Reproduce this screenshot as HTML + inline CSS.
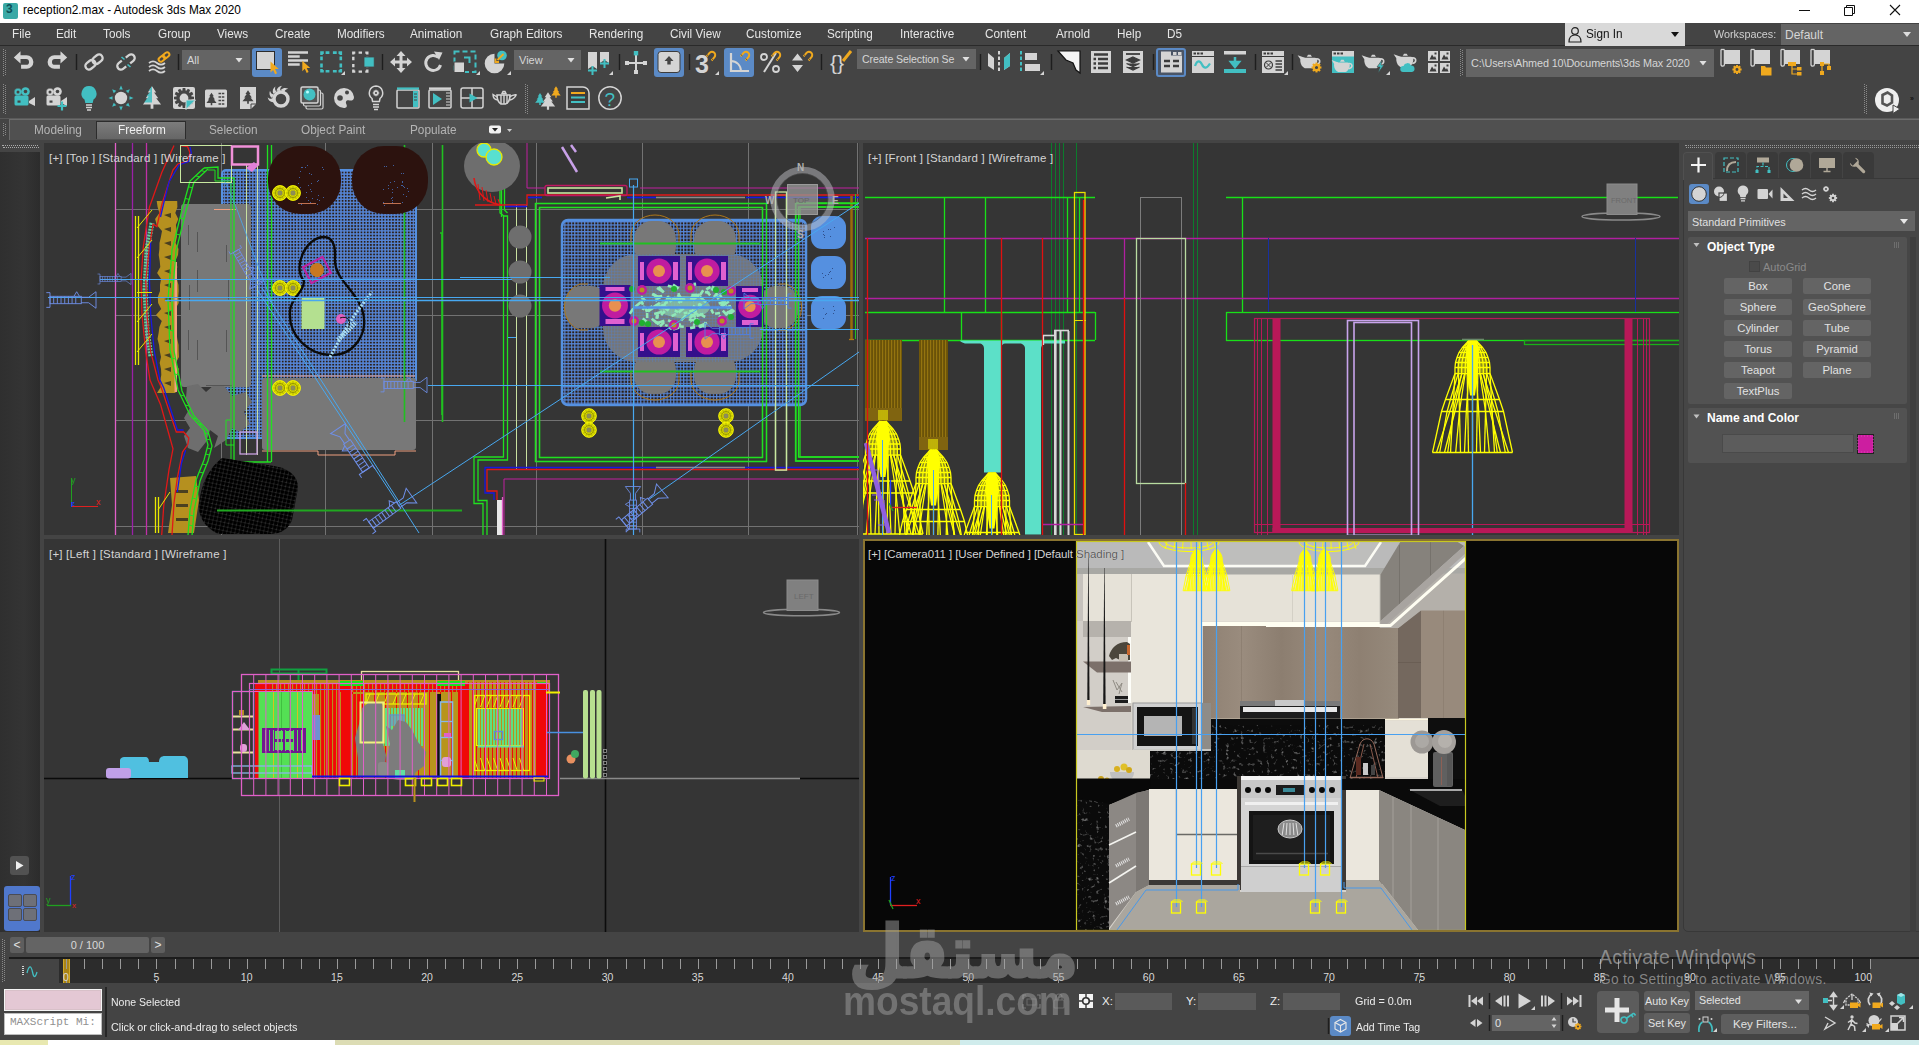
<!DOCTYPE html><html><head><meta charset="utf-8"><title>reception2.max - Autodesk 3ds Max 2020</title><style>
*{box-sizing:border-box;margin:0;padding:0}
html,body{width:1919px;height:1045px;overflow:hidden;background:#444;}
body{position:relative;font-family:"Liberation Sans","DejaVu Sans",sans-serif;font-size:12px;color:#dcdcdc;}
.abs{position:absolute}
.t{position:absolute;white-space:nowrap;line-height:1}
#title{position:absolute;left:0;top:0;width:1919px;height:23px;background:#fff;color:#000}
#menu{position:absolute;left:0;top:23px;width:1919px;height:23px;background:#444;border-bottom:1px solid #2a2a2a}
#menu .t{top:5px;font-size:12.5px;color:#e6e6e6;transform:scaleX(.94);transform-origin:0 0}
.sx{transform:scaleX(.92);transform-origin:0 0}
.dd{position:absolute;background:#646464;color:#d6d6d6;font-size:11px;white-space:nowrap;overflow:hidden}
.btn{position:absolute;background:#646464;border-radius:2px;color:#e2e2e2;font-size:11.5px;text-align:center;white-space:nowrap}
.vp{position:absolute;background:#353535;overflow:hidden}
.vlabel{position:absolute;left:4px;top:8px;font-size:11.5px;color:#d4d4d4;white-space:nowrap;letter-spacing:0.2px}
svg{position:absolute;left:0;top:0;overflow:visible}
</style></head><body>
<div id="title">
<div class="abs" style="left:3px;top:3px;width:15px;height:16px;background:#3aa9a6;border-radius:2px"></div>
<div class="t" style="left:6px;top:3px;font-size:12px;font-weight:bold;color:#0d4f57">3</div>
<div class="t" style="left:23px;top:5px;font-size:11.85px;color:#000">reception2.max - Autodesk 3ds Max 2020</div>
<svg width="1919" height="23"><path d="M1799 10.5h11" stroke="#111" stroke-width="1"/><path d="M1844.5 7.5h8v8h-8z M1846.500 7.5v-2h8v8h-2" fill="none" stroke="#111" stroke-width="1"/><path d="M1890 5l10 10M1900 5l-10 10" stroke="#111" stroke-width="1.1"/></svg>
</div>
<div id="menu">
<div class="t" style="left:12px">File</div>
<div class="t" style="left:56px">Edit</div>
<div class="t" style="left:103px">Tools</div>
<div class="t" style="left:158px">Group</div>
<div class="t" style="left:217px">Views</div>
<div class="t" style="left:275px">Create</div>
<div class="t" style="left:337px">Modifiers</div>
<div class="t" style="left:410px">Animation</div>
<div class="t" style="left:490px">Graph Editors</div>
<div class="t" style="left:589px">Rendering</div>
<div class="t" style="left:670px">Civil View</div>
<div class="t" style="left:746px">Customize</div>
<div class="t" style="left:827px">Scripting</div>
<div class="t" style="left:900px">Interactive</div>
<div class="t" style="left:985px">Content</div>
<div class="t" style="left:1056px">Arnold</div>
<div class="t" style="left:1117px">Help</div>
<div class="t" style="left:1167px">D5</div>
<div class="abs" style="left:1565px;top:0;width:120px;height:23px;background:#d9d9d9"></div>
<div class="t" style="left:1586px;top:5px;color:#111;font-size:12.5px">Sign In</div>
<div class="t" style="left:1714px;top:6px;color:#d0d0d0;font-size:11.5px">Workspaces:</div>
<div class="dd" style="left:1781px;top:1px;width:138px;height:21px;padding:4px 0 0 4px;font-size:12px">Default</div>
<svg width="1919" height="23"><path d="M1671 9h8l-4 5z" fill="#111"/><path d="M1903 9h8l-4 5z" fill="#ddd"/><circle cx="1575" cy="8" r="3.3" fill="none" stroke="#222" stroke-width="1.2"/><path d="M1569 19c0-5 3-7 6-7s6 2 6 7z" fill="none" stroke="#222" stroke-width="1.2"/></svg>
</div>
<div class="abs" style="left:0;top:118px;width:1919px;height:1px;background:#5a5a5a"></div>
<div class="abs" style="left:9px;top:119px;width:1910px;height:21px;background:#505050;border-top:1px solid #6c6c6c;border-left:1px solid #6c6c6c"></div>
<div class="abs" style="left:96px;top:121px;width:90px;height:18px;background:linear-gradient(#7c7c7c,#666);border:1px solid #2c2c2c;border-bottom:none"></div>
<div class="t" style="left:34px;top:124px;font-size:12.3px;color:#b4b4b4;transform:scaleX(.96);transform-origin:0 0">Modeling</div>
<div class="t" style="left:118px;top:124px;font-size:12.3px;color:#f0f0f0;transform:scaleX(.96);transform-origin:0 0">Freeform</div>
<div class="t" style="left:209px;top:124px;font-size:12.3px;color:#b4b4b4;transform:scaleX(.96);transform-origin:0 0">Selection</div>
<div class="t" style="left:301px;top:124px;font-size:12.3px;color:#b4b4b4;transform:scaleX(.96);transform-origin:0 0">Object Paint</div>
<div class="t" style="left:410px;top:124px;font-size:12.3px;color:#b4b4b4;transform:scaleX(.96);transform-origin:0 0">Populate</div>
<div class="dd" style="left:182px;top:50px;width:68px;height:20px;padding:4px 0 0 5px">All</div>
<div class="dd" style="left:514px;top:50px;width:67px;height:20px;padding:4px 0 0 5px">View</div>
<div class="dd" style="left:857px;top:49px;width:119px;height:20px;padding:4px 0 0 5px;font-size:10.6px;letter-spacing:-0.1px">Create Selection Se</div>
<div class="dd" style="left:1466px;top:49px;width:248px;height:28px;padding:8px 0 0 5px;font-size:10.8px;letter-spacing:-0.1px">C:\Users\Ahmed 10\Documents\3ds Max 2020</div>
<div class="abs" style="left:252px;top:48px;width:30px;height:29px;background:#5b8ac6;border-radius:3px"></div>
<div class="abs" style="left:654px;top:48px;width:30px;height:29px;background:#5b8ac6;border-radius:3px"></div>
<div class="abs" style="left:724px;top:48px;width:30px;height:29px;background:#5b8ac6;border-radius:3px"></div>
<div class="abs" style="left:1156px;top:48px;width:30px;height:29px;border:2px solid #5b8ac6;border-radius:3px;background:#4a5566"></div>
<svg width="1919" height="145"><path d="M235.5 58h7l-3.500 4.500z" fill="#e0e0e0"/><path d="M567.5 58h7l-3.500 4.500z" fill="#e0e0e0"/><path d="M962.5 57h7l-3.500 4.500z" fill="#e0e0e0"/><path d="M1699.5 61h7l-3.500 4.500z" fill="#e0e0e0"/><path d="M3.5 49V76M5.5 50V76" stroke="#8a8a8a" stroke-width="1" stroke-dasharray="1 1"/><path d="M3.5 84V114M5.5 85V114" stroke="#8a8a8a" stroke-width="1" stroke-dasharray="1 1"/><path d="M1460.5 49V76M1462.5 50V76" stroke="#8a8a8a" stroke-width="1" stroke-dasharray="1 1"/><path d="M525.5 84V114M527.5 85V114" stroke="#8a8a8a" stroke-width="1" stroke-dasharray="1 1"/><path d="M1864.5 84V114M1866.5 85V114" stroke="#8a8a8a" stroke-width="1" stroke-dasharray="1 1"/><path d="M3.5 123V136M5.5 124V136" stroke="#8a8a8a" stroke-width="1" stroke-dasharray="1 1"/><g transform="translate(25,62)" ><path transform="scale(1.12)" d="M-10 -4l6 -5.500v3.500h5.500a6 6 0 0 1 0 12h-5v-3.500h4.500a2.600 2.600 0 0 0 0 -5.200h-5v4z" fill="#d4d4d4"/></g><g transform="translate(56,62)" ><path transform="scale(-1.120,1.120)" d="M-10 -4l6 -5.500v3.500h5.500a6 6 0 0 1 0 12h-5v-3.500h4.500a2.600 2.600 0 0 0 0 -5.200h-5v4z" fill="#d4d4d4"/></g><path d="M76.5 54v16" stroke="#1e1e1e" stroke-width="1.4"/><g transform="translate(94,62)" ><g transform="rotate(-38)" fill="none" stroke="#d4d4d4" stroke-width="2.300"><rect x="-10" y="-3.600" width="11" height="7.200" rx="3.600"/><rect x="-1" y="-3.600" width="11" height="7.200" rx="3.600"/></g></g><g transform="translate(126,62)" ><g transform="rotate(-38)" fill="none" stroke="#d4d4d4" stroke-width="2.300"><path d="M-2.500 -3.600h-4a3.600 3.600 0 0 0 0 7.200h4M2.500 -3.600h4a3.600 3.600 0 0 1 0 7.200h-4"/></g><path d="M-4.500 -5l3 2.500M1.500 2.500l3 2.500" stroke="#42bfc2" stroke-width="1.600"/></g><g transform="translate(159,62)" ><path d="M-10 1c3 -2.500 5 -2.500 8 0s5 2.500 8 0M-10 5c3 -2.500 5 -2.500 8 0s5 2.500 8 0M-10 9c3 -2.500 5 -2.500 8 0s5 2.500 8 0" fill="none" stroke="#d4d4d4" stroke-width="1.700"/><g transform="translate(5,-5) rotate(-38) scale(.62)" fill="none" stroke="#f0a91e" stroke-width="3.200"><rect x="-10" y="-3.600" width="11" height="7.200" rx="3.600"/><rect x="-1" y="-3.600" width="11" height="7.200" rx="3.600"/></g></g><path d="M178.5 54v16" stroke="#1e1e1e" stroke-width="1.4"/><rect x="256.500" y="51.500" width="18" height="18" fill="#d4d4d4" stroke="#2c2c2c" stroke-width="1"/><g transform="translate(270.500,61.500) scale(1.150)"><path transform="translate(0,0)" d="M0 0v9.500l2.300 -2.200l1.700 3.700l1.700 -.8l-1.700 -3.600h3.200z" fill="#f0a91e"/></g><path d="M288 52.500h20M288 56.500h11.700M288 60.500h20M288 64.500h11.700" stroke="#d4d4d4" stroke-width="2.600"/><g transform="translate(302.300,60.800) scale(1.100)"><path transform="translate(0,0)" d="M0 0v9.500l2.300 -2.200l1.700 3.700l1.700 -.8l-1.700 -3.600h3.200z" fill="#f0a91e"/></g><path d="M320.20 52.60l3.60 0.00M338.50 52.60l3.60 0.00M325.60 52.60l3.80 0.00M332.90 52.60l3.80 0.00M320.20 71.30l3.60 0.00M338.50 71.30l3.60 0.00M325.60 71.30l3.80 0.00M332.90 71.30l3.80 0.00M321.50 51.30l0.00 3.60M321.50 69.00l0.00 3.60M321.50 56.50l0.00 3.80M321.50 63.60l0.00 3.80M340.80 51.30l0.00 3.60M340.80 69.00l0.00 3.60M340.80 56.50l0.00 3.80M340.80 63.60l0.00 3.80" stroke="#42bfc2" stroke-width="2.6" fill="none"/><path d="M345 75v-4l-4 4z" fill="#d4d4d4"/><path d="M352.10 52.60l3.20 0.00M365.30 52.60l3.20 0.00M358.60 52.60l3.40 0.00M352.10 71.60l3.20 0.00M365.30 71.60l3.20 0.00M358.60 71.60l3.40 0.00M353.30 51.40l0.00 3.20M353.30 69.60l0.00 3.20M353.30 56.83l0.00 3.40M353.30 63.97l0.00 3.40M367.30 51.40l0.00 3.20M367.30 69.60l0.00 3.20M367.30 56.83l0.00 3.40M367.30 63.97l0.00 3.40" stroke="#d4d4d4" stroke-width="2.4" fill="none"/><rect x="364" y="57" width="10.200" height="10" fill="#42bfc2" stroke="#444444" stroke-width=".8"/><path d="M382.5 54v16" stroke="#1e1e1e" stroke-width="1.4"/><g transform="translate(401,62)" ><path d="M0 -11l4.500 5h-3v4.500h4.500v-3l5 4.500l-5 4.500v-3h-4.500v4.500h3l-4.500 5l-4.500 -5h3v-4.500h-4.500v3l-5 -4.500l5 -4.500v3h4.500v-4.500h-3z" fill="#d4d4d4"/></g><g transform="translate(433,62)" ><path d="M5.500 -4.500A7.500 7.500 0 1 0 7.500 3" fill="none" stroke="#d4d4d4" stroke-width="3"/><path d="M1 -10.500l8.500 1l-3.500 7.500z" fill="#d4d4d4"/></g><g transform="translate(465,62)" ><rect x="-10.500" y="-10.500" width="21" height="20.500" fill="none" stroke="#42bfc2" stroke-width="2" stroke-dasharray="5 3"/><rect x="-11" y="0" width="10.500" height="10.500" fill="#d4d4d4" stroke="#444444" stroke-width="1"/><path d="M-1 -4.500h5.500v5.500" fill="none" stroke="#42bfc2" stroke-width="2"/></g><path d="M480 75v-4l-4 4z" fill="#d4d4d4"/><g transform="translate(496,62)" ><path d="M-1.500 1.500v-9.800a9.800 9.800 0 1 0 9.800 9.800z" fill="#d4d4d4"/><circle cx="6" cy="-6.500" r="4.800" fill="#42bfc2"/><path d="M7.500 -8l-6 6M-.5 -3.500v3.500h3.500" fill="none" stroke="#f0a91e" stroke-width="1.800"/></g><path d="M511 75v-4l-4 4z" fill="#d4d4d4"/><g transform="translate(599,62)" ><path d="M-11 -10h9v17l-4.500 -3l-4.500 3zM1 -10h9v11l-4.500 -3l-4.500 3z" fill="#d4d4d4"/><path d="M-6.500 4v9M-11 8.500h9M5.500 -3v9M1 1.500h9" stroke="#42bfc2" stroke-width="2"/></g><path d="M613 75v-4l-4 4z" fill="#d4d4d4"/><path d="M619.5 54v16" stroke="#1e1e1e" stroke-width="1.4"/><g transform="translate(636,62)" ><path d="M0 -8v18M-10 1h20" stroke="#d4d4d4" stroke-width="2"/><rect x="-2.200" y="-11" width="4.400" height="4.400" fill="#42bfc2"/><rect x="-11" y="-1" width="4" height="4" fill="#d4d4d4"/><rect x="7" y="-1" width="4" height="4" fill="#d4d4d4"/><rect x="-2" y="8" width="4" height="4" fill="#d4d4d4"/></g><g transform="translate(669,62)" ><rect x="-11" y="-10.500" width="22" height="21" rx="3" fill="#d4d4d4" stroke="#3c3c3c" stroke-width="1"/><path d="M0 -6l4.500 5h-2.800v3.500h-3.400v-3.500h-2.800z" fill="#444"/></g><path d="M689.5 54v16" stroke="#1e1e1e" stroke-width="1.4"/><text x="695" y="73" font-family="Liberation Sans,sans-serif" font-weight="bold" font-size="25" fill="#d4d4d4">3</text><g transform="translate(712,55) rotate(40) scale(1)"><path d="M-3.2 4.5V0a3.2 3.2 0 0 1 6.400 0V4.5" fill="none" stroke="#f0a91e" stroke-width="2"/><path d="M-4.300 3h2.2M2.1 3h2.2" stroke="#444444" stroke-width="0.8"/></g><path d="M719 75v-4l-4 4z" fill="#d4d4d4"/><g transform="translate(739,62)" ><path d="M-8 -9v18h18" fill="none" stroke="#d4d4d4" stroke-width="2.200"/><path d="M-8 -1a10 10 0 0 1 10 10" fill="none" stroke="#d4d4d4" stroke-width="1.800"/></g><g transform="translate(746,55) rotate(40) scale(1)"><path d="M-3.2 4.5V0a3.2 3.2 0 0 1 6.400 0V4.5" fill="none" stroke="#f0a91e" stroke-width="2"/><path d="M-4.300 3h2.2M2.1 3h2.2" stroke="#444444" stroke-width="0.8"/></g><g transform="translate(770,62)" ><path d="M6 -9l-12 19" stroke="#d4d4d4" stroke-width="2"/><circle cx="-6" cy="-5" r="3" fill="none" stroke="#d4d4d4" stroke-width="1.800"/><circle cx="6" cy="7" r="3" fill="none" stroke="#d4d4d4" stroke-width="1.800"/></g><g transform="translate(777,55) rotate(40) scale(1)"><path d="M-3.2 4.5V0a3.2 3.2 0 0 1 6.400 0V4.5" fill="none" stroke="#f0a91e" stroke-width="2"/><path d="M-4.300 3h2.2M2.1 3h2.2" stroke="#444444" stroke-width="0.8"/></g><g transform="translate(800,62)" ><path d="M-8 -1.500h11l-5.500 -7zM-8 3h11l-5.500 7z" fill="#d4d4d4"/></g><g transform="translate(809,55) rotate(40) scale(1)"><path d="M-3.2 4.5V0a3.2 3.2 0 0 1 6.400 0V4.5" fill="none" stroke="#f0a91e" stroke-width="2"/><path d="M-4.300 3h2.2M2.1 3h2.2" stroke="#444444" stroke-width="0.8"/></g><path d="M821.5 54v16" stroke="#1e1e1e" stroke-width="1.4"/><text x="830" y="70" font-family="Liberation Sans,sans-serif" font-size="21" fill="#d4d4d4">{}</text><path d="M851 51l-8 10" stroke="#f0a91e" stroke-width="3"/><path d="M980.5 54v16" stroke="#1e1e1e" stroke-width="1.4"/><g transform="translate(999,62)" ><path d="M-11 -9l6 5v12l-6 -4zM11 -9l-6 5v12l6 -4z" fill="#d4d4d4"/><path d="M11 -9l-6 5v12l6 -4z" fill="#42bfc2"/><path d="M0 -11v22" stroke="#d4d4d4" stroke-width="2" stroke-dasharray="3.500 2"/></g><g transform="translate(1031,62)" ><path d="M-10 -11v22" stroke="#42bfc2" stroke-width="2" stroke-dasharray="3.500 2"/><rect x="-6" y="-9" width="12" height="7" fill="#d4d4d4"/><rect x="-6" y="2" width="15" height="7" fill="#d4d4d4"/></g><path d="M1044 75v-4l-4 4z" fill="#d4d4d4"/><path d="M1051.5 54v16" stroke="#1e1e1e" stroke-width="1.4"/><g transform="translate(1068,62)" ><path d="M-10 -11h22v22l-4 -3l-3 -7l-7 -3z" fill="#f4f4f4" stroke="#111" stroke-width="1.200"/></g><g transform="translate(1101,62)" ><rect x="-10" y="-11" width="20" height="22" fill="#d4d4d4"/><path d="M-7 -7.500h14M-3 -3h10M-3 1.500h10M-3 6h10M-7.500 -3h2.500M-7.500 1.500h2.500M-7.500 6h2.500" stroke="#3c3c3c" stroke-width="2.300"/></g><g transform="translate(1133,62)" ><rect x="-10" y="-11" width="20" height="22" fill="#d4d4d4"/><path d="M-7 -8h14" stroke="#3c3c3c" stroke-width="1.800"/><path d="M0 -5l6.500 3l-6.500 3l-6.500 -3zM-6.500 1.500l6.500 3l6.500 -3M-6.500 5l6.500 3l6.500 -3" fill="#3c3c3c" stroke="#3c3c3c" stroke-width="1.200"/></g><path d="M1153.5 54v16" stroke="#1e1e1e" stroke-width="1.4"/><g transform="translate(1171,62)" ><path d="M-10 -10.500h10v4h11v17h-21z" fill="#d4d4d4"/><path d="M2 -10h3.500v3h-3.500zM7 -10h3.500v3h-3.500z" fill="#d4d4d4"/><path d="M-7 -1h6M2 -1h6M-7 4h6M2 4h6" stroke="#3c3c3c" stroke-width="2.300"/></g><g transform="translate(1203,62)" ><rect x="-11" y="-11" width="22" height="22" fill="#d4d4d4"/><path d="M-9.500 -8.500h2.500M-6 -8.500h2.500M-2.500 -8.500h2.500" stroke="#3c3c3c" stroke-width="1.800"/><path d="M-11 -5.500h22" stroke="#3c3c3c" stroke-width="1"/><path d="M-8 4c2 -6 5 -6 7 -1.500s5 4 8 -1" fill="none" stroke="#42bfc2" stroke-width="2.200"/></g><g transform="translate(1235,62)" ><rect x="-11" y="-11" width="22" height="3.500" fill="#d4d4d4"/><rect x="-11" y="7" width="22" height="4" fill="#42bfc2"/><path d="M0 -5v6M-4 0h8l-4 5z" fill="#42bfc2" stroke="#42bfc2" stroke-width="2.500"/></g><path d="M1255.5 54v16" stroke="#1e1e1e" stroke-width="1.4"/><g transform="translate(1273,62)" ><rect x="-11" y="-11" width="22" height="22" fill="#d4d4d4"/><path d="M-9.500 -8.500h2.500M-6 -8.500h2.500M-2.500 -8.500h2.500" stroke="#3c3c3c" stroke-width="1.800"/><path d="M-11 -5.500h22" stroke="#3c3c3c" stroke-width="1"/><circle cx="-4.500" cy="3" r="4" fill="none" stroke="#3c3c3c" stroke-width="1.200"/><path d="M-7 0.500l5 5M-2 0.500l-5 5" stroke="#3c3c3c" stroke-width="1"/><path d="M2.500 -1h6.500M2.500 2h6.500M2.500 5h6.500M2.500 8h6.500" stroke="#3c3c3c" stroke-width="1.600"/></g><path d="M1288 75v-4l-4 4z" fill="#d4d4d4"/><path d="M1292.5 54v16" stroke="#1e1e1e" stroke-width="1.4"/><g transform="translate(1311,62)" ><g transform="translate(-1,-1) scale(1.3)"><path d="M-5.5 -2.500h9c1.800 0 2.500 1.500 2 3.500c-.6 2.500 -2 4 -3.500 4.500h-6c-2 -.8 -3.300 -3 -3.500 -5.500c0 -1.500 .8 -2.500 2 -2.500z" fill="#d4d4d4"/><path d="M-4 -2.500l-5.500 -2l4 6z" fill="#d4d4d4"/><path d="M-2.500 -3.200h4l-1 -1.600h-2z" fill="#d4d4d4"/><path d="M4.500 -1.500c3.500 -1 4.200 3.500 .3 4.200" fill="none" stroke="#d4d4d4" stroke-width="1.300"/></g><circle cx="5.5" cy="5.5" r="2.67" fill="none" stroke="#f0a91e" stroke-width="2.15"/><path d="M8.51 5.50L10.45 5.50" stroke="#f0a91e" stroke-width="2.15"/><path d="M7.63 7.63L9.00 9.00" stroke="#f0a91e" stroke-width="2.15"/><path d="M5.50 8.51L5.50 10.45" stroke="#f0a91e" stroke-width="2.15"/><path d="M3.37 7.63L2.00 9.00" stroke="#f0a91e" stroke-width="2.15"/><path d="M2.49 5.50L0.56 5.50" stroke="#f0a91e" stroke-width="2.15"/><path d="M3.37 3.37L2.00 2.00" stroke="#f0a91e" stroke-width="2.15"/><path d="M5.50 2.49L5.50 0.56" stroke="#f0a91e" stroke-width="2.15"/><path d="M7.63 3.37L9.00 2.00" stroke="#f0a91e" stroke-width="2.15"/></g><g transform="translate(1343,62)" ><rect x="-11" y="-11" width="22" height="22" fill="#42bfc2"/><rect x="-11" y="-11" width="22" height="5.500" fill="#d4d4d4"/><path d="M-9.500 -8.500h2.500M-6 -8.500h2.500M-2.500 -8.500h2.500" stroke="#3c3c3c" stroke-width="1.800"/><g transform="translate(0,3.5) scale(1.2)"><path d="M-5.5 -2.500h9c1.800 0 2.500 1.500 2 3.500c-.6 2.500 -2 4 -3.500 4.500h-6c-2 -.8 -3.300 -3 -3.500 -5.500c0 -1.500 .8 -2.500 2 -2.500z" fill="#d4d4d4"/><path d="M-4 -2.500l-5.500 -2l4 6z" fill="#d4d4d4"/><path d="M-2.500 -3.200h4l-1 -1.600h-2z" fill="#d4d4d4"/><path d="M4.500 -1.500c3.500 -1 4.200 3.500 .3 4.200" fill="none" stroke="#d4d4d4" stroke-width="1.300"/></g></g><g transform="translate(1375,62)" ><g transform="translate(-1,-1) scale(1.3)"><path d="M-5.5 -2.500h9c1.800 0 2.500 1.500 2 3.500c-.6 2.500 -2 4 -3.500 4.500h-6c-2 -.8 -3.300 -3 -3.500 -5.500c0 -1.500 .8 -2.500 2 -2.500z" fill="#d4d4d4"/><path d="M-4 -2.500l-5.500 -2l4 6z" fill="#d4d4d4"/><path d="M-2.500 -3.200h4l-1 -1.600h-2z" fill="#d4d4d4"/><path d="M4.500 -1.500c3.500 -1 4.200 3.500 .3 4.200" fill="none" stroke="#d4d4d4" stroke-width="1.300"/></g><path d="M7 -2l-5 7h3l-2 6l6 -8h-3z" fill="#42bfc2" stroke="#444444" stroke-width=".6"/></g><path d="M1390 75v-4l-4 4z" fill="#d4d4d4"/><g transform="translate(1407,62)" ><g transform="translate(-1,-2) scale(1.3)"><path d="M-5.5 -2.500h9c1.800 0 2.500 1.500 2 3.500c-.6 2.500 -2 4 -3.500 4.500h-6c-2 -.8 -3.300 -3 -3.500 -5.500c0 -1.500 .8 -2.500 2 -2.500z" fill="#d4d4d4"/><path d="M-4 -2.500l-5.500 -2l4 6z" fill="#d4d4d4"/><path d="M-2.500 -3.200h4l-1 -1.600h-2z" fill="#d4d4d4"/><path d="M4.500 -1.500c3.500 -1 4.200 3.500 .3 4.200" fill="none" stroke="#d4d4d4" stroke-width="1.300"/></g><path d="M-4 10a3 3 0 0 1 .5 -6a4 4 0 0 1 7.500 -.5a3.300 3.300 0 0 1 1 6.500z" fill="#42bfc2"/></g><g transform="translate(1439,62)" ><g transform="translate(-11,-11)"><rect x="0" y="0" width="10" height="10" fill="#d4d4d4"/><path d="M1.500 8.500l2.500 -5l2 3l1 -1.500l1.500 3.500z" fill="#3c3c3c"/><rect x="6.500" y="1.500" width="2" height="2" fill="#3c3c3c"/></g><g transform="translate(-11,1)"><rect x="0" y="0" width="10" height="10" fill="#d4d4d4"/><path d="M1.500 8.500l2.500 -5l2 3l1 -1.500l1.500 3.500z" fill="#3c3c3c"/><rect x="6.500" y="1.500" width="2" height="2" fill="#3c3c3c"/></g><g transform="translate(1,-11)"><rect x="0" y="0" width="10" height="10" fill="#d4d4d4"/><path d="M1.500 8.500l2.500 -5l2 3l1 -1.500l1.500 3.500z" fill="#3c3c3c"/><rect x="6.500" y="1.500" width="2" height="2" fill="#3c3c3c"/></g><g transform="translate(1,1)"><rect x="0" y="0" width="10" height="10" fill="#d4d4d4"/><path d="M1.500 8.500l2.500 -5l2 3l1 -1.500l1.500 3.500z" fill="#3c3c3c"/><rect x="6.500" y="1.500" width="2" height="2" fill="#3c3c3c"/></g></g><g transform="translate(1730,60)"><path d="M-6 -10h16v14h-16z" fill="#d4d4d4"/><path d="M-9 -10.500v15a1.700 1.700 0 0 0 3.400 0v-15" fill="none" stroke="#d4d4d4" stroke-width="1.300"/><path d="M-9 -10.500h3.400" stroke="#d4d4d4" stroke-width="1.300"/></g><circle cx="1737" cy="69.5" r="2.48" fill="none" stroke="#f0a91e" stroke-width="2.00"/><path d="M1739.80 69.50L1741.60 69.50" stroke="#f0a91e" stroke-width="2.00"/><path d="M1738.98 71.48L1740.25 72.75" stroke="#f0a91e" stroke-width="2.00"/><path d="M1737.00 72.30L1737.00 74.10" stroke="#f0a91e" stroke-width="2.00"/><path d="M1735.02 71.48L1733.75 72.75" stroke="#f0a91e" stroke-width="2.00"/><path d="M1734.20 69.50L1732.40 69.50" stroke="#f0a91e" stroke-width="2.00"/><path d="M1735.02 67.52L1733.75 66.25" stroke="#f0a91e" stroke-width="2.00"/><path d="M1737.00 66.70L1737.00 64.90" stroke="#f0a91e" stroke-width="2.00"/><path d="M1738.98 67.52L1740.25 66.25" stroke="#f0a91e" stroke-width="2.00"/><g transform="translate(1760,60)"><path d="M-6 -10h16v14h-16z" fill="#d4d4d4"/><path d="M-9 -10.500v15a1.700 1.700 0 0 0 3.400 0v-15" fill="none" stroke="#d4d4d4" stroke-width="1.300"/><path d="M-9 -10.500h3.400" stroke="#d4d4d4" stroke-width="1.300"/></g><path d="M1761 66h4l1 1.500h5.500v8h-10.500z" fill="#f0a91e"/><g transform="translate(1790,60)"><path d="M-6 -10h16v14h-16z" fill="#d4d4d4"/><path d="M-9 -10.500v15a1.700 1.700 0 0 0 3.400 0v-15" fill="none" stroke="#d4d4d4" stroke-width="1.300"/><path d="M-9 -10.500h3.400" stroke="#d4d4d4" stroke-width="1.300"/></g><path d="M1788 62h8v4h-8zM1797 67h4.500v3.500h-4.500zM1797 72h4.500v3.500h-4.500z" fill="#f0a91e"/><path d="M1792 66v8h5M1792 69h5" fill="none" stroke="#f0a91e" stroke-width="1.200"/><g transform="translate(1820,60)"><path d="M-6 -10h16v14h-16z" fill="#d4d4d4"/><path d="M-9 -10.500v15a1.700 1.700 0 0 0 3.400 0v-15" fill="none" stroke="#d4d4d4" stroke-width="1.300"/><path d="M-9 -10.500h3.400" stroke="#d4d4d4" stroke-width="1.300"/></g><path d="M1820 62h4v4h-4zM1827 66h4v4h-4zM1820 71h4v4h-4z" fill="#f0a91e"/><path d="M1822 66v5M1824 64h5v2" fill="none" stroke="#f0a91e" stroke-width="1.200"/><g transform="translate(24,98)" ><circle cx="-6" cy="-6" r="3.800" fill="#42bfc2" stroke="#555" stroke-width=".5"/><circle cx="1.500" cy="-6.500" r="4.300" fill="#42bfc2"/><circle cx="-6" cy="-6" r="1.500" fill="#444444"/><circle cx="1.500" cy="-6.500" r="1.800" fill="#444444"/><rect x="-9.500" y="-2.500" width="14" height="10" rx="1.500" fill="#42bfc2"/><path d="M5 3l6 -4v9l-6 -3z" fill="#d4d4d4"/><rect x="-6.500" y="2.500" width="3" height="2.200" fill="#444444"/></g><g transform="translate(56,98)" ><circle cx="-6" cy="-6" r="3.800" fill="#d4d4d4" stroke="#555" stroke-width=".5"/><circle cx="1.500" cy="-6.500" r="4.300" fill="#d4d4d4"/><circle cx="-6" cy="-6" r="1.500" fill="#444444"/><circle cx="1.500" cy="-6.500" r="1.800" fill="#444444"/><rect x="-9.500" y="-2.500" width="14" height="10" rx="1.500" fill="#d4d4d4"/><path d="M5 3l6 -4v9l-6 -3z" fill="#d4d4d4"/><rect x="-6.500" y="2.500" width="3" height="2.200" fill="#444444"/><path d="M6 3.500v9M1.500 8h9" stroke="#42bfc2" stroke-width="2.200"/></g><g transform="translate(89,98)" ><path d="M0 -12a7.500 7.500 0 0 1 4.500 13.500l-.8 3.500h-7.400l-.8 -3.500a7.500 7.500 0 0 1 4.500 -13.500z" fill="#42bfc2"/><path d="M-3 7h6M-3 9.500h6M-2 12h4" stroke="#d4d4d4" stroke-width="1.600"/></g><g transform="translate(121,98)" ><circle r="6.200" fill="#d4d4d4"/><path transform="rotate(0)" d="M-1.800 -8.500h3.600l-1.800 -4z" fill="#42bfc2"/><path transform="rotate(45)" d="M-1.800 -8.500h3.600l-1.800 -4z" fill="#42bfc2"/><path transform="rotate(90)" d="M-1.800 -8.500h3.600l-1.800 -4z" fill="#42bfc2"/><path transform="rotate(135)" d="M-1.800 -8.500h3.600l-1.800 -4z" fill="#42bfc2"/><path transform="rotate(180)" d="M-1.800 -8.500h3.600l-1.800 -4z" fill="#42bfc2"/><path transform="rotate(225)" d="M-1.800 -8.500h3.600l-1.800 -4z" fill="#42bfc2"/><path transform="rotate(270)" d="M-1.800 -8.500h3.600l-1.800 -4z" fill="#42bfc2"/><path transform="rotate(315)" d="M-1.800 -8.500h3.600l-1.800 -4z" fill="#42bfc2"/></g><g transform="translate(152,98)" ><path transform="translate(0,-0.5) scale(1.4)" d="M0 -8l3 4.500h-1.500l3 4h-1.500l3.500 4.500h-5.500v3h-2v-3h-5.500l3.500 -4.500h-1.500l3 -4h-1.500z" fill="#d4d4d4"/><path transform="scale(1.120)" d="M0 -10.500v14.500h-7l4 -5.500h-2l4 -5h-2z" fill="#42bfc2" opacity=".9"/></g><g transform="translate(184,98)" ><rect x="-11" y="-11" width="22" height="22" rx="2" fill="#d4d4d4"/><path transform="rotate(0)" d="M-1.800 -6.500l.5 -3.500h2.600l.5 3.500z" fill="#444"/><path transform="rotate(30)" d="M-1.800 -6.500l.5 -3.500h2.600l.5 3.500z" fill="#444"/><path transform="rotate(60)" d="M-1.800 -6.500l.5 -3.500h2.600l.5 3.500z" fill="#444"/><path transform="rotate(90)" d="M-1.800 -6.500l.5 -3.500h2.600l.5 3.500z" fill="#444"/><path transform="rotate(120)" d="M-1.800 -6.500l.5 -3.500h2.600l.5 3.500z" fill="#444"/><path transform="rotate(150)" d="M-1.800 -6.500l.5 -3.500h2.600l.5 3.500z" fill="#444"/><path transform="rotate(180)" d="M-1.800 -6.500l.5 -3.500h2.600l.5 3.500z" fill="#444"/><path transform="rotate(210)" d="M-1.800 -6.500l.5 -3.500h2.600l.5 3.500z" fill="#444"/><path transform="rotate(240)" d="M-1.800 -6.500l.5 -3.500h2.600l.5 3.500z" fill="#444"/><path transform="rotate(270)" d="M-1.800 -6.500l.5 -3.500h2.600l.5 3.500z" fill="#444"/><path transform="rotate(300)" d="M-1.800 -6.500l.5 -3.500h2.600l.5 3.500z" fill="#444"/><path transform="rotate(330)" d="M-1.800 -6.500l.5 -3.500h2.600l.5 3.500z" fill="#444"/><circle r="6" fill="none" stroke="#444" stroke-width="3.200"/><path d="M2 2h9.500l-9.500 9.500z" fill="#42bfc2" stroke="#d4d4d4" stroke-width="1"/></g><g transform="translate(216,98)" ><rect x="-11" y="-8.500" width="22" height="18" rx="1.500" fill="#d4d4d4"/><path transform="translate(-4.5,1) scale(0.78)" d="M0 -8l3 4.500h-1.500l3 4h-1.500l3.500 4.500h-5.500v3h-2v-3h-5.500l3.500 -4.500h-1.500l3 -4h-1.500z" fill="#444"/><path d="M2.500 -4.500h6M2.500 -1h6M2.500 2.500h6M2.500 6h6" stroke="#444" stroke-width="1.700" stroke-dasharray="2.500 .8"/></g><g transform="translate(248,98)" ><path d="M-8 -11h16v17l-5 5h-11z" fill="#d4d4d4"/><path transform="translate(0,-1) scale(0.85)" d="M0 -8l3 4.500h-1.500l3 4h-1.500l3.500 4.500h-5.500v3h-2v-3h-5.500l3.500 -4.500h-1.500l3 -4h-1.500z" fill="#444"/><path d="M3 11v-5h5" fill="none" stroke="#444" stroke-width="1"/></g><g transform="translate(280,98)" ><circle cx="1" cy="1" r="7" fill="none" stroke="#d4d4d4" stroke-width="3.400"/><path transform="rotate(-100)" d="M-3 -7.500c1 -3 3 -4.500 6 -4.500c-2 1.500 -2.500 3 -2 5z" fill="#d4d4d4"/><path transform="rotate(-68)" d="M-3 -7.500c1 -3 3 -4.500 6 -4.500c-2 1.500 -2.500 3 -2 5z" fill="#d4d4d4"/><path transform="rotate(-36)" d="M-3 -7.500c1 -3 3 -4.500 6 -4.500c-2 1.500 -2.500 3 -2 5z" fill="#d4d4d4"/><path transform="rotate(-4)" d="M-3 -7.500c1 -3 3 -4.500 6 -4.500c-2 1.500 -2.500 3 -2 5z" fill="#d4d4d4"/><path transform="rotate(28)" d="M-3 -7.500c1 -3 3 -4.500 6 -4.500c-2 1.500 -2.500 3 -2 5z" fill="#d4d4d4"/></g><g transform="translate(312,98)" ><rect x="-6" y="-5" width="17" height="16" rx="1.500" fill="none" stroke="#d4d4d4" stroke-width="1.200"/><rect x="-8.500" y="-8" width="17" height="16" rx="1.500" fill="#444" stroke="#d4d4d4" stroke-width="1.200"/><rect x="-11" y="-11" width="17" height="16" rx="1.500" fill="#555" stroke="#d4d4d4" stroke-width="1.500"/><circle cx="-2.500" cy="-3.500" r="6" fill="#42bfc2"/><circle cx="-4.500" cy="-6" r="1.500" fill="#bff"/></g><g transform="translate(344,98)" ><path d="M0 -10a10 10 0 0 1 10 9c0 3 -2 4 -4.500 3.500c-3 -.7 -4.500 1 -3 4c1 2.500 -.5 3.500 -2.500 3.500a10 10 0 0 1 0 -20z" fill="#d4d4d4"/><circle cx="-4" cy="0" r="2.800" fill="#444"/><circle cx="3" cy="-5.500" r="2" fill="#444"/></g><g transform="translate(376,98)" ><path d="M0 -12a7 7 0 0 1 4 12.500l-.6 3h-6.800l-.6 -3a7 7 0 0 1 4 -12.500z" fill="none" stroke="#d4d4d4" stroke-width="1.500"/><path d="M-3 6.500h6M-3 9h6M-2 11.500h4" stroke="#d4d4d4" stroke-width="1.500"/><circle cx="0" cy="-5" r="1.74" fill="none" stroke="#d4d4d4" stroke-width="1.40"/><path d="M1.96 -5.00L3.22 -5.00" stroke="#d4d4d4" stroke-width="1.40"/><path d="M1.39 -3.61L2.28 -2.72" stroke="#d4d4d4" stroke-width="1.40"/><path d="M0.00 -3.04L0.00 -1.78" stroke="#d4d4d4" stroke-width="1.40"/><path d="M-1.39 -3.61L-2.28 -2.72" stroke="#d4d4d4" stroke-width="1.40"/><path d="M-1.96 -5.00L-3.22 -5.00" stroke="#d4d4d4" stroke-width="1.40"/><path d="M-1.39 -6.39L-2.28 -7.28" stroke="#d4d4d4" stroke-width="1.40"/><path d="M-0.00 -6.96L-0.00 -8.22" stroke="#d4d4d4" stroke-width="1.40"/><path d="M1.39 -6.39L2.28 -7.28" stroke="#d4d4d4" stroke-width="1.40"/></g><g transform="translate(408,98)" ><rect x="-11" y="-8" width="22" height="18" rx="1" fill="none" stroke="#d4d4d4" stroke-width="1.500"/><path d="M-11 -9.500h22" stroke="#42bfc2" stroke-width="2.200"/><rect x="5" y="-7" width="5" height="16" fill="#42bfc2"/><path d="M6 -4h3M6 -1h3M6 2h3" stroke="#444" stroke-width="1"/></g><g transform="translate(440,98)" ><rect x="-11" y="-8" width="22" height="18" rx="1" fill="none" stroke="#d4d4d4" stroke-width="1.500"/><path d="M-11 -9.500h22" stroke="#d4d4d4" stroke-width="2.200"/><path d="M-7 -5l9 6l-9 6z" fill="#42bfc2"/><path d="M6 -5h4M6 -2h4M6 1h4M6 4h4M6 7h4" stroke="#d4d4d4" stroke-width="1.200"/></g><g transform="translate(472,98)" ><rect x="-11" y="-10" width="22" height="20" rx="2" fill="none" stroke="#d4d4d4" stroke-width="1.500"/><path d="M0 -10v20M-11 0h22" stroke="#d4d4d4" stroke-width="1.500"/><path d="M-2.500 -4.500l8 4.500l-8 4.500z" fill="#42bfc2"/></g><g transform="translate(504,98)" ><path d="M-7 -3h13c0 5 -2 8 -4.500 9h-4.500c-2.500 -1.500 -4 -4 -4 -9z" fill="none" stroke="#d4d4d4" stroke-width="1.600"/><path d="M-7 -1l-4 -2.500c0 3 1.500 5 4.500 5.500M6 -1.500c4 -2 6 -1.500 6.500 -2c-1 2 -3 5 -6.500 5.500M-3 -3v9M0 -3v9M3 -3v9M-2 -4.500h4l-1 -2h-2z" fill="none" stroke="#d4d4d4" stroke-width="1.400"/></g><path transform="translate(540,99) scale(0.75)" d="M0 -8l3 4.500h-1.500l3 4h-1.500l3.500 4.500h-5.500v3h-2v-3h-5.500l3.500 -4.500h-1.500l3 -4h-1.500z" fill="#42bfc2"/><path transform="translate(556,92) scale(0.72)" d="M0 -8l3 4.500h-1.500l3 4h-1.500l3.500 4.500h-5.500v3h-2v-3h-5.500l3.500 -4.500h-1.500l3 -4h-1.500z" fill="#f0a91e"/><path transform="translate(548,101) scale(1.1)" d="M0 -8l3 4.500h-1.500l3 4h-1.500l3.500 4.500h-5.500v3h-2v-3h-5.500l3.500 -4.500h-1.500l3 -4h-1.500z" fill="#d4d4d4"/><g transform="translate(578,98)" ><path d="M-11 -11h16a6 6 0 0 1 6 6v16h-22z" fill="#3c3c3c" stroke="#d4d4d4" stroke-width="1.500"/><path d="M-7 -5h14" stroke="#f0a91e" stroke-width="2"/><path d="M-7 -.5h14M-7 4h14" stroke="#42bfc2" stroke-width="2"/></g><g transform="translate(610,98)" ><circle r="11.200" fill="none" stroke="#d4d4d4" stroke-width="1.500"/></g><text x="604.500" y="105.500" font-family="Liberation Sans,sans-serif" font-size="19" fill="#42bfc2">?</text><g transform="translate(1887,100)" ><circle r="12" fill="#efefef"/><path d="M-4.500 -5l5 -2.500l4.500 3v7l-5 3l-4.500 -2z" fill="none" stroke="#555" stroke-width="2.600"/><path d="M6 5l7 4l-7 4.500z" fill="#efefef" stroke="#444" stroke-width="1"/></g><text x="1910" y="101" font-family="Liberation Sans,sans-serif" font-size="7" font-weight="bold" fill="#111">&#187;</text><rect x="489" y="125.500" width="12" height="8" rx="2" fill="#f2f2f2"/><path d="M492 128h6l-3 3.500z" fill="#222"/><path d="M507 129h5l-2.500 3z" fill="#ccc"/></svg>
<div class="abs" style="left:0;top:152px;width:40px;height:780px;background:linear-gradient(90deg,#2f2f2f,#343434 60%,#2c2c2c)"></div>
<div class="abs" style="left:2px;top:145px;width:36px;height:1px;border-top:1px dotted #aaa"></div><div class="abs" style="left:3px;top:147px;width:36px;height:1px;border-top:1px dotted #aaa"></div>
<div class="vp" style="left:44px;top:143px;width:815px;height:392px;background:#353535;"><svg width="815" height="392" style="left:0px;top:0px"><g transform="translate(-44,-143)"><defs><pattern id="hatch" width="3.150" height="3.150" patternUnits="userSpaceOnUse"><rect width="3.150" height="3.150" fill="#2a1e16"/><path d="M0 .8h3.150M.8 0v3.150" stroke="#5686d8" stroke-width="1.380"/></pattern><pattern id="hatch2" width="3.300" height="3.300" patternUnits="userSpaceOnUse"><rect width="3.300" height="3.300" fill="#2a1e16"/><path d="M0 .6h3.300M.6 0v3.300" stroke="#5686d8" stroke-width="1.150"/></pattern><pattern id="ghatch" width="3.150" height="3.150" patternUnits="userSpaceOnUse"><rect width="3.150" height="3.150" fill="#767676"/><path d="M0 .5h3.150M.5 0v3.150" stroke="#5a7fb8" stroke-width=".5"/></pattern><pattern id="mesh" width="4" height="4" patternUnits="userSpaceOnUse" patternTransform="rotate(12)"><rect width="4" height="4" fill="#000"/><path d="M0 .5h4M.5 0v4" stroke="#3c3c3c" stroke-width=".55" stroke-dasharray="1.500 1"/></pattern></defs><path d="M115.5 143L115.5 535" stroke="#727272" stroke-width="1" fill="none" /><path d="M221.5 143L221.5 535" stroke="#727272" stroke-width="1" fill="none" /><path d="M325.5 143L325.5 535" stroke="#727272" stroke-width="1" fill="none" /><path d="M432.5 143L432.5 535" stroke="#727272" stroke-width="1" fill="none" /><path d="M536.5 143L536.5 535" stroke="#727272" stroke-width="1" fill="none" /><path d="M642.5 143L642.5 535" stroke="#727272" stroke-width="1" fill="none" /><path d="M748.5 143L748.5 535" stroke="#727272" stroke-width="1" fill="none" /><path d="M857.5 143L857.5 535" stroke="#727272" stroke-width="1" fill="none" /><path d="M115 209.5L859 209.5" stroke="#727272" stroke-width="1" fill="none" /><path d="M115 315.5L859 315.5" stroke="#727272" stroke-width="1" fill="none" /><path d="M115 420.5L859 420.5" stroke="#727272" stroke-width="1" fill="none" /><path d="M115 526.5L859 526.5" stroke="#727272" stroke-width="1" fill="none" /><path d="M115.5 143L115.5 535" stroke="#e060c8" stroke-width="1.3" fill="none" /><path d="M132.5 143L132.5 535" stroke="#9a20a8" stroke-width="1.3" fill="none" /><path d="M146.5 143L146.5 535" stroke="#c030a8" stroke-width="1.3" fill="none" /><path d="M226 170h186a4 4 0 0 1 4 4v206h-152v58h-42v-264a4 4 0 0 1 4 -4z" fill="url(#hatch)" stroke="#5590e0" stroke-width="2"/><rect x="181" y="204" width="70" height="183" fill="#787878" rx="3" /><rect x="262" y="378" width="154" height="72" fill="#787878" rx="3" /><path d="M187 386L198 384L206 392L214 385L224 386L232 396L246 392L252 402L244 412L250 424L240 432L232 428L226 440L214 448L218 436L210 430L206 442L198 452L188 448L184 436L190 428L184 418L190 408L186 398z" stroke="none" stroke-width="0" fill="#6e6e6e" /><path d="M188.5 225L188.5 245" stroke="#555" stroke-width="1" fill="none" /><path d="M197.5 232L197.5 252" stroke="#555" stroke-width="1" fill="none" /><path d="M189.5 285L189.5 310" stroke="#555" stroke-width="1" fill="none" /><path d="M197.5 270L197.5 292" stroke="#555" stroke-width="1" fill="none" /><path d="M188.5 330L188.5 350" stroke="#555" stroke-width="1" fill="none" /><path d="M197.5 340L197.5 360" stroke="#555" stroke-width="1" fill="none" /><path d="M226.5 245L226.5 262" stroke="#555" stroke-width="1" fill="none" /><path d="M228.5 280L228.5 300" stroke="#555" stroke-width="1" fill="none" /><path d="M226.5 330L226.5 352" stroke="#555" stroke-width="1" fill="none" /><path d="M214 209.5L236 209.5" stroke="#f0a080" stroke-width="1" fill="none" /><path d="M206 385.5L232 385.5" stroke="#555" stroke-width="1" fill="none" /><path d="M262 376L415 376" stroke="#f0a080" stroke-width="1" fill="none" /><path d="M262 451L318 451L318 455L395 455L395 451L416 451" stroke="#f0a080" stroke-width="1" fill="none" /><path d="M156.7 201L157.6 207L159.4 213L155.1 219L156.8 225L162 231L160.9 237L159.5 243L159.4 249L158.7 255L159.7 261L160.3 267L157.1 273L161.1 279L160 285L160 291L157.8 297L158.1 303L161.2 309L156 315L161.8 321L159.4 327L158.6 333L157.5 339L159.1 345L159.8 351L161 357L159.7 363L161 369L161.3 375L160 381L160.8 387L157 393L175.3 393L177.3 387L175.8 381L177.3 375L178.9 369L175.7 363L179 357L178.7 351L178.6 345L177.3 339L176.5 333L176.2 327L176.7 321L175.9 315L175.4 309L178.7 303L178.2 297L178.7 291L178.5 285L176.9 279L175.1 273L177.4 267L175.3 261L178 255L178.5 249L175.6 243L176.9 237L176.9 231L175.9 225L178.3 219L175.3 213L177.4 207L177.2 201z" stroke="none" stroke-width="0" fill="#b5901f" /><path d="M164 215L171 213L171 218z" stroke="none" stroke-width="0" fill="#4a4020" /><path d="M164 229L171 227L171 232z" stroke="none" stroke-width="0" fill="#4a4020" /><path d="M164 243L171 241L171 246z" stroke="none" stroke-width="0" fill="#4a4020" /><path d="M164 257L171 255L171 260z" stroke="none" stroke-width="0" fill="#4a4020" /><path d="M164 271L171 269L171 274z" stroke="none" stroke-width="0" fill="#4a4020" /><path d="M164 285L171 283L171 288z" stroke="none" stroke-width="0" fill="#4a4020" /><path d="M164 299L171 297L171 302z" stroke="none" stroke-width="0" fill="#4a4020" /><path d="M164 313L171 311L171 316z" stroke="none" stroke-width="0" fill="#4a4020" /><path d="M164 327L171 325L171 330z" stroke="none" stroke-width="0" fill="#4a4020" /><path d="M164 341L171 339L171 344z" stroke="none" stroke-width="0" fill="#4a4020" /><path d="M164 355L171 353L171 358z" stroke="none" stroke-width="0" fill="#4a4020" /><path d="M164 369L171 367L171 372z" stroke="none" stroke-width="0" fill="#4a4020" /><path d="M164 383L171 381L171 386z" stroke="none" stroke-width="0" fill="#4a4020" /><path d="M170 478L196 476L199 500L194 533L168 533L172 505z" stroke="none" stroke-width="0" fill="#b5901f" /><rect x="176" y="490" width="12" height="3" fill="#4a4020" /><rect x="176" y="504" width="12" height="3" fill="#4a4020" /><rect x="176" y="518" width="12" height="3" fill="#4a4020" /><rect x="174.5" y="262" width="2.5" height="130" fill="#f0a080" /><path d="M152 223L147 250L145 290L147 330L151 357" stroke="#60d0a0" stroke-width="5" fill="none" stroke-dasharray="2 1"/><path d="M174 145.5L161.8 172.5L149.5 207L143.4 246L141 280.7L142 315L145.8 352L150 380L160.7 405L173 448.8L169 469.6L163.8 505L161.7 535" stroke="#e01818" stroke-width="1.3" fill="none" /><path d="M180 145.5L187.6 146.7L190 152.8L187.6 161.4L177.8 164L172.9 170L161.8 204.5L156.9 226.6L153 224L149.5 246L145.8 280.7L147 315L150.7 352L158 380L160.7 386L176.3 432L183.6 432L188.8 438L187.8 444.6L182.5 452L177.3 478L174 503L172 535" stroke="#e01818" stroke-width="1.3" fill="none" /><path d="M190 147L191.3 152.8L188.8 161.4L179 165L169 182L164 202L160.5 217" stroke="#1818e0" stroke-width="1.3" fill="none" /><path d="M150.7 241L149.5 280.7L150.7 315L154.4 352L160 380L163.8 388L177.4 430L183.6 430" stroke="#1818e0" stroke-width="1.3" fill="none" /><path d="M185.7 450L181.5 463L177.3 492" stroke="#1818e0" stroke-width="1.3" fill="none" /><path d="M135.5 216L135.5 365" stroke="#e8e800" stroke-width="1.3" fill="none" /><path d="M138.5 216L138.5 365" stroke="#e8e800" stroke-width="1.3" fill="none" /><path d="M137 228L152 210" stroke="#e8e800" stroke-width="1" fill="none" /><path d="M137 258L152 240" stroke="#e8e800" stroke-width="1" fill="none" /><path d="M137 322L152 304" stroke="#e8e800" stroke-width="1" fill="none" /><path d="M137 352L152 334" stroke="#e8e800" stroke-width="1" fill="none" /><path d="M137 292.5L152 292.5" stroke="#e8e800" stroke-width="1" fill="none" /><path d="M137 297.5L152 297.5" stroke="#e8e800" stroke-width="1" fill="none" /><path d="M155.5 497L155.5 533" stroke="#e8e800" stroke-width="1.3" fill="none" /><path d="M158.5 497L158.5 533" stroke="#e8e800" stroke-width="1.3" fill="none" /><path d="M158 510L170 492" stroke="#e8e800" stroke-width="1" fill="none" /><path d="M204 168L190 181L182 210L172 250L168 300L170 350L178 390L190 415L204 430L208 445L204 460L196 480L190 510L188 535" stroke="#20e020" stroke-width="1.3" fill="none" /><path d="M208 169L194 182L186 211L176 251L172 301L174 351L182 391L194 416L208 431L212 446L208 461L200 481L194 511L192 536" stroke="#20e020" stroke-width="1.3" fill="none" /><path d="M201.2 170.6L205.2 171.6" stroke="#20e020" stroke-width="1" fill="none" /><path d="M195.6 175.8L199.6 176.8" stroke="#20e020" stroke-width="1" fill="none" /><path d="M188.4 186.8L192.4 187.8" stroke="#20e020" stroke-width="1" fill="none" /><path d="M185.2 198.4L189.2 199.4" stroke="#20e020" stroke-width="1" fill="none" /><path d="M180 218L184 219" stroke="#20e020" stroke-width="1" fill="none" /><path d="M176 234L180 235" stroke="#20e020" stroke-width="1" fill="none" /><path d="M171.2 260L175.2 261" stroke="#20e020" stroke-width="1" fill="none" /><path d="M169.6 280L173.6 281" stroke="#20e020" stroke-width="1" fill="none" /><path d="M168.4 310L172.4 311" stroke="#20e020" stroke-width="1" fill="none" /><path d="M169.2 330L173.2 331" stroke="#20e020" stroke-width="1" fill="none" /><path d="M171.6 358L175.6 359" stroke="#20e020" stroke-width="1" fill="none" /><path d="M174.8 374L178.8 375" stroke="#20e020" stroke-width="1" fill="none" /><path d="M180.4 395L184.4 396" stroke="#20e020" stroke-width="1" fill="none" /><path d="M185.2 405L189.2 406" stroke="#20e020" stroke-width="1" fill="none" /><path d="M192.8 418L196.8 419" stroke="#20e020" stroke-width="1" fill="none" /><path d="M198.4 424L202.4 425" stroke="#20e020" stroke-width="1" fill="none" /><path d="M204.8 433L208.8 434" stroke="#20e020" stroke-width="1" fill="none" /><path d="M206.4 439L210.4 440" stroke="#20e020" stroke-width="1" fill="none" /><path d="M207.2 448L211.2 449" stroke="#20e020" stroke-width="1" fill="none" /><path d="M205.6 454L209.6 455" stroke="#20e020" stroke-width="1" fill="none" /><path d="M202.4 464L206.4 465" stroke="#20e020" stroke-width="1" fill="none" /><path d="M199.2 472L203.2 473" stroke="#20e020" stroke-width="1" fill="none" /><path d="M194.8 486L198.8 487" stroke="#20e020" stroke-width="1" fill="none" /><path d="M192.4 498L196.4 499" stroke="#20e020" stroke-width="1" fill="none" /><path d="M189.6 515L193.6 516" stroke="#20e020" stroke-width="1" fill="none" /><path d="M188.8 525L192.8 526" stroke="#20e020" stroke-width="1" fill="none" /><path d="M204 168L218 167L218 178L234 178L234 462L271 462" stroke="#20e020" stroke-width="1.3" fill="none" /><path d="M208 170L215 170L215 181L231 181L231 459" stroke="#20e020" stroke-width="1" fill="none" /><path d="M267.5 145L267.5 462" stroke="#20e020" stroke-width="1.3" fill="none" /><path d="M271.5 145L271.5 462" stroke="#20e020" stroke-width="1.3" fill="none" /><path d="M404.5 145L404.5 422" stroke="#20c020" stroke-width="1.6" fill="none" /><path d="M442.5 145L442.5 422" stroke="#20c020" stroke-width="1.6" fill="none" /><path d="M231 420L226 420L226 445L234 445" stroke="#20e020" stroke-width="1" fill="none" /><rect x="180.5" y="145.5" width="51" height="37" fill="none" stroke="#c8e8a0" stroke-width="1" /><path d="M246.5 165L246.5 455" stroke="#c8e0a0" stroke-width="1" fill="none" /><path d="M257.5 165L257.5 455" stroke="#c8e0a0" stroke-width="1" fill="none" /><rect x="240" y="432" width="17" height="22" fill="none" stroke="#c8a0e0" stroke-width="1.3" /><rect x="232" y="146.5" width="26" height="18" fill="none" stroke="#f090d8" stroke-width="2.5" /><path d="M246 168L254 162L258 166L252 172z" stroke="none" stroke-width="0" fill="#e080d8" /><rect x="268" y="146" width="73" height="68" fill="#2c120e" rx="32" /><rect x="352" y="146" width="76" height="68" fill="#2c120e" rx="32" /><rect x="318" y="195" width="1" height="1" fill="#4060a0" /><rect x="300" y="187" width="1" height="1" fill="#4060a0" /><rect x="323" y="169" width="1" height="1" fill="#4060a0" /><rect x="311" y="174" width="1" height="1" fill="#4060a0" /><rect x="298" y="183" width="1" height="1" fill="#4060a0" /><rect x="311" y="191" width="1" height="1" fill="#4060a0" /><rect x="301" y="167" width="1" height="1" fill="#4060a0" /><rect x="317" y="204" width="1" height="1" fill="#4060a0" /><rect x="322" y="167" width="1" height="1" fill="#4060a0" /><rect x="310" y="202" width="1" height="1" fill="#4060a0" /><rect x="308" y="200" width="1" height="1" fill="#4060a0" /><rect x="306" y="197" width="1" height="1" fill="#4060a0" /><rect x="305" y="167" width="1" height="1" fill="#4060a0" /><rect x="307" y="165" width="1" height="1" fill="#4060a0" /><rect x="300" y="171" width="1" height="1" fill="#4060a0" /><rect x="317" y="199" width="1" height="1" fill="#4060a0" /><rect x="299" y="177" width="1" height="1" fill="#4060a0" /><rect x="311" y="183" width="1" height="1" fill="#4060a0" /><rect x="317" y="181" width="1" height="1" fill="#4060a0" /><rect x="302" y="167" width="1" height="1" fill="#4060a0" /><rect x="308" y="185" width="1" height="1" fill="#4060a0" /><rect x="309" y="173" width="1" height="1" fill="#4060a0" /><rect x="310" y="189" width="1" height="1" fill="#4060a0" /><rect x="312" y="198" width="1" height="1" fill="#4060a0" /><rect x="310" y="203" width="1" height="1" fill="#4060a0" /><rect x="319" y="200" width="1" height="1" fill="#4060a0" /><rect x="301" y="204" width="1" height="1" fill="#4060a0" /><rect x="323" y="197" width="1" height="1" fill="#4060a0" /><rect x="306" y="192" width="1" height="1" fill="#4060a0" /><rect x="318" y="180" width="1" height="1" fill="#4060a0" /><path d="M298 203.5L316 203.5" stroke="#c07050" stroke-width="1" fill="none" /><rect x="392" y="192" width="1" height="1" fill="#4060a0" /><rect x="391" y="198" width="1" height="1" fill="#4060a0" /><rect x="392" y="200" width="1" height="1" fill="#4060a0" /><rect x="393" y="165" width="1" height="1" fill="#4060a0" /><rect x="408" y="191" width="1" height="1" fill="#4060a0" /><rect x="401" y="185" width="1" height="1" fill="#4060a0" /><rect x="383" y="189" width="1" height="1" fill="#4060a0" /><rect x="402" y="202" width="1" height="1" fill="#4060a0" /><rect x="403" y="173" width="1" height="1" fill="#4060a0" /><rect x="384" y="205" width="1" height="1" fill="#4060a0" /><rect x="403" y="186" width="1" height="1" fill="#4060a0" /><rect x="397" y="187" width="1" height="1" fill="#4060a0" /><rect x="404" y="187" width="1" height="1" fill="#4060a0" /><rect x="402" y="182" width="1" height="1" fill="#4060a0" /><rect x="406" y="196" width="1" height="1" fill="#4060a0" /><rect x="383" y="202" width="1" height="1" fill="#4060a0" /><rect x="384" y="166" width="1" height="1" fill="#4060a0" /><rect x="394" y="181" width="1" height="1" fill="#4060a0" /><rect x="403" y="194" width="1" height="1" fill="#4060a0" /><rect x="392" y="202" width="1" height="1" fill="#4060a0" /><rect x="402" y="185" width="1" height="1" fill="#4060a0" /><rect x="388" y="188" width="1" height="1" fill="#4060a0" /><rect x="388" y="185" width="1" height="1" fill="#4060a0" /><rect x="407" y="188" width="1" height="1" fill="#4060a0" /><rect x="402" y="181" width="1" height="1" fill="#4060a0" /><rect x="392" y="189" width="1" height="1" fill="#4060a0" /><rect x="386" y="166" width="1" height="1" fill="#4060a0" /><rect x="401" y="173" width="1" height="1" fill="#4060a0" /><rect x="392" y="197" width="1" height="1" fill="#4060a0" /><rect x="390" y="182" width="1" height="1" fill="#4060a0" /><path d="M383 203.5L401 203.5" stroke="#c07050" stroke-width="1" fill="none" /><circle cx="280" cy="193" r="7.4" fill="#d8d800" stroke="#ffff00" stroke-width="1" /><circle cx="280" cy="193" r="4.6" fill="none" stroke="#8a8a00" stroke-width="0.8" /><circle cx="280" cy="193" r="2.2" fill="#909050" stroke="#777" stroke-width="0.6" /><path d="M282.6 193L287.4 193" stroke="#9a9a00" stroke-width="0.5" fill="none" /><path d="M282.2 194.3L286.4 196.7" stroke="#9a9a00" stroke-width="0.5" fill="none" /><path d="M281.3 195.2L283.7 199.4" stroke="#9a9a00" stroke-width="0.5" fill="none" /><path d="M280 195.6L280 200.4" stroke="#9a9a00" stroke-width="0.5" fill="none" /><path d="M278.7 195.2L276.3 199.4" stroke="#9a9a00" stroke-width="0.5" fill="none" /><path d="M277.8 194.3L273.6 196.7" stroke="#9a9a00" stroke-width="0.5" fill="none" /><path d="M277.4 193L272.6 193" stroke="#9a9a00" stroke-width="0.5" fill="none" /><path d="M277.8 191.7L273.6 189.3" stroke="#9a9a00" stroke-width="0.5" fill="none" /><path d="M278.7 190.8L276.3 186.6" stroke="#9a9a00" stroke-width="0.5" fill="none" /><path d="M280 190.4L280 185.6" stroke="#9a9a00" stroke-width="0.5" fill="none" /><path d="M281.3 190.8L283.7 186.6" stroke="#9a9a00" stroke-width="0.5" fill="none" /><path d="M282.2 191.7L286.4 189.3" stroke="#9a9a00" stroke-width="0.5" fill="none" /><circle cx="293" cy="193" r="7.4" fill="#d8d800" stroke="#ffff00" stroke-width="1" /><circle cx="293" cy="193" r="4.6" fill="none" stroke="#8a8a00" stroke-width="0.8" /><circle cx="293" cy="193" r="2.2" fill="#909050" stroke="#777" stroke-width="0.6" /><path d="M295.6 193L300.4 193" stroke="#9a9a00" stroke-width="0.5" fill="none" /><path d="M295.2 194.3L299.4 196.7" stroke="#9a9a00" stroke-width="0.5" fill="none" /><path d="M294.3 195.2L296.7 199.4" stroke="#9a9a00" stroke-width="0.5" fill="none" /><path d="M293 195.6L293 200.4" stroke="#9a9a00" stroke-width="0.5" fill="none" /><path d="M291.7 195.2L289.3 199.4" stroke="#9a9a00" stroke-width="0.5" fill="none" /><path d="M290.8 194.3L286.6 196.7" stroke="#9a9a00" stroke-width="0.5" fill="none" /><path d="M290.4 193L285.6 193" stroke="#9a9a00" stroke-width="0.5" fill="none" /><path d="M290.8 191.7L286.6 189.3" stroke="#9a9a00" stroke-width="0.5" fill="none" /><path d="M291.7 190.8L289.3 186.6" stroke="#9a9a00" stroke-width="0.5" fill="none" /><path d="M293 190.4L293 185.6" stroke="#9a9a00" stroke-width="0.5" fill="none" /><path d="M294.3 190.8L296.7 186.6" stroke="#9a9a00" stroke-width="0.5" fill="none" /><path d="M295.2 191.7L299.4 189.3" stroke="#9a9a00" stroke-width="0.5" fill="none" /><circle cx="280" cy="288" r="7.4" fill="#d8d800" stroke="#ffff00" stroke-width="1" /><circle cx="280" cy="288" r="4.6" fill="none" stroke="#8a8a00" stroke-width="0.8" /><circle cx="280" cy="288" r="2.2" fill="#909050" stroke="#777" stroke-width="0.6" /><path d="M282.6 288L287.4 288" stroke="#9a9a00" stroke-width="0.5" fill="none" /><path d="M282.2 289.3L286.4 291.7" stroke="#9a9a00" stroke-width="0.5" fill="none" /><path d="M281.3 290.2L283.7 294.4" stroke="#9a9a00" stroke-width="0.5" fill="none" /><path d="M280 290.6L280 295.4" stroke="#9a9a00" stroke-width="0.5" fill="none" /><path d="M278.7 290.2L276.3 294.4" stroke="#9a9a00" stroke-width="0.5" fill="none" /><path d="M277.8 289.3L273.6 291.7" stroke="#9a9a00" stroke-width="0.5" fill="none" /><path d="M277.4 288L272.6 288" stroke="#9a9a00" stroke-width="0.5" fill="none" /><path d="M277.8 286.7L273.6 284.3" stroke="#9a9a00" stroke-width="0.5" fill="none" /><path d="M278.7 285.8L276.3 281.6" stroke="#9a9a00" stroke-width="0.5" fill="none" /><path d="M280 285.4L280 280.6" stroke="#9a9a00" stroke-width="0.5" fill="none" /><path d="M281.3 285.8L283.7 281.6" stroke="#9a9a00" stroke-width="0.5" fill="none" /><path d="M282.2 286.7L286.4 284.3" stroke="#9a9a00" stroke-width="0.5" fill="none" /><circle cx="293" cy="288" r="7.4" fill="#d8d800" stroke="#ffff00" stroke-width="1" /><circle cx="293" cy="288" r="4.6" fill="none" stroke="#8a8a00" stroke-width="0.8" /><circle cx="293" cy="288" r="2.2" fill="#909050" stroke="#777" stroke-width="0.6" /><path d="M295.6 288L300.4 288" stroke="#9a9a00" stroke-width="0.5" fill="none" /><path d="M295.2 289.3L299.4 291.7" stroke="#9a9a00" stroke-width="0.5" fill="none" /><path d="M294.3 290.2L296.7 294.4" stroke="#9a9a00" stroke-width="0.5" fill="none" /><path d="M293 290.6L293 295.4" stroke="#9a9a00" stroke-width="0.5" fill="none" /><path d="M291.7 290.2L289.3 294.4" stroke="#9a9a00" stroke-width="0.5" fill="none" /><path d="M290.8 289.3L286.6 291.7" stroke="#9a9a00" stroke-width="0.5" fill="none" /><path d="M290.4 288L285.6 288" stroke="#9a9a00" stroke-width="0.5" fill="none" /><path d="M290.8 286.7L286.6 284.3" stroke="#9a9a00" stroke-width="0.5" fill="none" /><path d="M291.7 285.8L289.3 281.6" stroke="#9a9a00" stroke-width="0.5" fill="none" /><path d="M293 285.4L293 280.6" stroke="#9a9a00" stroke-width="0.5" fill="none" /><path d="M294.3 285.8L296.7 281.6" stroke="#9a9a00" stroke-width="0.5" fill="none" /><path d="M295.2 286.7L299.4 284.3" stroke="#9a9a00" stroke-width="0.5" fill="none" /><circle cx="280" cy="388" r="7.4" fill="#d8d800" stroke="#ffff00" stroke-width="1" /><circle cx="280" cy="388" r="4.6" fill="none" stroke="#8a8a00" stroke-width="0.8" /><circle cx="280" cy="388" r="2.2" fill="#909050" stroke="#777" stroke-width="0.6" /><path d="M282.6 388L287.4 388" stroke="#9a9a00" stroke-width="0.5" fill="none" /><path d="M282.2 389.3L286.4 391.7" stroke="#9a9a00" stroke-width="0.5" fill="none" /><path d="M281.3 390.2L283.7 394.4" stroke="#9a9a00" stroke-width="0.5" fill="none" /><path d="M280 390.6L280 395.4" stroke="#9a9a00" stroke-width="0.5" fill="none" /><path d="M278.7 390.2L276.3 394.4" stroke="#9a9a00" stroke-width="0.5" fill="none" /><path d="M277.8 389.3L273.6 391.7" stroke="#9a9a00" stroke-width="0.5" fill="none" /><path d="M277.4 388L272.6 388" stroke="#9a9a00" stroke-width="0.5" fill="none" /><path d="M277.8 386.7L273.6 384.3" stroke="#9a9a00" stroke-width="0.5" fill="none" /><path d="M278.7 385.8L276.3 381.6" stroke="#9a9a00" stroke-width="0.5" fill="none" /><path d="M280 385.4L280 380.6" stroke="#9a9a00" stroke-width="0.5" fill="none" /><path d="M281.3 385.8L283.7 381.6" stroke="#9a9a00" stroke-width="0.5" fill="none" /><path d="M282.2 386.7L286.4 384.3" stroke="#9a9a00" stroke-width="0.5" fill="none" /><circle cx="293" cy="388" r="7.4" fill="#d8d800" stroke="#ffff00" stroke-width="1" /><circle cx="293" cy="388" r="4.6" fill="none" stroke="#8a8a00" stroke-width="0.8" /><circle cx="293" cy="388" r="2.2" fill="#909050" stroke="#777" stroke-width="0.6" /><path d="M295.6 388L300.4 388" stroke="#9a9a00" stroke-width="0.5" fill="none" /><path d="M295.2 389.3L299.4 391.7" stroke="#9a9a00" stroke-width="0.5" fill="none" /><path d="M294.3 390.2L296.7 394.4" stroke="#9a9a00" stroke-width="0.5" fill="none" /><path d="M293 390.6L293 395.4" stroke="#9a9a00" stroke-width="0.5" fill="none" /><path d="M291.7 390.2L289.3 394.4" stroke="#9a9a00" stroke-width="0.5" fill="none" /><path d="M290.8 389.3L286.6 391.7" stroke="#9a9a00" stroke-width="0.5" fill="none" /><path d="M290.4 388L285.6 388" stroke="#9a9a00" stroke-width="0.5" fill="none" /><path d="M290.8 386.7L286.6 384.3" stroke="#9a9a00" stroke-width="0.5" fill="none" /><path d="M291.7 385.8L289.3 381.6" stroke="#9a9a00" stroke-width="0.5" fill="none" /><path d="M293 385.4L293 380.6" stroke="#9a9a00" stroke-width="0.5" fill="none" /><path d="M294.3 385.8L296.7 381.6" stroke="#9a9a00" stroke-width="0.5" fill="none" /><path d="M295.2 386.7L299.4 384.3" stroke="#9a9a00" stroke-width="0.5" fill="none" /><path d="M324 237c8 0 12 8 11 22c-1 20 20 30 27 50c8 24 -8 46 -30 46c-24 0 -44 -20 -42 -44c1 -14 14 -18 14 -30c-12 -14 2 -44 20 -44z" fill="none" stroke="#0a0a0a" stroke-width="2.300"/><rect x="301.5" y="297" width="23" height="32" fill="#b4e090" /><g transform="translate(317,270) rotate(-28)"><rect x="-11" y="-9" width="22" height="18" fill="none" stroke="#c020a0" stroke-width="2"/><circle r="7" fill="#c87820"/></g><path d="M330 357L345 330L358 310L372 292" stroke="#a8dcf0" stroke-width="3" fill="none" stroke-dasharray="2 1.500"/><path d="M338 340L356 322" stroke="#a8dcf0" stroke-width="5" fill="none" stroke-dasharray="1.500 1"/><circle cx="341" cy="319" r="5" fill="#e060c0" /><path d="M340 318c8 -3 12 4 8 10" fill="none" stroke="#111" stroke-width="1"/><path d="M222 458l52 8c16 3 24 10 24 22l-6 32c-3 8 -10 14 -22 14h-52c-12 -6 -20 -16 -19 -30c2 -20 10 -36 23 -46z" fill="url(#mesh)"/><rect x="535.5" y="203.5" width="231" height="258" fill="none" stroke="#20e020" stroke-width="1.3" /><rect x="539.5" y="207.5" width="223" height="250" fill="none" stroke="#20e020" stroke-width="1.3" /><path d="M440 233L442 233L442 415" stroke="#20c020" stroke-width="1.6" fill="none" /><path d="M500 145L500 213L504 216L507.5 216L507.5 460L478 460L478 500.5L487 500.5L487 535" stroke="#20e020" stroke-width="1.3" fill="none" /><path d="M503.5 216L503.5 457L474 457L474 503.5L483 503.5L483 535" stroke="#20e020" stroke-width="1.3" fill="none" /><path d="M504.5 145L504.5 210L507.5 213" stroke="#20e020" stroke-width="1.3" fill="none" /><path d="M501.5 145L501.5 217" stroke="#20e020" stroke-width="1.3" fill="none" /><path d="M859 203L796 203L796 461L859 461" stroke="#20e020" stroke-width="1.3" fill="none" /><path d="M859 207L800 207L800 457L859 457" stroke="#20e020" stroke-width="1.3" fill="none" /><path d="M516.5 205L516.5 470" stroke="#c8e0a0" stroke-width="1" fill="none" /><path d="M526.5 205L526.5 470" stroke="#c8e0a0" stroke-width="1" fill="none" /><path d="M508 337.5L516 337.5" stroke="#48a8f0" stroke-width="1" fill="none" /><rect x="775.5" y="195" width="11" height="275" fill="none" stroke="#c8e8a0" stroke-width="1.3" /><path d="M527 143L527 188L545 188" stroke="#c020a0" stroke-width="1" fill="none" /><path d="M859 188L640 188" stroke="#c020a0" stroke-width="1" fill="none" /><path d="M497 500L497 491L487 491L487 469.5L859 469.5" stroke="#e01818" stroke-width="1.3" fill="none" /><path d="M494 500L494 493L485 493L485 467.5L859 467.5" stroke="#1818e0" stroke-width="1.3" fill="none" /><path d="M656 467.5L745 467.5" stroke="#8a8a8a" stroke-width="1.6" fill="none" /><path d="M504 535L504 479L859 479" stroke="#c020a0" stroke-width="1" fill="none" /><path d="M475 205L527 205L527 195L859 195" stroke="#e01818" stroke-width="1.3" fill="none" /><path d="M528 197.5L542 197.5" stroke="#1818e0" stroke-width="1.6" fill="none" /><path d="M627 197.5L656 197.5" stroke="#1818e0" stroke-width="1.6" fill="none" /><path d="M505 206.5L527 206.5" stroke="#1818e0" stroke-width="1.6" fill="none" /><path d="M746 197.5L859 197.5" stroke="#1818e0" stroke-width="1.6" fill="none" /><path d="M656 197.5L745 197.5" stroke="#8a8a8a" stroke-width="1.6" fill="none" /><rect x="545" y="185.5" width="82" height="10" fill="none" stroke="#c01860" stroke-width="1.3" rx="2" /><rect x="548" y="188" width="74" height="5" fill="none" stroke="#c8e8a0" stroke-width="1.6" /><path d="M606 198L620 196L620 200" stroke="#c8e8a0" stroke-width="1.6" fill="none" /><rect x="497" y="500" width="6" height="35" fill="#e8e8e8" /><path d="M502.5 497L502.5 535" stroke="#e060c8" stroke-width="1.3" fill="none" /><path d="M562 147L577 172" stroke="#c8a0e8" stroke-width="2.5" fill="none" /><path d="M571 145L576 152" stroke="#c8a0e8" stroke-width="2.5" fill="none" /><ellipse cx="492" cy="166" rx="28" ry="26" fill="#6e6e6e"/><circle cx="484" cy="150" r="7" fill="#58e0d0" stroke="#e8e800" stroke-width="1.3" /><circle cx="494" cy="157" r="8" fill="#58e0d0" stroke="#e8e800" stroke-width="1.3" /><path d="M474 178a30 30 0 0 0 28 27" fill="none" stroke="#e01818" stroke-width="1.600"/><path d="M478 184L480 200" stroke="#e01818" stroke-width="1" fill="none" /><path d="M482 187L484 201" stroke="#e01818" stroke-width="1" fill="none" /><path d="M486 190L488 202" stroke="#e01818" stroke-width="1" fill="none" /><path d="M490 193L492 203" stroke="#e01818" stroke-width="1" fill="none" /><path d="M494 196L496 204" stroke="#e01818" stroke-width="1" fill="none" /><path d="M498 199L500 205" stroke="#e01818" stroke-width="1" fill="none" /><circle cx="520" cy="237" r="11.5" fill="#6e6e6e" /><circle cx="520" cy="272" r="11.5" fill="#6e6e6e" /><circle cx="520" cy="306" r="11.5" fill="#6e6e6e" /><rect x="562" y="220" width="244" height="185" fill="url(#hatch2)" stroke="#5590e0" stroke-width="2.5" rx="6" /><rect x="634" y="221" width="42" height="44" fill="#787878" rx="18" /><rect x="634" y="352" width="42" height="42" fill="#787878" rx="18" /><path d="M631 243v-8a24 20 0 0 1 48 0v8" fill="none" stroke="#b07818" stroke-width="1"/><path d="M631 372v8a24 20 0 0 0 48 0v-8" fill="none" stroke="#b07818" stroke-width="1"/><rect x="694" y="221" width="42" height="44" fill="#787878" rx="18" /><rect x="694" y="352" width="42" height="42" fill="#787878" rx="18" /><path d="M691 243v-8a24 20 0 0 1 48 0v8" fill="none" stroke="#b07818" stroke-width="1"/><path d="M691 372v8a24 20 0 0 0 48 0v-8" fill="none" stroke="#b07818" stroke-width="1"/><rect x="565" y="286" width="42" height="42" fill="#787878" rx="16" /><rect x="760" y="286" width="38" height="42" fill="#787878" rx="16" /><path d="M588 284h-8a22 24 0 0 0 0 46h8" fill="none" stroke="#b07818" stroke-width="1"/><path d="M778 284h8a22 24 0 0 1 0 46h-8" fill="none" stroke="#b07818" stroke-width="1"/><rect x="603" y="254" width="160" height="108" fill="url(#ghatch)" rx="34" /><rect x="638" y="256" width="42" height="30" fill="#34108c" /><circle cx="659" cy="271" r="12.6" fill="#c01ca0" /><circle cx="659" cy="271" r="6" fill="#e89050" /><rect x="640" y="262" width="4" height="18" fill="#e060d0" /><rect x="673" y="262" width="5" height="18" fill="#e060d0" /><rect x="686" y="256" width="42" height="30" fill="#34108c" /><circle cx="707" cy="271" r="12.6" fill="#c01ca0" /><circle cx="707" cy="271" r="6" fill="#e89050" /><rect x="688" y="262" width="4" height="18" fill="#e060d0" /><rect x="721" y="262" width="5" height="18" fill="#e060d0" /><rect x="638" y="327" width="42" height="30" fill="#34108c" /><circle cx="659" cy="342" r="12.6" fill="#c01ca0" /><circle cx="659" cy="342" r="6" fill="#e89050" /><rect x="640" y="333" width="4" height="18" fill="#e060d0" /><rect x="673" y="333" width="5" height="18" fill="#e060d0" /><rect x="686" y="327" width="42" height="30" fill="#34108c" /><circle cx="707" cy="342" r="12.6" fill="#c01ca0" /><circle cx="707" cy="342" r="6" fill="#e89050" /><rect x="688" y="333" width="4" height="18" fill="#e060d0" /><rect x="721" y="333" width="5" height="18" fill="#e060d0" /><rect x="599.5" y="285" width="31" height="41" fill="#34108c" /><circle cx="615" cy="305.5" r="13" fill="#c01ca0" /><circle cx="615" cy="305.5" r="6.2" fill="#e89050" /><rect x="605.5" y="287" width="19" height="4" fill="#e060d0" /><rect x="605.5" y="319" width="19" height="5" fill="#e060d0" /><rect x="736" y="286" width="28" height="41" fill="#34108c" /><circle cx="750" cy="306.5" r="11.8" fill="#c01ca0" /><circle cx="750" cy="306.5" r="5.6" fill="#e89050" /><rect x="742" y="288" width="16" height="4" fill="#e060d0" /><rect x="742" y="320" width="16" height="5" fill="#e060d0" /><path d="M694.3 318.1L699 323.4" stroke="#90e8b8" stroke-width="2.6" fill="none" /><path d="M706 326.4L698.5 326" stroke="#90e8b8" stroke-width="2.6" fill="none" /><path d="M726.3 313.9L732.8 309.2" stroke="#90e8b8" stroke-width="2.6" fill="none" /><path d="M678.9 295.3L679.6 296.2" stroke="#90e8b8" stroke-width="2.6" fill="none" /><path d="M659.9 326.2L664.2 322.1" stroke="#90e8b8" stroke-width="2.6" fill="none" /><path d="M711.7 290.4L713.6 285.9" stroke="#90e8b8" stroke-width="2.6" fill="none" /><path d="M652.9 293.9L660.7 298.4" stroke="#90e8b8" stroke-width="2.6" fill="none" /><path d="M685.9 315.2L681.2 320.5" stroke="#90e8b8" stroke-width="2.6" fill="none" /><path d="M721.4 297.7L719.2 293.7" stroke="#90e8b8" stroke-width="2.6" fill="none" /><path d="M662.1 311.7L654.2 313.9" stroke="#90e8b8" stroke-width="2.6" fill="none" /><path d="M665.8 298.3L670.9 298" stroke="#90e8b8" stroke-width="2.6" fill="none" /><path d="M663.6 306.1L666.9 300.8" stroke="#90e8b8" stroke-width="2.6" fill="none" /><path d="M707 322.9L699.3 326.3" stroke="#90e8b8" stroke-width="2.6" fill="none" /><path d="M668.6 310.6L660.8 305.2" stroke="#90e8b8" stroke-width="2.6" fill="none" /><path d="M651.7 318.8L658.5 324.1" stroke="#90e8b8" stroke-width="2.6" fill="none" /><path d="M666.4 300.3L666.8 303.6" stroke="#90e8b8" stroke-width="2.6" fill="none" /><path d="M642.8 318.4L647.6 322.7" stroke="#90e8b8" stroke-width="2.6" fill="none" /><path d="M641.1 299.7L642.9 304.7" stroke="#90e8b8" stroke-width="2.6" fill="none" /><path d="M666 326.5L666.7 324.3" stroke="#90e8b8" stroke-width="2.6" fill="none" /><path d="M663.7 292.2L656.9 288" stroke="#90e8b8" stroke-width="2.6" fill="none" /><path d="M730.7 308.5L729.2 305.4" stroke="#90e8b8" stroke-width="2.6" fill="none" /><path d="M691.4 322L690.7 321.1" stroke="#90e8b8" stroke-width="2.6" fill="none" /><path d="M635.3 306.7L640.7 302.3" stroke="#90e8b8" stroke-width="2.6" fill="none" /><path d="M695 320.2L688.7 319.5" stroke="#90e8b8" stroke-width="2.6" fill="none" /><path d="M661.5 304.8L669.5 309.1" stroke="#90e8b8" stroke-width="2.6" fill="none" /><path d="M729.6 304.9L729.4 307.6" stroke="#90e8b8" stroke-width="2.6" fill="none" /><path d="M679.9 297.4L678.4 293.1" stroke="#90e8b8" stroke-width="2.6" fill="none" /><path d="M728 312.8L728 310.9" stroke="#90e8b8" stroke-width="2.6" fill="none" /><path d="M640.9 296.5L645.4 300.9" stroke="#90e8b8" stroke-width="2.6" fill="none" /><path d="M668.1 320.2L672.5 322.5" stroke="#90e8b8" stroke-width="2.6" fill="none" /><path d="M698.4 318.9L696.2 321.4" stroke="#90e8b8" stroke-width="2.6" fill="none" /><path d="M660.1 306.3L664.4 308.6" stroke="#90e8b8" stroke-width="2.6" fill="none" /><path d="M697 310.7L689.2 311.3" stroke="#90e8b8" stroke-width="2.6" fill="none" /><path d="M657.1 314.9L656.5 318.7" stroke="#90e8b8" stroke-width="2.6" fill="none" /><path d="M696.7 320.7L694.3 322.4" stroke="#90e8b8" stroke-width="2.6" fill="none" /><path d="M705.8 322.1L703.4 326.2" stroke="#90e8b8" stroke-width="2.6" fill="none" /><path d="M719 315.7L726.6 321.1" stroke="#90e8b8" stroke-width="2.6" fill="none" /><path d="M683.8 308.3L678.5 312.4" stroke="#90e8b8" stroke-width="2.6" fill="none" /><path d="M725.7 306L728.8 308.6" stroke="#90e8b8" stroke-width="2.6" fill="none" /><path d="M705 291.9L709.5 292.9" stroke="#90e8b8" stroke-width="2.6" fill="none" /><path d="M698.6 303.4L700.5 306.7" stroke="#90e8b8" stroke-width="2.6" fill="none" /><path d="M695.7 317.1L688.1 313.1" stroke="#90e8b8" stroke-width="2.6" fill="none" /><path d="M676.1 313.9L671.6 316.1" stroke="#90e8b8" stroke-width="2.6" fill="none" /><path d="M695.1 285.9L694.6 282.6" stroke="#90e8b8" stroke-width="2.6" fill="none" /><path d="M663.7 292.4L658.8 286.8" stroke="#90e8b8" stroke-width="2.6" fill="none" /><path d="M678.5 301.5L680.3 302.6" stroke="#90e8b8" stroke-width="2.6" fill="none" /><path d="M659.9 302.9L653.7 306.8" stroke="#90e8b8" stroke-width="2.6" fill="none" /><path d="M693.4 288.4L694.1 286.4" stroke="#90e8b8" stroke-width="2.6" fill="none" /><path d="M690.1 328.1L695.2 327.1" stroke="#90e8b8" stroke-width="2.6" fill="none" /><path d="M713.3 313.5L711.2 309.3" stroke="#90e8b8" stroke-width="2.6" fill="none" /><path d="M691.6 309.9L698.9 315.6" stroke="#90e8b8" stroke-width="2.6" fill="none" /><path d="M692.9 300.2L699.2 294.2" stroke="#90e8b8" stroke-width="2.6" fill="none" /><path d="M642.8 310L644.6 305.7" stroke="#90e8b8" stroke-width="2.6" fill="none" /><path d="M694.9 325L693 324.2" stroke="#90e8b8" stroke-width="2.6" fill="none" /><path d="M654.6 297.4L662.2 296" stroke="#90e8b8" stroke-width="2.6" fill="none" /><path d="M691.6 296L699.3 295.9" stroke="#90e8b8" stroke-width="2.6" fill="none" /><path d="M673.5 298.7L681.3 298.6" stroke="#90e8b8" stroke-width="2.6" fill="none" /><path d="M660.6 305.9L654.6 307.4" stroke="#90e8b8" stroke-width="2.6" fill="none" /><path d="M676.3 297.5L680.9 301.4" stroke="#90e8b8" stroke-width="2.6" fill="none" /><path d="M633.3 308.5L629.7 313.7" stroke="#90e8b8" stroke-width="2.6" fill="none" /><path d="M710.2 295.3L706.5 291.2" stroke="#90e8b8" stroke-width="2.6" fill="none" /><path d="M692.8 305.8L695.1 307.1" stroke="#90e8b8" stroke-width="2.6" fill="none" /><path d="M706.3 289.4L710.5 287" stroke="#90e8b8" stroke-width="2.6" fill="none" /><path d="M685.3 299.5L682.1 299.8" stroke="#90e8b8" stroke-width="2.6" fill="none" /><path d="M678.4 300.6L682.4 301.7" stroke="#90e8b8" stroke-width="2.6" fill="none" /><path d="M677.6 326.2L683.8 326.7" stroke="#90e8b8" stroke-width="2.6" fill="none" /><path d="M674.8 310.5L678.1 312.1" stroke="#90e8b8" stroke-width="2.6" fill="none" /><path d="M680.2 325.9L678.4 324.6" stroke="#90e8b8" stroke-width="2.6" fill="none" /><path d="M717.2 293L713.9 297" stroke="#90e8b8" stroke-width="2.6" fill="none" /><path d="M701.5 303.9L698 307.3" stroke="#90e8b8" stroke-width="2.6" fill="none" /><path d="M679.8 309.3L679.8 307.2" stroke="#90e8b8" stroke-width="2.6" fill="none" /><path d="M647.4 310.9L652.3 305.8" stroke="#90e8b8" stroke-width="2.6" fill="none" /><path d="M655 321.7L659.7 323.7" stroke="#90e8b8" stroke-width="2.6" fill="none" /><path d="M716.2 294.1L718.5 299.5" stroke="#90e8b8" stroke-width="2.6" fill="none" /><path d="M703.2 290.2L699.9 295.2" stroke="#90e8b8" stroke-width="2.6" fill="none" /><path d="M647 312.1L645.6 308" stroke="#90e8b8" stroke-width="2.6" fill="none" /><path d="M694.2 286L688 284.6" stroke="#90e8b8" stroke-width="2.6" fill="none" /><path d="M689.5 318.1L695.6 313.8" stroke="#90e8b8" stroke-width="2.6" fill="none" /><path d="M675.2 298.5L676.8 298.3" stroke="#90e8b8" stroke-width="2.6" fill="none" /><path d="M725.9 301.2L718.7 303.6" stroke="#90e8b8" stroke-width="2.6" fill="none" /><path d="M647.1 313L647.2 318" stroke="#90e8b8" stroke-width="2.6" fill="none" /><path d="M687.5 312.6L683.7 313.2" stroke="#90e8b8" stroke-width="2.6" fill="none" /><path d="M657.4 318.5L657.7 314.1" stroke="#90e8b8" stroke-width="2.6" fill="none" /><path d="M655.4 301.1L659.2 297.2" stroke="#90e8b8" stroke-width="2.6" fill="none" /><path d="M703.3 314.1L696.7 316.1" stroke="#90e8b8" stroke-width="2.6" fill="none" /><path d="M691.4 295L697.4 294.7" stroke="#90e8b8" stroke-width="2.6" fill="none" /><path d="M664.3 320.6L656.8 323.3" stroke="#90e8b8" stroke-width="2.6" fill="none" /><path d="M727.2 315.3L722.8 310.7" stroke="#90e8b8" stroke-width="2.6" fill="none" /><path d="M729.3 314.6L734.4 310.3" stroke="#90e8b8" stroke-width="2.6" fill="none" /><path d="M694.5 300.3L690.2 298.3" stroke="#90e8b8" stroke-width="2.6" fill="none" /><path d="M693.4 300L691.5 295.7" stroke="#90e8b8" stroke-width="2.6" fill="none" /><path d="M715.1 313.8L720 313" stroke="#90e8b8" stroke-width="2.6" fill="none" /><path d="M717.2 307.8L718.6 308.7" stroke="#90e8b8" stroke-width="2.6" fill="none" /><path d="M706 302.2L699.6 296.6" stroke="#90e8b8" stroke-width="2.6" fill="none" /><path d="M720.9 306.1L725.1 300.1" stroke="#90e8b8" stroke-width="2.6" fill="none" /><path d="M679 324.9L680.9 324.1" stroke="#90e8b8" stroke-width="2.6" fill="none" /><path d="M678.6 288.6L673 284.5" stroke="#90e8b8" stroke-width="2.6" fill="none" /><path d="M669.5 301.7L675.5 297.6" stroke="#90e8b8" stroke-width="2.6" fill="none" /><path d="M657.4 296.8L652 294.2" stroke="#90e8b8" stroke-width="2.6" fill="none" /><path d="M655.5 306.2L648 311.3" stroke="#90e8b8" stroke-width="2.6" fill="none" /><path d="M668.9 327.1L671.9 329.2" stroke="#90e8b8" stroke-width="2.6" fill="none" /><path d="M679.2 327.5L673.1 329.5" stroke="#90e8b8" stroke-width="2.6" fill="none" /><path d="M661.1 315L664.8 311" stroke="#90e8b8" stroke-width="2.6" fill="none" /><path d="M668.4 298.3L667.9 295.7" stroke="#90e8b8" stroke-width="2.6" fill="none" /><path d="M705.2 317L699.8 313.9" stroke="#90e8b8" stroke-width="2.6" fill="none" /><path d="M699.2 327.3L701.6 326.4" stroke="#90e8b8" stroke-width="2.6" fill="none" /><path d="M673 286.1L673.8 291.9" stroke="#90e8b8" stroke-width="2.6" fill="none" /><path d="M683.9 300.1L677.4 295" stroke="#90e8b8" stroke-width="2.6" fill="none" /><path d="M721.9 306.6L728.9 301.2" stroke="#90e8b8" stroke-width="2.6" fill="none" /><path d="M671.7 286.8L667.8 285.7" stroke="#90e8b8" stroke-width="2.6" fill="none" /><ellipse cx="684" cy="307" rx="26" ry="11" fill="#90e8b8" fill-opacity=".55"/><circle cx="642" cy="290" r="5" fill="#c01ca0" /><circle cx="642" cy="290" r="2.5" fill="#b89020" /><circle cx="690" cy="288" r="5" fill="#c01ca0" /><circle cx="690" cy="288" r="2.5" fill="#b89020" /><circle cx="731" cy="291" r="5" fill="#c01ca0" /><circle cx="731" cy="291" r="2.5" fill="#b89020" /><circle cx="634" cy="321" r="5" fill="#c01ca0" /><circle cx="634" cy="321" r="2.5" fill="#b89020" /><circle cx="674" cy="325" r="5" fill="#c01ca0" /><circle cx="674" cy="325" r="2.5" fill="#b89020" /><circle cx="722" cy="321" r="5" fill="#c01ca0" /><circle cx="722" cy="321" r="2.5" fill="#b89020" /><circle cx="632" cy="289" r="3" fill="#20b030" /><circle cx="674" cy="289" r="3" fill="#20b030" /><circle cx="716" cy="290" r="3" fill="#20b030" /><circle cx="724" cy="292" r="3" fill="#20b030" /><circle cx="642" cy="323" r="3" fill="#20b030" /><circle cx="648" cy="324" r="3" fill="#20b030" /><circle cx="697" cy="322" r="3" fill="#20b030" /><circle cx="731" cy="317" r="3" fill="#20b030" /><path d="M634 307.5L732 307.5" stroke="#5090e8" stroke-width="2.5" fill="none" /><path d="M600 243.5L760 243.5" stroke="#20c020" stroke-width="2" fill="none" /><path d="M600 371.5L760 371.5" stroke="#20c020" stroke-width="2" fill="none" /><rect x="811" y="216" width="35" height="33" fill="#5590e0" rx="11" /><rect x="824" y="237" width="1" height="1" fill="#30508c" /><rect x="830" y="236" width="1" height="1" fill="#30508c" /><rect x="828" y="229" width="1" height="1" fill="#30508c" /><rect x="830" y="229" width="1" height="1" fill="#30508c" /><rect x="823" y="231" width="1" height="1" fill="#30508c" /><rect x="834" y="227" width="1" height="1" fill="#30508c" /><rect x="823" y="234" width="1" height="1" fill="#30508c" /><rect x="824" y="235" width="1" height="1" fill="#30508c" /><rect x="811" y="256" width="35" height="33" fill="#5590e0" rx="11" /><rect x="823" y="277" width="1" height="1" fill="#30508c" /><rect x="825" y="275" width="1" height="1" fill="#30508c" /><rect x="822" y="273" width="1" height="1" fill="#30508c" /><rect x="830" y="271" width="1" height="1" fill="#30508c" /><rect x="829" y="272" width="1" height="1" fill="#30508c" /><rect x="831" y="278" width="1" height="1" fill="#30508c" /><rect x="828" y="274" width="1" height="1" fill="#30508c" /><rect x="832" y="268" width="1" height="1" fill="#30508c" /><rect x="811" y="296" width="35" height="33" fill="#5590e0" rx="11" /><rect x="833" y="306" width="1" height="1" fill="#30508c" /><rect x="834" y="310" width="1" height="1" fill="#30508c" /><rect x="833" y="313" width="1" height="1" fill="#30508c" /><rect x="825" y="314" width="1" height="1" fill="#30508c" /><rect x="823" y="308" width="1" height="1" fill="#30508c" /><rect x="826" y="313" width="1" height="1" fill="#30508c" /><rect x="823" y="318" width="1" height="1" fill="#30508c" /><rect x="834" y="310" width="1" height="1" fill="#30508c" /><path d="M851.5 196L851.5 339" stroke="#9a6c08" stroke-width="2.5" fill="none" /><path d="M855.5 194L855.5 339" stroke="#20c020" stroke-width="1" fill="none" /><path d="M849 339.5L854 339.5" stroke="#b07818" stroke-width="1.3" fill="none" /><rect x="535.5" y="203.5" width="231" height="258" fill="none" stroke="#20e020" stroke-width="1.3" /><rect x="539.5" y="207.5" width="223" height="250" fill="none" stroke="#20e020" stroke-width="1.3" /><path d="M859 203.5L795.5 203.5L795.5 461L859 461" stroke="#20e020" stroke-width="1.3" fill="none" /><path d="M859 207L798.5 207L798.5 457L859 457" stroke="#20e020" stroke-width="1.3" fill="none" /><rect x="775.5" y="192" width="11" height="278" fill="none" stroke="#c8e8a0" stroke-width="1.3" /><circle cx="589" cy="416" r="7.3" fill="#d8d800" stroke="#ffff00" stroke-width="1" /><circle cx="589" cy="416" r="4.5" fill="none" stroke="#8a8a00" stroke-width="0.8" /><circle cx="589" cy="416" r="2.2" fill="#909050" stroke="#777" stroke-width="0.6" /><path d="M591.6 416L596.3 416" stroke="#9a9a00" stroke-width="0.5" fill="none" /><path d="M591.2 417.3L595.3 419.6" stroke="#9a9a00" stroke-width="0.5" fill="none" /><path d="M590.3 418.2L592.6 422.3" stroke="#9a9a00" stroke-width="0.5" fill="none" /><path d="M589 418.6L589 423.3" stroke="#9a9a00" stroke-width="0.5" fill="none" /><path d="M587.7 418.2L585.4 422.3" stroke="#9a9a00" stroke-width="0.5" fill="none" /><path d="M586.8 417.3L582.7 419.6" stroke="#9a9a00" stroke-width="0.5" fill="none" /><path d="M586.4 416L581.7 416" stroke="#9a9a00" stroke-width="0.5" fill="none" /><path d="M586.8 414.7L582.7 412.4" stroke="#9a9a00" stroke-width="0.5" fill="none" /><path d="M587.7 413.8L585.4 409.7" stroke="#9a9a00" stroke-width="0.5" fill="none" /><path d="M589 413.4L589 408.7" stroke="#9a9a00" stroke-width="0.5" fill="none" /><path d="M590.3 413.8L592.6 409.7" stroke="#9a9a00" stroke-width="0.5" fill="none" /><path d="M591.2 414.7L595.3 412.4" stroke="#9a9a00" stroke-width="0.5" fill="none" /><circle cx="589" cy="430" r="7.3" fill="#d8d800" stroke="#ffff00" stroke-width="1" /><circle cx="589" cy="430" r="4.5" fill="none" stroke="#8a8a00" stroke-width="0.8" /><circle cx="589" cy="430" r="2.2" fill="#909050" stroke="#777" stroke-width="0.6" /><path d="M591.6 430L596.3 430" stroke="#9a9a00" stroke-width="0.5" fill="none" /><path d="M591.2 431.3L595.3 433.6" stroke="#9a9a00" stroke-width="0.5" fill="none" /><path d="M590.3 432.2L592.6 436.3" stroke="#9a9a00" stroke-width="0.5" fill="none" /><path d="M589 432.6L589 437.3" stroke="#9a9a00" stroke-width="0.5" fill="none" /><path d="M587.7 432.2L585.4 436.3" stroke="#9a9a00" stroke-width="0.5" fill="none" /><path d="M586.8 431.3L582.7 433.6" stroke="#9a9a00" stroke-width="0.5" fill="none" /><path d="M586.4 430L581.7 430" stroke="#9a9a00" stroke-width="0.5" fill="none" /><path d="M586.8 428.7L582.7 426.4" stroke="#9a9a00" stroke-width="0.5" fill="none" /><path d="M587.7 427.8L585.4 423.7" stroke="#9a9a00" stroke-width="0.5" fill="none" /><path d="M589 427.4L589 422.7" stroke="#9a9a00" stroke-width="0.5" fill="none" /><path d="M590.3 427.8L592.6 423.7" stroke="#9a9a00" stroke-width="0.5" fill="none" /><path d="M591.2 428.7L595.3 426.4" stroke="#9a9a00" stroke-width="0.5" fill="none" /><circle cx="726" cy="416" r="7.3" fill="#d8d800" stroke="#ffff00" stroke-width="1" /><circle cx="726" cy="416" r="4.5" fill="none" stroke="#8a8a00" stroke-width="0.8" /><circle cx="726" cy="416" r="2.2" fill="#909050" stroke="#777" stroke-width="0.6" /><path d="M728.6 416L733.3 416" stroke="#9a9a00" stroke-width="0.5" fill="none" /><path d="M728.2 417.3L732.3 419.6" stroke="#9a9a00" stroke-width="0.5" fill="none" /><path d="M727.3 418.2L729.6 422.3" stroke="#9a9a00" stroke-width="0.5" fill="none" /><path d="M726 418.6L726 423.3" stroke="#9a9a00" stroke-width="0.5" fill="none" /><path d="M724.7 418.2L722.4 422.3" stroke="#9a9a00" stroke-width="0.5" fill="none" /><path d="M723.8 417.3L719.7 419.6" stroke="#9a9a00" stroke-width="0.5" fill="none" /><path d="M723.4 416L718.7 416" stroke="#9a9a00" stroke-width="0.5" fill="none" /><path d="M723.8 414.7L719.7 412.4" stroke="#9a9a00" stroke-width="0.5" fill="none" /><path d="M724.7 413.8L722.4 409.7" stroke="#9a9a00" stroke-width="0.5" fill="none" /><path d="M726 413.4L726 408.7" stroke="#9a9a00" stroke-width="0.5" fill="none" /><path d="M727.3 413.8L729.6 409.7" stroke="#9a9a00" stroke-width="0.5" fill="none" /><path d="M728.2 414.7L732.3 412.4" stroke="#9a9a00" stroke-width="0.5" fill="none" /><circle cx="726" cy="430" r="7.3" fill="#d8d800" stroke="#ffff00" stroke-width="1" /><circle cx="726" cy="430" r="4.5" fill="none" stroke="#8a8a00" stroke-width="0.8" /><circle cx="726" cy="430" r="2.2" fill="#909050" stroke="#777" stroke-width="0.6" /><path d="M728.6 430L733.3 430" stroke="#9a9a00" stroke-width="0.5" fill="none" /><path d="M728.2 431.3L732.3 433.6" stroke="#9a9a00" stroke-width="0.5" fill="none" /><path d="M727.3 432.2L729.6 436.3" stroke="#9a9a00" stroke-width="0.5" fill="none" /><path d="M726 432.6L726 437.3" stroke="#9a9a00" stroke-width="0.5" fill="none" /><path d="M724.7 432.2L722.4 436.3" stroke="#9a9a00" stroke-width="0.5" fill="none" /><path d="M723.8 431.3L719.7 433.6" stroke="#9a9a00" stroke-width="0.5" fill="none" /><path d="M723.4 430L718.7 430" stroke="#9a9a00" stroke-width="0.5" fill="none" /><path d="M723.8 428.7L719.7 426.4" stroke="#9a9a00" stroke-width="0.5" fill="none" /><path d="M724.7 427.8L722.4 423.7" stroke="#9a9a00" stroke-width="0.5" fill="none" /><path d="M726 427.4L726 422.7" stroke="#9a9a00" stroke-width="0.5" fill="none" /><path d="M727.3 427.8L729.6 423.7" stroke="#9a9a00" stroke-width="0.5" fill="none" /><path d="M728.2 428.7L732.3 426.4" stroke="#9a9a00" stroke-width="0.5" fill="none" /><path d="M217 510.5L462 510.5" stroke="#20a820" stroke-width="2" fill="none" /><path d="M100 279.5L512 279.5" stroke="#48a8f0" stroke-width="1.2" fill="none" /><path d="M48 297.5L859 297.5" stroke="#48a8f0" stroke-width="1.2" fill="none" /><path d="M165 300.5L859 300.5" stroke="#48a8f0" stroke-width="1.6" fill="none" /><path d="M225 182L236 207" stroke="#48a8f0" stroke-width="0.7" fill="none" /><path d="M236 207L272 303" stroke="#48a8f0" stroke-width="0.8" fill="none" /><path d="M258 291L398 503.5" stroke="#48a8f0" stroke-width="1" fill="none" /><path d="M262 288L419 533" stroke="#48a8f0" stroke-width="1" fill="none" /><path d="M398 506L859 203" stroke="#48a8f0" stroke-width="1" fill="none" /><path d="M648 500L859 352" stroke="#48a8f0" stroke-width="1" fill="none" /><path d="M460 277.5L610 277.5" stroke="#48a8f0" stroke-width="1" fill="none" /><path d="M428 385.5L859 385.5" stroke="#48a8f0" stroke-width="1" fill="none" /><path d="M760 329.5L859 329.5" stroke="#48a8f0" stroke-width="1" fill="none" /><path d="M633.5 185L633.5 535" stroke="#48a8f0" stroke-width="1.2" fill="none" /><rect x="629.5" y="179" width="8" height="8" fill="none" stroke="#48a8f0" stroke-width="1" /><g transform="translate(100,279) rotate(0) scale(0.62)" fill="none" stroke="#6f8fe8" stroke-width="1"><rect x="0" y="-4" width="34" height="8"/><path d="M4 -4v8M8 -4v8M12 -4v8M16 -4v8M20 -4v8M24 -4v8M28 -4v8"/><path d="M34 -3h8l8 -6v18l-8 -6h-8M-4 -8h4v16h-4M26 -4l3 -5l3 5"/></g><g transform="translate(50,300) rotate(0) scale(0.92)" fill="none" stroke="#6f8fe8" stroke-width="1"><rect x="0" y="-4" width="34" height="8"/><path d="M4 -4v8M8 -4v8M12 -4v8M16 -4v8M20 -4v8M24 -4v8M28 -4v8"/><path d="M34 -3h8l8 -6v18l-8 -6h-8M-4 -8h4v16h-4M26 -4l3 -5l3 5"/></g><g transform="translate(236,251) rotate(60) scale(0.8)" fill="none" stroke="#6f8fe8" stroke-width="1"><rect x="0" y="-4" width="34" height="8"/><path d="M4 -4v8M8 -4v8M12 -4v8M16 -4v8M20 -4v8M24 -4v8M28 -4v8"/><path d="M34 -3h8l8 -6v18l-8 -6h-8M-4 -8h4v16h-4M26 -4l3 -5l3 5"/></g><g transform="translate(384,385) rotate(0) scale(0.86)" fill="none" stroke="#6f8fe8" stroke-width="1"><rect x="0" y="-4" width="34" height="8"/><path d="M4 -4v8M8 -4v8M12 -4v8M16 -4v8M20 -4v8M24 -4v8M28 -4v8"/><path d="M34 -3h8l8 -6v18l-8 -6h-8M-4 -8h4v16h-4M26 -4l3 -5l3 5"/></g><g transform="translate(366,470) rotate(-124) scale(1.0)" fill="none" stroke="#6f8fe8" stroke-width="1"><rect x="0" y="-4" width="34" height="8"/><path d="M4 -4v8M8 -4v8M12 -4v8M16 -4v8M20 -4v8M24 -4v8M28 -4v8"/><path d="M34 -3h8l8 -6v18l-8 -6h-8M-4 -8h4v16h-4M26 -4l3 -5l3 5"/></g><g transform="translate(371,525) rotate(-36) scale(1.0)" fill="none" stroke="#6f8fe8" stroke-width="1"><rect x="0" y="-4" width="34" height="8"/><path d="M4 -4v8M8 -4v8M12 -4v8M16 -4v8M20 -4v8M24 -4v8M28 -4v8"/><path d="M34 -3h8l8 -6v18l-8 -6h-8M-4 -8h4v16h-4M26 -4l3 -5l3 5"/></g><g transform="translate(633,529) rotate(-90) scale(0.85)" fill="none" stroke="#6f8fe8" stroke-width="1"><rect x="0" y="-4" width="34" height="8"/><path d="M4 -4v8M8 -4v8M12 -4v8M16 -4v8M20 -4v8M24 -4v8M28 -4v8"/><path d="M34 -3h8l8 -6v18l-8 -6h-8M-4 -8h4v16h-4M26 -4l3 -5l3 5"/></g><g transform="translate(624,523) rotate(-40) scale(1.0)" fill="none" stroke="#6f8fe8" stroke-width="1"><rect x="0" y="-4" width="34" height="8"/><path d="M4 -4v8M8 -4v8M12 -4v8M16 -4v8M20 -4v8M24 -4v8M28 -4v8"/><path d="M34 -3h8l8 -6v18l-8 -6h-8M-4 -8h4v16h-4M26 -4l3 -5l3 5"/></g><g transform="translate(788,301) rotate(180) scale(0.88)" fill="none" stroke="#5080e0" stroke-width="1"><rect x="0" y="-4" width="34" height="8"/><path d="M4 -4v8M8 -4v8M12 -4v8M16 -4v8M20 -4v8M24 -4v8M28 -4v8"/><path d="M34 -3h8l8 -6v18l-8 -6h-8M-4 -8h4v16h-4M26 -4l3 -5l3 5"/></g><g transform="translate(750,331) rotate(180) scale(0.9)" fill="none" stroke="#5080e0" stroke-width="1"><rect x="0" y="-4" width="34" height="8"/><path d="M4 -4v8M8 -4v8M12 -4v8M16 -4v8M20 -4v8M24 -4v8M28 -4v8"/><path d="M34 -3h8l8 -6v18l-8 -6h-8M-4 -8h4v16h-4M26 -4l3 -5l3 5"/></g><path d="M71.5 478L71.5 506" stroke="#20a020" stroke-width="1" fill="none" /><path d="M71 506.5L98 506.5" stroke="#e02020" stroke-width="1" fill="none" /><path d="M71.5 502L71.5 507" stroke="#2040ff" stroke-width="1" fill="none" /><text x="71" y="483" font-size="9" fill="#20a020" font-family="Liberation Sans,sans-serif">y</text><text x="96" y="505" font-size="9" fill="#e02020" font-family="Liberation Sans,sans-serif">x</text><text x="71" y="506" font-size="8" fill="#2040ff" font-family="Liberation Sans,sans-serif">z</text><circle cx="802.5" cy="199" r="29" fill="none" stroke="rgba(190,190,195,.5)" stroke-width="6.5" /><circle cx="802.5" cy="199" r="25.5" fill="none" stroke="rgba(90,90,90,.5)" stroke-width="1" /><rect x="787.5" y="184.5" width="30" height="30" fill="rgba(150,150,150,.78)" stroke="rgba(170,170,170,.8)" stroke-width="1" /><text x="793" y="203" font-size="8" fill="#666" font-family="Liberation Sans,sans-serif">TOP</text><text x="797" y="171" font-size="10" font-weight="bold" fill="#b0b0b0" font-family="Liberation Sans,sans-serif">N</text><text x="797" y="238" font-size="10" font-weight="bold" fill="#b0b0b0" font-family="Liberation Sans,sans-serif">S</text><text x="765" y="204" font-size="10" font-weight="bold" fill="#b0b0b0" font-family="Liberation Sans,sans-serif">W</text><text x="832" y="204" font-size="10" font-weight="bold" fill="#b0b0b0" font-family="Liberation Sans,sans-serif">E</text></g></svg><div class="vlabel" style="left:5px;top:9px;letter-spacing:0.2px">[+] [Top ] [Standard ] [Wireframe ]</div></div>
<div class="vp" style="left:863px;top:143px;width:816px;height:392px;background:#353535;"><svg width="816" height="392" style="left:0px;top:0px"><g transform="translate(-863,-143)"><defs><pattern id="olive" width="3" height="3" patternUnits="userSpaceOnUse"><rect width="3" height="3" fill="#6a5208"/><path d="M.5 0v3" stroke="#94740f" stroke-width="1.300"/></pattern></defs><path d="M1051.5 143L1051.5 535" stroke="#0c7c2c" stroke-width="1" fill="none" /><path d="M1055.5 143L1055.5 535" stroke="#0c7c2c" stroke-width="1" fill="none" /><path d="M1059.5 143L1059.5 535" stroke="#0c7c2c" stroke-width="1" fill="none" /><path d="M1063.5 143L1063.5 535" stroke="#0c7c2c" stroke-width="1" fill="none" /><path d="M1076.5 143L1076.5 535" stroke="#0c7c2c" stroke-width="1" fill="none" /><path d="M1193.5 143L1193.5 535" stroke="#0c7c2c" stroke-width="1" fill="none" /><path d="M1197.5 143L1197.5 535" stroke="#0c7c2c" stroke-width="1" fill="none" /><path d="M865 197.5L1095 197.5" stroke="#18e018" stroke-width="1.3" fill="none" /><path d="M944.5 197L944.5 312" stroke="#18e018" stroke-width="1.3" fill="none" /><path d="M985.5 197L985.5 312" stroke="#18e018" stroke-width="1.3" fill="none" /><path d="M1067.5 197L1067.5 312" stroke="#18e018" stroke-width="1.3" fill="none" /><path d="M865 312.5L1095 312.5" stroke="#18e018" stroke-width="1.3" fill="none" /><path d="M865 340.5L1095 340.5" stroke="#18e018" stroke-width="1.3" fill="none" /><path d="M1095.5 312L1095.5 340" stroke="#18e018" stroke-width="1.3" fill="none" /><path d="M961.5 312L961.5 340" stroke="#18e018" stroke-width="1.3" fill="none" /><path d="M1001.5 312L1001.5 340" stroke="#18e018" stroke-width="1.3" fill="none" /><path d="M1226 197.5L1678 197.5" stroke="#18e018" stroke-width="1.3" fill="none" /><path d="M1242.5 197L1242.5 312" stroke="#18e018" stroke-width="1.3" fill="none" /><rect x="1226.5" y="312.5" width="460" height="28" fill="none" stroke="#18e018" stroke-width="1.3" /><rect x="1524.5" y="340.5" width="160" height="4" fill="none" stroke="#18b018" stroke-width="1.3" /><path d="M865 238.5L1679 238.5" stroke="#b020a0" stroke-width="1.3" fill="none" /><path d="M865 298.5L1679 298.5" stroke="#b020a0" stroke-width="1.3" fill="none" /><path d="M1124.5 238L1124.5 298" stroke="#b020a0" stroke-width="1.3" fill="none" /><path d="M1268.5 238L1268.5 312" stroke="#1830a0" stroke-width="1" fill="none" /><path d="M1635.5 238L1635.5 312" stroke="#1830a0" stroke-width="1" fill="none" /><rect x="1140.5" y="197.5" width="41" height="340" fill="none" stroke="#7c7c7c" stroke-width="1" /><rect x="1136.5" y="238.5" width="49" height="245" fill="none" stroke="#b8dca0" stroke-width="1.3" /><rect x="865" y="340" width="37" height="81" fill="url(#olive)" /><rect x="865" y="408" width="37" height="13" fill="#806410" /><rect x="919" y="340" width="29" height="110" fill="url(#olive)" /><rect x="919" y="437" width="29" height="13" fill="#806410" /><path d="M879 410L879 420" stroke="#ffff00" stroke-width="1" fill="none" /><path d="M881 410L881 420" stroke="#ffff00" stroke-width="1" fill="none" /><path d="M883 410L883 420" stroke="#ffff00" stroke-width="1" fill="none" /><path d="M885 410L885 420" stroke="#ffff00" stroke-width="1" fill="none" /><path d="M887 410L887 420" stroke="#ffff00" stroke-width="1" fill="none" /><path d="M929 439L929 449" stroke="#ffff00" stroke-width="1" fill="none" /><path d="M931 439L931 449" stroke="#ffff00" stroke-width="1" fill="none" /><path d="M933 439L933 449" stroke="#ffff00" stroke-width="1" fill="none" /><path d="M935 439L935 449" stroke="#ffff00" stroke-width="1" fill="none" /><path d="M937 439L937 449" stroke="#ffff00" stroke-width="1" fill="none" /><path d="M960 340.500h105v3h-22v2c-1 0 -2 1 -2 3v186h-16v-186c0 -2 -1 -4 -4 -5h-16c-2 0 -4 2 -4 5v124h-17v-124c0 -3 -2 -5 -5 -5h-14c-3 -1 -5 -2 -5 -3z" fill="#5ce0c8"/><path d="M880 421L877.5 424L873 429L869.5 434L867.5 439L866 444L865.5 449L865.5 455L856 481L852 493L843 534" stroke="#ffff00" stroke-width="1.3" fill="none" /><path d="M880.5 421L878.5 424L874.8 429L871.9 434L870.3 439L869.1 444L868.6 449L868.6 455L860.9 481L857.6 493L850.2 534" stroke="#ffff00" stroke-width="1.3" fill="none" /><path d="M881.1 421L879.6 424L876.8 429L874.6 434L873.4 439L872.5 444L872.1 449L872.1 455L866.3 481L863.8 493L858.2 534" stroke="#ffff00" stroke-width="1.3" fill="none" /><path d="M881.7 421L880.7 424L878.8 429L877.3 434L876.5 439L875.9 444L875.6 449L875.6 455L871.7 481L870 493L866.2 534" stroke="#ffff00" stroke-width="1.3" fill="none" /><path d="M882.4 421L881.9 424L881 429L880.3 434L879.9 439L879.6 444L879.5 449L879.5 455L877.6 481L876.8 493L875 534" stroke="#ffff00" stroke-width="1.3" fill="none" /><path d="M883 421L883 424L883 429L883 434L883 439L883 444L883 449L883 455L883 481L883 493L883 534" stroke="#ffff00" stroke-width="1.3" fill="none" /><path d="M883.6 421L884.1 424L885 429L885.7 434L886.1 439L886.4 444L886.5 449L886.5 455L888.4 481L889.2 493L891 534" stroke="#ffff00" stroke-width="1.3" fill="none" /><path d="M884.3 421L885.3 424L887.2 429L888.7 434L889.5 439L890.1 444L890.4 449L890.4 455L894.3 481L896 493L899.8 534" stroke="#ffff00" stroke-width="1.3" fill="none" /><path d="M884.9 421L886.4 424L889.2 429L891.4 434L892.6 439L893.5 444L893.9 449L893.9 455L899.7 481L902.2 493L907.8 534" stroke="#ffff00" stroke-width="1.3" fill="none" /><path d="M885.5 421L887.5 424L891.2 429L894.1 434L895.7 439L896.9 444L897.4 449L897.4 455L905.1 481L908.4 493L915.8 534" stroke="#ffff00" stroke-width="1.3" fill="none" /><path d="M886 421L888.5 424L893 429L896.5 434L898.5 439L900 444L900.5 449L900.5 455L910 481L914 493L923 534" stroke="#ffff00" stroke-width="1.3" fill="none" /><path d="M865.5 455L861 534" stroke="#ffff00" stroke-width="1.3" fill="none" /><path d="M869 455L871 534" stroke="#ffff00" stroke-width="1.3" fill="none" /><path d="M872.5 455L847 534" stroke="#ffff00" stroke-width="1.3" fill="none" /><path d="M900.5 455L905 534" stroke="#ffff00" stroke-width="1.3" fill="none" /><path d="M897 455L895 534" stroke="#ffff00" stroke-width="1.3" fill="none" /><path d="M893.5 455L919 534" stroke="#ffff00" stroke-width="1.3" fill="none" /><path d="M877.8 455L879 534" stroke="#ffff00" stroke-width="1.3" fill="none" /><path d="M888.2 455L887 534" stroke="#ffff00" stroke-width="1.3" fill="none" /><path d="M875.1 455L855 534" stroke="#ffff00" stroke-width="1.3" fill="none" /><path d="M890.9 455L911 534" stroke="#ffff00" stroke-width="1.3" fill="none" /><path d="M877.5 424L888.5 424" stroke="#ffff00" stroke-width="1.3" fill="none" /><path d="M873 429L893 429" stroke="#ffff00" stroke-width="1.3" fill="none" /><path d="M869.5 434L896.5 434" stroke="#ffff00" stroke-width="1.3" fill="none" /><path d="M867.5 439L898.5 439" stroke="#ffff00" stroke-width="1.3" fill="none" /><path d="M866 444L900 444" stroke="#ffff00" stroke-width="1.3" fill="none" /><path d="M865.5 449L900.5 449" stroke="#ffff00" stroke-width="1.3" fill="none" /><path d="M865.5 455L900.5 455" stroke="#ffff00" stroke-width="1.3" fill="none" /><path d="M856 481L910 481" stroke="#ffff00" stroke-width="1.3" fill="none" /><path d="M852 493L914 493" stroke="#ffff00" stroke-width="1.3" fill="none" /><path d="M843 534L923 534" stroke="#ffff00" stroke-width="1.3" fill="none" /><path d="M880 421l-3.500 9l1 25l3 22h5l3 -22l1 -25l-3.500 -9z" fill="#ffff00"/><path d="M874 430l-6 12v12h30v-12l-6 -12z" fill="#ffff00" fill-opacity=".45"/><path d="M930.5 449.5L928 452.5L923.5 457.5L920 462.5L918 467.5L916.5 472.5L916 477.5L916 483.5L906.5 509.5L902.5 521.5L899.5 535" stroke="#ffff00" stroke-width="1.3" fill="none" /><path d="M931 449.5L929 452.5L925.3 457.5L922.4 462.5L920.8 467.5L919.6 472.5L919.1 477.5L919.1 483.5L911.4 509.5L908.1 521.5L905.7 535" stroke="#ffff00" stroke-width="1.3" fill="none" /><path d="M931.6 449.5L930.1 452.5L927.3 457.5L925.1 462.5L923.9 467.5L923 472.5L922.6 477.5L922.6 483.5L916.8 509.5L914.3 521.5L912.4 535" stroke="#ffff00" stroke-width="1.3" fill="none" /><path d="M932.2 449.5L931.2 452.5L929.3 457.5L927.8 462.5L927 467.5L926.4 472.5L926.1 477.5L926.1 483.5L922.2 509.5L920.5 521.5L919.2 535" stroke="#ffff00" stroke-width="1.3" fill="none" /><path d="M932.9 449.5L932.4 452.5L931.5 457.5L930.8 462.5L930.4 467.5L930.1 472.5L930 477.5L930 483.5L928.1 509.5L927.3 521.5L926.7 535" stroke="#ffff00" stroke-width="1.3" fill="none" /><path d="M933.5 449.5L933.5 452.5L933.5 457.5L933.5 462.5L933.5 467.5L933.5 472.5L933.5 477.5L933.5 483.5L933.5 509.5L933.5 521.5L933.5 535" stroke="#ffff00" stroke-width="1.3" fill="none" /><path d="M934.1 449.5L934.6 452.5L935.5 457.5L936.2 462.5L936.6 467.5L936.9 472.5L937 477.5L937 483.5L938.9 509.5L939.7 521.5L940.3 535" stroke="#ffff00" stroke-width="1.3" fill="none" /><path d="M934.8 449.5L935.8 452.5L937.7 457.5L939.2 462.5L940 467.5L940.6 472.5L940.9 477.5L940.9 483.5L944.8 509.5L946.5 521.5L947.8 535" stroke="#ffff00" stroke-width="1.3" fill="none" /><path d="M935.4 449.5L936.9 452.5L939.7 457.5L941.9 462.5L943.1 467.5L944 472.5L944.4 477.5L944.4 483.5L950.2 509.5L952.7 521.5L954.6 535" stroke="#ffff00" stroke-width="1.3" fill="none" /><path d="M936 449.5L938 452.5L941.7 457.5L944.6 462.5L946.2 467.5L947.4 472.5L947.9 477.5L947.9 483.5L955.6 509.5L958.9 521.5L961.3 535" stroke="#ffff00" stroke-width="1.3" fill="none" /><path d="M936.5 449.5L939 452.5L943.5 457.5L947 462.5L949 467.5L950.5 472.5L951 477.5L951 483.5L960.5 509.5L964.5 521.5L967.5 535" stroke="#ffff00" stroke-width="1.3" fill="none" /><path d="M916 483.5L913.1 535" stroke="#ffff00" stroke-width="1.3" fill="none" /><path d="M919.5 483.5L920.8 535" stroke="#ffff00" stroke-width="1.3" fill="none" /><path d="M923 483.5L906.4 535" stroke="#ffff00" stroke-width="1.3" fill="none" /><path d="M951 483.5L953.9 535" stroke="#ffff00" stroke-width="1.3" fill="none" /><path d="M947.5 483.5L946.2 535" stroke="#ffff00" stroke-width="1.3" fill="none" /><path d="M944 483.5L960.6 535" stroke="#ffff00" stroke-width="1.3" fill="none" /><path d="M928.2 483.5L929.1 535" stroke="#ffff00" stroke-width="1.3" fill="none" /><path d="M938.8 483.5L937.9 535" stroke="#ffff00" stroke-width="1.3" fill="none" /><path d="M925.6 483.5L912.5 535" stroke="#ffff00" stroke-width="1.3" fill="none" /><path d="M941.4 483.5L954.5 535" stroke="#ffff00" stroke-width="1.3" fill="none" /><path d="M928 452.5L939 452.5" stroke="#ffff00" stroke-width="1.3" fill="none" /><path d="M923.5 457.5L943.5 457.5" stroke="#ffff00" stroke-width="1.3" fill="none" /><path d="M920 462.5L947 462.5" stroke="#ffff00" stroke-width="1.3" fill="none" /><path d="M918 467.5L949 467.5" stroke="#ffff00" stroke-width="1.3" fill="none" /><path d="M916.5 472.5L950.5 472.5" stroke="#ffff00" stroke-width="1.3" fill="none" /><path d="M916 477.5L951 477.5" stroke="#ffff00" stroke-width="1.3" fill="none" /><path d="M916 483.5L951 483.5" stroke="#ffff00" stroke-width="1.3" fill="none" /><path d="M906.5 509.5L960.5 509.5" stroke="#ffff00" stroke-width="1.3" fill="none" /><path d="M902.5 521.5L964.5 521.5" stroke="#ffff00" stroke-width="1.3" fill="none" /><path d="M930.5 449.5l-3.500 9l1 25l3 22h5l3 -22l1 -25l-3.500 -9z" fill="#ffff00"/><path d="M924.5 458.5l-6 12v12h30v-12l-6 -12z" fill="#ffff00" fill-opacity=".45"/><path d="M989 472.5L986.5 475.5L982 480.5L978.5 485.5L976.5 490.5L975 495.5L974.5 500.5L974.5 506.5L965 532.5L964.2 535" stroke="#ffff00" stroke-width="1.3" fill="none" /><path d="M989.5 472.5L987.5 475.5L983.8 480.5L980.9 485.5L979.3 490.5L978.1 495.5L977.6 500.5L977.6 506.5L969.9 532.5L969.2 535" stroke="#ffff00" stroke-width="1.3" fill="none" /><path d="M990.1 472.5L988.6 475.5L985.8 480.5L983.6 485.5L982.4 490.5L981.5 495.5L981.1 500.5L981.1 506.5L975.3 532.5L974.7 535" stroke="#ffff00" stroke-width="1.3" fill="none" /><path d="M990.7 472.5L989.7 475.5L987.8 480.5L986.3 485.5L985.5 490.5L984.9 495.5L984.6 500.5L984.6 506.5L980.7 532.5L980.3 535" stroke="#ffff00" stroke-width="1.3" fill="none" /><path d="M991.4 472.5L990.9 475.5L990 480.5L989.3 485.5L988.9 490.5L988.6 495.5L988.5 500.5L988.5 506.5L986.6 532.5L986.4 535" stroke="#ffff00" stroke-width="1.3" fill="none" /><path d="M992 472.5L992 475.5L992 480.5L992 485.5L992 490.5L992 495.5L992 500.5L992 506.5L992 532.5L992 535" stroke="#ffff00" stroke-width="1.3" fill="none" /><path d="M992.6 472.5L993.1 475.5L994 480.5L994.7 485.5L995.1 490.5L995.4 495.5L995.5 500.5L995.5 506.5L997.4 532.5L997.6 535" stroke="#ffff00" stroke-width="1.3" fill="none" /><path d="M993.3 472.5L994.3 475.5L996.2 480.5L997.7 485.5L998.5 490.5L999.1 495.5L999.4 500.5L999.4 506.5L1003.3 532.5L1003.7 535" stroke="#ffff00" stroke-width="1.3" fill="none" /><path d="M993.9 472.5L995.4 475.5L998.2 480.5L1000.4 485.5L1001.6 490.5L1002.5 495.5L1002.9 500.5L1002.9 506.5L1008.7 532.5L1009.3 535" stroke="#ffff00" stroke-width="1.3" fill="none" /><path d="M994.5 472.5L996.5 475.5L1000.2 480.5L1003.1 485.5L1004.7 490.5L1005.9 495.5L1006.4 500.5L1006.4 506.5L1014.1 532.5L1014.8 535" stroke="#ffff00" stroke-width="1.3" fill="none" /><path d="M995 472.5L997.5 475.5L1002 480.5L1005.5 485.5L1007.5 490.5L1009 495.5L1009.5 500.5L1009.5 506.5L1019 532.5L1019.8 535" stroke="#ffff00" stroke-width="1.3" fill="none" /><path d="M974.5 506.5L972.9 535" stroke="#ffff00" stroke-width="1.3" fill="none" /><path d="M978 506.5L978.7 535" stroke="#ffff00" stroke-width="1.3" fill="none" /><path d="M981.5 506.5L972.3 535" stroke="#ffff00" stroke-width="1.3" fill="none" /><path d="M1009.5 506.5L1011.1 535" stroke="#ffff00" stroke-width="1.3" fill="none" /><path d="M1006 506.5L1005.3 535" stroke="#ffff00" stroke-width="1.3" fill="none" /><path d="M1002.5 506.5L1011.7 535" stroke="#ffff00" stroke-width="1.3" fill="none" /><path d="M986.8 506.5L987.2 535" stroke="#ffff00" stroke-width="1.3" fill="none" /><path d="M997.2 506.5L996.8 535" stroke="#ffff00" stroke-width="1.3" fill="none" /><path d="M984.1 506.5L976.9 535" stroke="#ffff00" stroke-width="1.3" fill="none" /><path d="M999.9 506.5L1007.1 535" stroke="#ffff00" stroke-width="1.3" fill="none" /><path d="M986.5 475.5L997.5 475.5" stroke="#ffff00" stroke-width="1.3" fill="none" /><path d="M982 480.5L1002 480.5" stroke="#ffff00" stroke-width="1.3" fill="none" /><path d="M978.5 485.5L1005.5 485.5" stroke="#ffff00" stroke-width="1.3" fill="none" /><path d="M976.5 490.5L1007.5 490.5" stroke="#ffff00" stroke-width="1.3" fill="none" /><path d="M975 495.5L1009 495.5" stroke="#ffff00" stroke-width="1.3" fill="none" /><path d="M974.5 500.5L1009.5 500.5" stroke="#ffff00" stroke-width="1.3" fill="none" /><path d="M974.5 506.5L1009.5 506.5" stroke="#ffff00" stroke-width="1.3" fill="none" /><path d="M965 532.5L1019 532.5" stroke="#ffff00" stroke-width="1.3" fill="none" /><path d="M989 472.5l-3.500 9l1 25l3 22h5l3 -22l1 -25l-3.500 -9z" fill="#ffff00"/><path d="M983 481.5l-6 12v12h30v-12l-6 -12z" fill="#ffff00" fill-opacity=".45"/><path d="M1469.5 339.5L1467 342.5L1462.5 347.5L1459 352.5L1457 357.5L1455.5 362.5L1455 367.5L1455 373.5L1445.5 399.5L1441.5 411.5L1432.5 452.5" stroke="#ffff00" stroke-width="1.3" fill="none" /><path d="M1470 339.5L1468 342.5L1464.3 347.5L1461.4 352.5L1459.8 357.5L1458.6 362.5L1458.2 367.5L1458.2 373.5L1450.4 399.5L1447.1 411.5L1439.7 452.5" stroke="#ffff00" stroke-width="1.3" fill="none" /><path d="M1470.6 339.5L1469.1 342.5L1466.3 347.5L1464.1 352.5L1462.9 357.5L1462 362.5L1461.7 367.5L1461.7 373.5L1455.8 399.5L1453.3 411.5L1447.7 452.5" stroke="#ffff00" stroke-width="1.3" fill="none" /><path d="M1471.2 339.5L1470.2 342.5L1468.3 347.5L1466.8 352.5L1466 357.5L1465.4 362.5L1465.2 367.5L1465.2 373.5L1461.2 399.5L1459.5 411.5L1455.7 452.5" stroke="#ffff00" stroke-width="1.3" fill="none" /><path d="M1471.9 339.5L1471.4 342.5L1470.5 347.5L1469.8 352.5L1469.4 357.5L1469.1 362.5L1469 367.5L1469 373.5L1467.1 399.5L1466.3 411.5L1464.5 452.5" stroke="#ffff00" stroke-width="1.3" fill="none" /><path d="M1472.5 339.5L1472.5 342.5L1472.5 347.5L1472.5 352.5L1472.5 357.5L1472.5 362.5L1472.5 367.5L1472.5 373.5L1472.5 399.5L1472.5 411.5L1472.5 452.5" stroke="#ffff00" stroke-width="1.3" fill="none" /><path d="M1473.1 339.5L1473.6 342.5L1474.5 347.5L1475.2 352.5L1475.6 357.5L1475.9 362.5L1476 367.5L1476 373.5L1477.9 399.5L1478.7 411.5L1480.5 452.5" stroke="#ffff00" stroke-width="1.3" fill="none" /><path d="M1473.8 339.5L1474.8 342.5L1476.7 347.5L1478.2 352.5L1479 357.5L1479.6 362.5L1479.8 367.5L1479.8 373.5L1483.8 399.5L1485.5 411.5L1489.3 452.5" stroke="#ffff00" stroke-width="1.3" fill="none" /><path d="M1474.4 339.5L1475.9 342.5L1478.7 347.5L1480.9 352.5L1482.1 357.5L1483 362.5L1483.3 367.5L1483.3 373.5L1489.2 399.5L1491.7 411.5L1497.3 452.5" stroke="#ffff00" stroke-width="1.3" fill="none" /><path d="M1475 339.5L1477 342.5L1480.7 347.5L1483.6 352.5L1485.2 357.5L1486.4 362.5L1486.8 367.5L1486.8 373.5L1494.6 399.5L1497.9 411.5L1505.3 452.5" stroke="#ffff00" stroke-width="1.3" fill="none" /><path d="M1475.5 339.5L1478 342.5L1482.5 347.5L1486 352.5L1488 357.5L1489.5 362.5L1490 367.5L1490 373.5L1499.5 399.5L1503.5 411.5L1512.5 452.5" stroke="#ffff00" stroke-width="1.3" fill="none" /><path d="M1455 373.5L1450.5 452.5" stroke="#ffff00" stroke-width="1.3" fill="none" /><path d="M1458.5 373.5L1460.5 452.5" stroke="#ffff00" stroke-width="1.3" fill="none" /><path d="M1462 373.5L1436.5 452.5" stroke="#ffff00" stroke-width="1.3" fill="none" /><path d="M1490 373.5L1494.5 452.5" stroke="#ffff00" stroke-width="1.3" fill="none" /><path d="M1486.5 373.5L1484.5 452.5" stroke="#ffff00" stroke-width="1.3" fill="none" /><path d="M1483 373.5L1508.5 452.5" stroke="#ffff00" stroke-width="1.3" fill="none" /><path d="M1467.2 373.5L1468.5 452.5" stroke="#ffff00" stroke-width="1.3" fill="none" /><path d="M1477.8 373.5L1476.5 452.5" stroke="#ffff00" stroke-width="1.3" fill="none" /><path d="M1464.6 373.5L1444.5 452.5" stroke="#ffff00" stroke-width="1.3" fill="none" /><path d="M1480.4 373.5L1500.5 452.5" stroke="#ffff00" stroke-width="1.3" fill="none" /><path d="M1467 342.5L1478 342.5" stroke="#ffff00" stroke-width="1.3" fill="none" /><path d="M1462.5 347.5L1482.5 347.5" stroke="#ffff00" stroke-width="1.3" fill="none" /><path d="M1459 352.5L1486 352.5" stroke="#ffff00" stroke-width="1.3" fill="none" /><path d="M1457 357.5L1488 357.5" stroke="#ffff00" stroke-width="1.3" fill="none" /><path d="M1455.5 362.5L1489.5 362.5" stroke="#ffff00" stroke-width="1.3" fill="none" /><path d="M1455 367.5L1490 367.5" stroke="#ffff00" stroke-width="1.3" fill="none" /><path d="M1455 373.5L1490 373.5" stroke="#ffff00" stroke-width="1.3" fill="none" /><path d="M1445.5 399.5L1499.5 399.5" stroke="#ffff00" stroke-width="1.3" fill="none" /><path d="M1441.5 411.5L1503.5 411.5" stroke="#ffff00" stroke-width="1.3" fill="none" /><path d="M1432.5 452.5L1512.5 452.5" stroke="#ffff00" stroke-width="1.3" fill="none" /><path d="M1469.5 339.5l-3.500 9l1 25l3 22h5l3 -22l1 -25l-3.500 -9z" fill="#ffff00"/><path d="M1463.5 348.5l-6 12v12h30v-12l-6 -12z" fill="#ffff00" fill-opacity=".45"/><path d="M1462 339.5L1484 339.5" stroke="#6a8a6a" stroke-width="1.6" fill="none" /><path d="M882.5 440L882.5 535" stroke="#48a8f0" stroke-width="1" fill="none" /><path d="M933.5 470L933.5 535" stroke="#48a8f0" stroke-width="1" fill="none" /><path d="M991.5 495L991.5 535" stroke="#48a8f0" stroke-width="1" fill="none" /><path d="M1472.5 345L1472.5 535" stroke="#48a8f0" stroke-width="1.3" fill="none" /><path d="M866 443L889 533" stroke="#9060e0" stroke-width="4.5" fill="none" /><path d="M868 470L878 470L880 495L872 495" stroke="#9060e0" stroke-width="1" fill="none" /><path d="M874 500L884 500L886 525L878 525" stroke="#9060e0" stroke-width="1" fill="none" /><path d="M867.5 238L867.5 535" stroke="#e01010" stroke-width="1.3" fill="none" /><path d="M1001.5 238L1001.5 535" stroke="#e01010" stroke-width="1.3" fill="none" /><path d="M1042.5 238L1042.5 535" stroke="#e01010" stroke-width="1.3" fill="none" /><path d="M1084.5 200L1084.5 535" stroke="#e01010" stroke-width="1.3" fill="none" /><path d="M1124.5 298L1124.5 535" stroke="#e01010" stroke-width="1.3" fill="none" /><path d="M1185.5 483L1185.5 535" stroke="#e01010" stroke-width="1.3" fill="none" /><rect x="1074.5" y="192.5" width="10.5" height="342" fill="none" stroke="#e8e000" stroke-width="1.3" /><path d="M1074 320.5L1086 320.5" stroke="#e8e000" stroke-width="1" fill="none" /><path d="M1083.5 200L1083.5 535" stroke="#e01010" stroke-width="1.3" fill="none" /><path d="M1079.5 197L1079.5 312" stroke="#18e018" stroke-width="1.3" fill="none" /><rect x="1054" y="331" width="2.6" height="204" fill="#d8d8d8" /><rect x="1059.5" y="331" width="2" height="204" fill="#d8d8d8" /><rect x="1067.5" y="331" width="2" height="204" fill="#d8d8d8" /><path d="M1054 330.5L1069 330.5" stroke="#d8d8d8" stroke-width="1.6" fill="none" /><path d="M1043 335.5L1055 335.5" stroke="#d8d8d8" stroke-width="1.6" fill="none" /><path d="M1043.5 335L1043.5 345" stroke="#d8d8d8" stroke-width="1.3" fill="none" /><path d="M1043 524.5L1083 524.5" stroke="#b020a0" stroke-width="1.3" fill="none" /><rect x="1254.5" y="318.5" width="395" height="214" fill="none" stroke="#b81858" stroke-width="1.2" /><path d="M1257.5 318L1257.5 535" stroke="#b81858" stroke-width="1" fill="none" /><path d="M1261.5 318L1261.5 535" stroke="#b81858" stroke-width="1" fill="none" /><path d="M1267.5 318L1267.5 535" stroke="#b81858" stroke-width="1" fill="none" /><path d="M1637.5 318L1637.5 535" stroke="#b81858" stroke-width="1" fill="none" /><path d="M1643.5 318L1643.5 535" stroke="#b81858" stroke-width="1" fill="none" /><path d="M1646.5 318L1646.5 535" stroke="#b81858" stroke-width="1" fill="none" /><rect x="1272.5" y="318" width="8" height="215" fill="#b81858" /><rect x="1624.5" y="318" width="8" height="215" fill="#b81858" /><rect x="1272.5" y="528" width="360" height="5" fill="#b81858" /><path d="M1254 524.5L1650 524.5" stroke="#b81858" stroke-width="1" fill="none" /><rect x="1347.5" y="320.5" width="71" height="215" fill="none" stroke="#c8a4ec" stroke-width="1.6" /><rect x="1354" y="322.5" width="57.5" height="213" fill="none" stroke="#c8a4ec" stroke-width="1.6" /><path d="M890.5 507L890.5 480" stroke="#2040ff" stroke-width="1.3" fill="none" /><path d="M890 507.5L917 507.5" stroke="#e02020" stroke-width="1.3" fill="none" /><path d="M889 503L893 511" stroke="#20a020" stroke-width="1.3" fill="none" /><ellipse cx="1621" cy="216.500" rx="39" ry="3.500" fill="none" stroke="#8a8a8a" stroke-width="1.500"/><rect x="1607" y="184" width="30" height="30.5" fill="#808080" stroke="#8c8c8c" stroke-width="1" /><text x="1611" y="203" font-size="7.500" fill="#6a6a6a" font-family="Liberation Sans,sans-serif">FRONT</text></g></svg><div class="vlabel" style="left:5px;top:9px;letter-spacing:0.2px">[+] [Front ] [Standard ] [Wireframe ]</div></div>
<div class="vp" style="left:44px;top:539px;width:815px;height:393px;background:#353535;"><svg width="815" height="393" style="left:0px;top:0px"><g transform="translate(-44,-539)"><defs><pattern id="redstripe" width="4" height="4" patternUnits="userSpaceOnUse"><rect width="4" height="4" fill="#f00808"/><path d="M.5 0v4" stroke="#b8901c" stroke-width="1.200"/></pattern><pattern id="olstripe" width="11" height="4" patternUnits="userSpaceOnUse"><rect width="11" height="4" fill="#b8941c"/><path d="M.5 0v4" stroke="#f00808" stroke-width="1"/></pattern><pattern id="ol2" width="4" height="4" patternUnits="userSpaceOnUse"><rect width="4" height="4" fill="#b8941c"/><path d="M.5 0v4" stroke="#f00808" stroke-width="1"/></pattern><pattern id="grstripe" width="3" height="3" patternUnits="userSpaceOnUse"><rect width="3" height="3" fill="#60e080"/><path d="M.5 0v3" stroke="#b8901c" stroke-width="1"/></pattern></defs><path d="M279.5 539L279.5 932" stroke="#5c5c5c" stroke-width="1" fill="none" /><path d="M605.5 539L605.5 932" stroke="#0c0c0c" stroke-width="1.6" fill="none" /><path d="M44 778.5L232 778.5" stroke="#0a0a0a" stroke-width="1.6" fill="none" /><path d="M560 778.5L800 778.5" stroke="#8a8a8a" stroke-width="1.3" fill="none" /><path d="M800 778.5L859 778.5" stroke="#0a0a0a" stroke-width="1.6" fill="none" /><path d="M120 778v-17c0 -3 2 -4 5 -4h20c3 0 4 2 4 5h10c0 -4 2 -6 6 -6h18c3 0 5 2 5 5v17z" fill="#50c0e0"/><rect x="106" y="768" width="25" height="10.5" fill="#c0a0e8" rx="3" /><rect x="271.5" y="669.5" width="55" height="4" fill="none" stroke="#10a040" stroke-width="2" /><path d="M298.5 670L298.5 684" stroke="#10a040" stroke-width="2" fill="none" /><rect x="361.5" y="671.5" width="97" height="14" fill="none" stroke="#e8e0a0" stroke-width="1.3" /><rect x="258" y="680" width="292" height="12" fill="#b8901c" /><rect x="338" y="682" width="26" height="7" fill="#18e018" /><rect x="441" y="682" width="18" height="7" fill="#18e018" /><rect x="536" y="682" width="10" height="5" fill="#18e018" /><rect x="255" y="684" width="293" height="94.5" fill="url(#redstripe)" /><rect x="255" y="684" width="14" height="94" fill="#f00808" /><rect x="340" y="684" width="12" height="94" fill="#f00808" /><rect x="458" y="684" width="14" height="94" fill="#f00808" /><rect x="532" y="684" width="16" height="94" fill="#f00808" /><rect x="258.5" y="691.5" width="54" height="87" fill="#54e054" /><path d="M273.5 692L273.5 778" stroke="#d8c020" stroke-width="1" fill="none" /><path d="M281.5 692L281.5 778" stroke="#40c040" stroke-width="1" fill="none" /><path d="M289.5 692L289.5 778" stroke="#40c040" stroke-width="1" fill="none" /><path d="M297.5 692L297.5 778" stroke="#d8c020" stroke-width="1" fill="none" /><rect x="262" y="728" width="44" height="25" fill="#701890" /><path d="M265.5 730L265.5 751" stroke="#54e054" stroke-width="1" fill="none" /><path d="M269.5 730L269.5 751" stroke="#54e054" stroke-width="1" fill="none" /><path d="M273.5 730L273.5 751" stroke="#54e054" stroke-width="1" fill="none" /><path d="M277.5 730L277.5 751" stroke="#54e054" stroke-width="1" fill="none" /><path d="M281.5 730L281.5 751" stroke="#54e054" stroke-width="1" fill="none" /><path d="M285.5 730L285.5 751" stroke="#54e054" stroke-width="1" fill="none" /><path d="M289.5 730L289.5 751" stroke="#54e054" stroke-width="1" fill="none" /><path d="M293.5 730L293.5 751" stroke="#54e054" stroke-width="1" fill="none" /><path d="M297.5 730L297.5 751" stroke="#54e054" stroke-width="1" fill="none" /><path d="M301.5 730L301.5 751" stroke="#54e054" stroke-width="1" fill="none" /><rect x="275" y="731" width="8" height="8" fill="#54e054" /><rect x="285" y="731" width="8" height="8" fill="#54e054" /><rect x="275" y="742" width="8" height="8" fill="#54e054" /><rect x="285" y="742" width="8" height="8" fill="#54e054" /><rect x="313" y="692" width="28" height="86" fill="url(#redstripe)" /><rect x="312" y="694" width="7" height="40" fill="#b8901c" /><rect x="312" y="715" width="8" height="25" fill="#7090d0" /><rect x="352" y="692" width="106" height="86" fill="url(#olstripe)" /><rect x="366" y="694" width="60" height="10" fill="none" stroke="#f0f000" stroke-width="1.3" /><rect x="377" y="708" width="46" height="38" fill="url(#grstripe)" /><rect x="390" y="715" width="14" height="18" fill="none" stroke="#6088d8" stroke-width="1.3" /><rect x="391" y="716" width="12" height="10" fill="#6c8cd8" fill-opacity=".6"/><path d="M370 694L366 704" stroke="#f0f000" stroke-width="1" fill="none" /><path d="M379 694L375 704" stroke="#f0f000" stroke-width="1" fill="none" /><path d="M388 694L384 704" stroke="#f0f000" stroke-width="1" fill="none" /><path d="M397 694L393 704" stroke="#f0f000" stroke-width="1" fill="none" /><path d="M406 694L402 704" stroke="#f0f000" stroke-width="1" fill="none" /><path d="M415 694L411 704" stroke="#f0f000" stroke-width="1" fill="none" /><path d="M424 694L420 704" stroke="#f0f000" stroke-width="1" fill="none" /><rect x="352" y="694" width="12" height="84" fill="url(#redstripe)" /><rect x="437" y="694" width="4" height="84" fill="#101010" /><rect x="340" y="681" width="24" height="5" fill="#10e818" /><rect x="437" y="681" width="28" height="5" fill="#10e818" /><path d="M358 776v-18l-3 -20l4 -14l3 -16l6 -5h14l2 8l-2 30l4 14l-2 21z" fill="#7c7c7c"/><path d="M388 778l-2 -20l4 -14l-4 -18l6 4l6 -10l8 2l6 8l6 12l8 10l-2 14l-8 6l-4 8h-14z" fill="#7c7c7c"/><rect x="360.5" y="702.5" width="23" height="40" fill="none" stroke="#f0f080" stroke-width="2" /><rect x="378" y="762" width="10" height="14" fill="#8a8a8a" rx="3" /><rect x="395" y="770" width="10" height="8" fill="#60e0a0" /><rect x="468" y="682" width="69" height="96" fill="url(#ol2)" /><rect x="476" y="709" width="48" height="36" fill="url(#grstripe)" /><rect x="474.5" y="695.5" width="55" height="75" fill="none" stroke="#f0f000" stroke-width="1.3" /><rect x="476.5" y="708.5" width="47" height="37" fill="none" stroke="#f0f000" stroke-width="1" /><path d="M478 696L474 707" stroke="#f0f000" stroke-width="1" fill="none" /><path d="M478 770L474 758" stroke="#f0f000" stroke-width="1" fill="none" /><path d="M484.5 696L480.5 707" stroke="#f0f000" stroke-width="1" fill="none" /><path d="M484.5 770L480.5 758" stroke="#f0f000" stroke-width="1" fill="none" /><path d="M491 696L487 707" stroke="#f0f000" stroke-width="1" fill="none" /><path d="M491 770L487 758" stroke="#f0f000" stroke-width="1" fill="none" /><path d="M497.5 696L493.5 707" stroke="#f0f000" stroke-width="1" fill="none" /><path d="M497.5 770L493.5 758" stroke="#f0f000" stroke-width="1" fill="none" /><path d="M504 696L500 707" stroke="#f0f000" stroke-width="1" fill="none" /><path d="M504 770L500 758" stroke="#f0f000" stroke-width="1" fill="none" /><path d="M510.5 696L506.5 707" stroke="#f0f000" stroke-width="1" fill="none" /><path d="M510.5 770L506.5 758" stroke="#f0f000" stroke-width="1" fill="none" /><path d="M517 696L513 707" stroke="#f0f000" stroke-width="1" fill="none" /><path d="M517 770L513 758" stroke="#f0f000" stroke-width="1" fill="none" /><path d="M523.5 696L519.5 707" stroke="#f0f000" stroke-width="1" fill="none" /><path d="M523.5 770L519.5 758" stroke="#f0f000" stroke-width="1" fill="none" /><rect x="494.5" y="731.5" width="8" height="8" fill="none" stroke="#6088d8" stroke-width="1.3" /><path d="M478 746.5L524 746.5" stroke="#60e0a0" stroke-width="2" fill="none" /><rect x="232.5" y="691.5" width="21" height="87" fill="none" stroke="#88b8e8" stroke-width="1.3" /><rect x="440.5" y="702" width="12" height="76" fill="none" stroke="#88b8e8" stroke-width="1.6" /><path d="M232 716.5L253 716.5" stroke="#e8e0a0" stroke-width="2" fill="none" /><path d="M232 729.5L253 729.5" stroke="#e8e0a0" stroke-width="2" fill="none" /><path d="M232 752.5L253 752.5" stroke="#e8e0a0" stroke-width="2" fill="none" /><rect x="232" y="766" width="80" height="7" fill="none" stroke="#88b8e8" stroke-width="1.3" /><path d="M238 730L244 722L250 730z" stroke="none" stroke-width="0" fill="#e0a0d8" /><rect x="240" y="744" width="7" height="8" fill="#e0a0d8" rx="3" /><rect x="239" y="710" width="5" height="5" fill="#b8901c" /><path d="M441 721.5L452 721.5" stroke="#88b8e8" stroke-width="1.3" fill="none" /><path d="M441 737.5L452 737.5" stroke="#88b8e8" stroke-width="1.3" fill="none" /><path d="M441 760.5L452 760.5" stroke="#88b8e8" stroke-width="1.3" fill="none" /><rect x="442" y="757" width="9" height="10" fill="#e0a0d8" rx="3" /><rect x="444" y="733" width="7" height="4" fill="#e060c8" /><rect x="232.5" y="691.5" width="80" height="87" fill="none" stroke="#e060c8" stroke-width="1" /><rect x="249.5" y="683.5" width="300" height="95" fill="none" stroke="#e060c8" stroke-width="1.2" /><rect x="241.5" y="674.5" width="317" height="121" fill="none" stroke="#e060c8" stroke-width="1.3" /><path d="M241.5 674.5L241.5 795.5" stroke="#e060c8" stroke-width="1" fill="none" /><path d="M253.7 674.5L253.7 795.5" stroke="#e060c8" stroke-width="1" fill="none" /><path d="M265.9 674.5L265.9 795.5" stroke="#e060c8" stroke-width="1" fill="none" /><path d="M278.1 674.5L278.1 795.5" stroke="#e060c8" stroke-width="1" fill="none" /><path d="M290.3 674.5L290.3 795.5" stroke="#e060c8" stroke-width="1" fill="none" /><path d="M302.5 674.5L302.5 795.5" stroke="#e060c8" stroke-width="1" fill="none" /><path d="M314.7 674.5L314.7 795.5" stroke="#e060c8" stroke-width="1" fill="none" /><path d="M326.9 674.5L326.9 795.5" stroke="#e060c8" stroke-width="1" fill="none" /><path d="M339.1 674.5L339.1 795.5" stroke="#e060c8" stroke-width="1" fill="none" /><path d="M351.3 674.5L351.3 795.5" stroke="#e060c8" stroke-width="1" fill="none" /><path d="M363.5 674.5L363.5 795.5" stroke="#e060c8" stroke-width="1" fill="none" /><path d="M375.7 674.5L375.7 795.5" stroke="#e060c8" stroke-width="1" fill="none" /><path d="M387.9 674.5L387.9 795.5" stroke="#e060c8" stroke-width="1" fill="none" /><path d="M400.1 674.5L400.1 795.5" stroke="#e060c8" stroke-width="1" fill="none" /><path d="M412.3 674.5L412.3 795.5" stroke="#e060c8" stroke-width="1" fill="none" /><path d="M424.5 674.5L424.5 795.5" stroke="#e060c8" stroke-width="1" fill="none" /><path d="M436.7 674.5L436.7 795.5" stroke="#e060c8" stroke-width="1" fill="none" /><path d="M448.9 674.5L448.9 795.5" stroke="#e060c8" stroke-width="1" fill="none" /><path d="M461.1 674.5L461.1 795.5" stroke="#e060c8" stroke-width="1" fill="none" /><path d="M473.3 674.5L473.3 795.5" stroke="#e060c8" stroke-width="1" fill="none" /><path d="M485.5 674.5L485.5 795.5" stroke="#e060c8" stroke-width="1" fill="none" /><path d="M497.7 674.5L497.7 795.5" stroke="#e060c8" stroke-width="1" fill="none" /><path d="M509.9 674.5L509.9 795.5" stroke="#e060c8" stroke-width="1" fill="none" /><path d="M522.1 674.5L522.1 795.5" stroke="#e060c8" stroke-width="1" fill="none" /><path d="M534.3 674.5L534.3 795.5" stroke="#e060c8" stroke-width="1" fill="none" /><path d="M546.5 674.5L546.5 795.5" stroke="#e060c8" stroke-width="1" fill="none" /><path d="M249 689.5L549 689.5" stroke="#9060d0" stroke-width="1" fill="none" /><path d="M312 776.5L548 776.5" stroke="#1010e0" stroke-width="2" fill="none" /><rect x="339.5" y="778.5" width="10" height="7" fill="none" stroke="#f0f000" stroke-width="1.6" /><rect x="405.5" y="778.5" width="10" height="7" fill="none" stroke="#f0f000" stroke-width="1.6" /><rect x="421.5" y="778.5" width="10" height="7" fill="none" stroke="#f0f000" stroke-width="1.6" /><rect x="437.5" y="778.5" width="10" height="7" fill="none" stroke="#f0f000" stroke-width="1.6" /><rect x="451.5" y="778.5" width="10" height="7" fill="none" stroke="#f0f000" stroke-width="1.6" /><path d="M414.5 778L414.5 802" stroke="#b8901c" stroke-width="2" fill="none" /><rect x="534" y="778" width="10" height="3" fill="none" stroke="#f0f000" stroke-width="1" /><path d="M546 692.5L560 692.5" stroke="#f0f000" stroke-width="2" fill="none" /><path d="M547 732.5L583 732.5" stroke="#4890e0" stroke-width="1.3" fill="none" /><rect x="583" y="690" width="5" height="88.5" fill="#b8e090" rx="2" /><rect x="590" y="690" width="5" height="88.5" fill="#b8e090" rx="2" /><rect x="596.5" y="690" width="5" height="88.5" fill="#b8e090" rx="2" /><circle cx="571" cy="759" r="4.5" fill="#e89060" /><circle cx="575" cy="754" r="4" fill="#40a860" /><rect x="603.5" y="749.5" width="3" height="3" fill="none" stroke="#9a9a9a" stroke-width="0.8" /><rect x="603.5" y="755.5" width="3" height="3" fill="none" stroke="#9a9a9a" stroke-width="0.8" /><rect x="603.5" y="761.5" width="3" height="3" fill="none" stroke="#9a9a9a" stroke-width="0.8" /><rect x="603.5" y="767.5" width="3" height="3" fill="none" stroke="#9a9a9a" stroke-width="0.8" /><rect x="603.5" y="773.5" width="3" height="3" fill="none" stroke="#9a9a9a" stroke-width="0.8" /><ellipse cx="801.500" cy="612.500" rx="38" ry="3.200" fill="none" stroke="#8a8a8a" stroke-width="1.500"/><rect x="787" y="580" width="31" height="30.5" fill="#808080" stroke="#8c8c8c" stroke-width="1" /><text x="794" y="599" font-size="8" fill="#6a6a6a" font-family="Liberation Sans,sans-serif">LEFT</text><path d="M70.5 905L70.5 876" stroke="#2040ff" stroke-width="1.3" fill="none" /><path d="M47 905.5L71 905.5" stroke="#20a020" stroke-width="1.3" fill="none" /><text x="71" y="880" font-size="9" fill="#2040ff" font-family="Liberation Sans,sans-serif">z</text><text x="46" y="903" font-size="9" fill="#20a020" font-family="Liberation Sans,sans-serif">y</text><text x="72" y="908" font-size="8" fill="#e02020" font-family="Liberation Sans,sans-serif">x</text></g></svg><div class="vlabel" style="left:5px;top:9px;letter-spacing:0.2px">[+] [Left ] [Standard ] [Wireframe ]</div></div>
<div class="vp" style="left:863px;top:539px;width:816px;height:393px;background:#070707;border:2px solid #8a7430;"><svg width="816" height="393" style="left:-2px;top:-2px"><g transform="translate(-863,-539)"><defs><clipPath id="rc"><rect x="1077" y="542" width="388" height="388"/></clipPath><pattern id="speck" width="23" height="19" patternUnits="userSpaceOnUse"><rect width="23" height="19" fill="#0c0c0c"/><circle cx="3" cy="4" r="1.100" fill="#8a8a8a"/><circle cx="11" cy="2" r=".8" fill="#6a6a6a"/><circle cx="17" cy="7" r="1.300" fill="#7a7a7a"/><circle cx="7" cy="11" r="1" fill="#9a9a9a"/><circle cx="14" cy="14" r=".9" fill="#5a5a5a"/><circle cx="20" cy="16" r="1.100" fill="#7a7a7a"/><circle cx="2" cy="16" r=".8" fill="#6a6a6a"/><circle cx="9" cy="17" r=".7" fill="#555"/><circle cx="21" cy="2" r=".7" fill="#555"/></pattern><linearGradient id="wood" x1="0" x2="1"><stop offset="0" stop-color="#8e8072"/><stop offset=".2" stop-color="#9a8c7e"/><stop offset=".4" stop-color="#8c7e70"/><stop offset=".6" stop-color="#988a7c"/><stop offset=".8" stop-color="#8e8072"/><stop offset="1" stop-color="#968a7c"/></linearGradient><filter id="granite" x="0" y="0" width="100%" height="100%" color-interpolation-filters="sRGB"><feTurbulence type="fractalNoise" baseFrequency="0.27" numOctaves="2" seed="11" result="n"/><feColorMatrix in="n" type="matrix" values="0 0 0 0 .5  0 0 0 0 .5  0 0 0 0 .5  3.4 0 0 0 -2.05" result="s"/><feComposite in="s" in2="SourceGraphic" operator="in" result="c"/><feMerge><feMergeNode in="SourceGraphic"/><feMergeNode in="c"/></feMerge></filter></defs><g clip-path="url(#rc)"><rect x="1077" y="542" width="388" height="388" fill="#d8d4cc" /><rect x="1077" y="542" width="388" height="33" fill="#bababa" /><path d="M1148 542L1164 566L1365 566L1381 542z" stroke="none" stroke-width="0" fill="#bebebc" /><path d="M1148 542L1164 566L1365 566L1381 542" stroke="#fbfbf4" stroke-width="2.5" fill="none" /><rect x="1077" y="568" width="388" height="7" fill="#a8a8a4" /><rect x="1077" y="574" width="7" height="50" fill="#c6c2bc" /><rect x="1083" y="574" width="48" height="48" fill="#e6e2d8" /><rect x="1131" y="574" width="71" height="129" fill="#e9e5db" /><rect x="1201" y="574.5" width="179" height="47" fill="#e6e2d8" /><path d="M1131.5 574L1131.5 622" stroke="#c8c4ba" stroke-width="1" fill="none" /><path d="M1292.5 574L1292.5 622" stroke="#d4d0c6" stroke-width="1" fill="none" /><rect x="1201" y="622" width="180" height="4" fill="#fffef0" /><rect x="1077" y="621" width="54" height="170" fill="#d2cec8" /><rect x="1083" y="621" width="48" height="16" fill="#b6b2ac" /><rect x="1128" y="637" width="3" height="66" fill="#fdfdf8" /><path d="M1083 661.5L1131 661.5L1131 672.5L1097 672.5z" stroke="none" stroke-width="0" fill="#7c706a" /><path d="M1083 707L1131 706L1131 712L1102 712z" stroke="none" stroke-width="0" fill="#7c706a" /><path d="M1088.2 557L1088.6 557L1089.5 700L1087.3 700z" stroke="none" stroke-width="0" fill="#161616" /><rect x="1086.8" y="700" width="3.4" height="5" fill="#fff0d0" /><path d="M1104.2 568L1104.6 568L1105.6 704L1103.2 704z" stroke="none" stroke-width="0" fill="#161616" /><rect x="1102.8" y="704" width="3.6" height="5" fill="#fff0d0" /><path d="M1109 656c2 -8 8 -14 18 -14l3 2v16l-8 1l-6 -3l-4 2z" fill="#4c463c"/><rect x="1119" y="654" width="9" height="7" fill="#c8c0b4" /><rect x="1127" y="645" width="3" height="10" fill="#c86830" /><path d="M1113 680L1117 690L1122 683L1119 694" stroke="#908c84" stroke-width="1" fill="none" /><path d="M1116 682L1122 692" stroke="#908c84" stroke-width="1" fill="none" /><rect x="1115" y="696" width="13" height="7" fill="#1c1c1c" /><path d="M1115 699.5L1128 699.5" stroke="#bbb" stroke-width="0.8" fill="none" /><rect x="1203" y="626" width="196" height="93" fill="url(#wood)" /><path d="M1241.5 626L1241.5 718" stroke="#8e8072" stroke-width="1" fill="none" /><path d="M1398.5 626L1398.5 718" stroke="#8e8072" stroke-width="1" fill="none" /><path d="M1398 628L1421 609L1421 718L1398 718z" stroke="none" stroke-width="0" fill="#74685e" /><path d="M1421 609L1465 609L1465 718L1421 718z" stroke="none" stroke-width="0" fill="#988a7c" /><path d="M1443.5 598L1443.5 718" stroke="#8e8072" stroke-width="1" fill="none" /><path d="M1398 662.5L1421 662.5" stroke="#6a5e54" stroke-width="1" fill="none" /><path d="M1379.7 573.6L1466 573.6L1466 610.6L1421 610.6L1398.6 627.9L1379.7 627.9z" stroke="none" stroke-width="0" fill="#b4b0aa" /><path d="M1380.6 574.5L1400.4 541.7L1457.2 541.7L1464.1 546L1380.6 621z" stroke="none" stroke-width="0" fill="#86827c" /><path d="M1380.6 621L1464.1 546L1466 547.8L1466 552.9L1386.6 624.4L1380.6 624.4z" stroke="none" stroke-width="0" fill="#a8a4a0" /><path d="M1399.5 545.2L1399.5 603.7" stroke="#76726c" stroke-width="1" fill="none" /><path d="M1430.5 541.7L1430.5 575.3" stroke="#76726c" stroke-width="1" fill="none" /><path d="M1266 625.6L1390.4 625.6L1466 558.1" stroke="#fffef2" stroke-width="3" fill="none" /><rect x="1240" y="702" width="100" height="17" fill="#1c1c1c" /><rect x="1240" y="701" width="100" height="5" fill="#7a7a7a" /><rect x="1275" y="700" width="30" height="6" fill="#c8c8c8" /><rect x="1243" y="707" width="94" height="5" fill="#e8e8e8" /><path d="M1203 719.5L1465 719.5" stroke="#fff8e0" stroke-width="1.6" fill="none" /><rect x="1150" y="721" width="235" height="60" fill="#0b0b0b" filter="url(#granite)"/><rect x="1203" y="719" width="182" height="6" fill="#0c0c0c" /><rect x="1385" y="721" width="43" height="56" fill="#e4e0d6" /><rect x="1428" y="718" width="37" height="70" fill="#0e0e0e" /><rect x="1149" y="779" width="93" height="10" fill="#0a0a0a" /><rect x="1133" y="703" width="69" height="47" fill="#d0d0d0" stroke="#9a9a9a" stroke-width="1" /><rect x="1137" y="707" width="61" height="39" fill="#141414" /><rect x="1144" y="716" width="38" height="20" fill="#b4b4b4" /><rect x="1192" y="708" width="4" height="36" fill="#333" /><rect x="1201" y="703" width="10" height="47" fill="#8e8c88" /><rect x="1133" y="749" width="78" height="2" fill="#c8c8c4" /><rect x="1077" y="750" width="73" height="32" fill="#dedad0" /><path d="M1110 772h24c0 6 -4 10 -12 10s-12 -4 -12 -10z" fill="#c0c0c0"/><circle cx="1117" cy="769" r="3" fill="#d8b020" /><circle cx="1124" cy="767" r="3.5" fill="#e0c028" /><circle cx="1129" cy="770" r="3" fill="#d0a818" /><circle cx="1101" cy="779" r="3" fill="#c8a018" /><circle cx="1107" cy="780" r="2.5" fill="#d8b020" /><path d="M1077 779L1150 779L1150 789L1109 805L1109 930L1077 930z" stroke="none" stroke-width="0" fill="#0b0b0b" filter="url(#granite)"/><path d="M1077 778.5L1150.5 778.5L1150.5 789L1109.5 804L1077 798z" stroke="none" stroke-width="0" fill="#080808" /><path d="M1109 805L1136 793L1149 790L1149 885L1136 892L1109 928z" stroke="none" stroke-width="0" fill="#8c8884" /><path d="M1136 793L1149 790L1149 885L1136 892z" stroke="none" stroke-width="0" fill="#7c7874" /><path d="M1109 845L1136 832" stroke="#f4f4f0" stroke-width="1.6" fill="none" /><path d="M1109 883L1136 866" stroke="#f4f4f0" stroke-width="1.6" fill="none" /><path d="M1116 826L1129 819" stroke="#e8e8e8" stroke-width="3.5" fill="none" stroke-dasharray="1 1"/><path d="M1116 866L1129 859" stroke="#e8e8e8" stroke-width="3.5" fill="none" stroke-dasharray="1 1"/><path d="M1116 904L1129 897" stroke="#e8e8e8" stroke-width="3.5" fill="none" stroke-dasharray="1 1"/><rect x="1149" y="789" width="91" height="91" fill="#ebe7dd" /><path d="M1175 834.5L1240 834.5" stroke="#6a6a66" stroke-width="1.6" fill="none" /><path d="M1175.5 789L1175.5 880" stroke="#d8d4ca" stroke-width="1" fill="none" /><rect x="1149" y="880" width="91" height="7" fill="#3a3836" /><rect x="1241" y="776" width="101" height="116" fill="#d4d4d4" /><rect x="1241" y="776" width="101" height="4" fill="#f4f4f4" /><rect x="1241" y="780" width="101" height="18" fill="#c8c8c8" /><circle cx="1248" cy="790" r="3" fill="#0a0a0a" /><circle cx="1258" cy="790" r="3" fill="#0a0a0a" /><circle cx="1268" cy="790" r="3" fill="#0a0a0a" /><circle cx="1312" cy="790" r="3" fill="#0a0a0a" /><circle cx="1322" cy="790" r="3" fill="#0a0a0a" /><circle cx="1332" cy="790" r="3" fill="#0a0a0a" /><rect x="1276" y="785" width="28" height="10" fill="#1c1c1c" /><rect x="1283" y="788" width="12" height="4" fill="#3a8a98" /><rect x="1245" y="802" width="93" height="3" fill="#f0f0f0" /><rect x="1249" y="811" width="85" height="53" fill="#141414" /><rect x="1253" y="815" width="77" height="45" fill="#1e1e1e" /><ellipse cx="1290" cy="829" rx="12" ry="9" fill="#8a8a8a" stroke="#c8c8c8" stroke-width="1"/><path d="M1284 823L1282.2 835" stroke="#e0e0e0" stroke-width="1" fill="none" /><path d="M1287 823L1286.1 835" stroke="#e0e0e0" stroke-width="1" fill="none" /><path d="M1290 823L1290 835" stroke="#e0e0e0" stroke-width="1" fill="none" /><path d="M1293 823L1293.9 835" stroke="#e0e0e0" stroke-width="1" fill="none" /><path d="M1296 823L1297.8 835" stroke="#e0e0e0" stroke-width="1" fill="none" /><path d="M1256 853.5L1328 853.5" stroke="#4a4a4a" stroke-width="1.3" fill="none" /><rect x="1241" y="866" width="101" height="26" fill="#cfcfcf" /><path d="M1241 866.5L1342 866.5" stroke="#a8a8a8" stroke-width="1" fill="none" /><rect x="1237" y="776" width="4" height="114" fill="#3c3834" /><rect x="1342" y="776" width="4" height="114" fill="#3c3834" /><rect x="1346" y="789" width="33" height="91" fill="#ebe7dd" /><rect x="1346" y="880" width="36" height="7" fill="#3a3836" /><path d="M1342 779L1465 779L1465 830L1379 790L1342 790z" stroke="none" stroke-width="0" fill="#0a0a0a" /><path d="M1379 790L1465 830L1465 930L1418 930L1379 880z" stroke="none" stroke-width="0" fill="#8a8680" /><path d="M1393 797L1393 898" stroke="#a4a09a" stroke-width="1" fill="none" /><path d="M1411 805L1411 921" stroke="#a4a09a" stroke-width="1" fill="none" /><path d="M1438 818L1438 930" stroke="#a4a09a" stroke-width="1" fill="none" /><path d="M1408 789L1462 789L1465 796L1465 806L1440 806z" stroke="none" stroke-width="0" fill="#1e1e1e" /><path d="M1410 790L1462 790" stroke="#d8d8d8" stroke-width="1.3" fill="none" /><rect x="1433" y="752" width="20" height="35" fill="#606060" rx="2" /><path d="M1441.5 757L1441.5 785" stroke="#a06050" stroke-width="0.7" fill="none" /><rect x="1447" y="754" width="5" height="32" fill="#565656" /><circle cx="1422" cy="742" r="11.5" fill="#9c9894" /><circle cx="1444" cy="742" r="12" fill="#a4a09c" /><circle cx="1422" cy="741" r="7" fill="#b4b0ac" fill-opacity=".7"/><circle cx="1445" cy="741" r="7" fill="#bcb8b4" fill-opacity=".7"/><path d="M1350 778l10 -34c3 -7 11 -7 14 0l9 34" fill="none" stroke="#94685a" stroke-width="1"/><path d="M1356 778l8 -34M1378 778l-8 -34" fill="none" stroke="#8a5a4c" stroke-width="1"/><path d="M1350 777.5L1383 777.5" stroke="#94685a" stroke-width="1.5" fill="none" /><rect x="1363" y="763" width="5" height="12" fill="#c8c8c8" /><rect x="1356" y="757" width="5" height="18" fill="#5a2a20" /><rect x="1371" y="765" width="4" height="10" fill="#444" /><path d="M1109 930L1136 892L1149 885L1240 885L1240 892L1346 892L1346 880L1379 880L1418 930z" stroke="none" stroke-width="0" fill="#aaa69e" /><path d="M1117 930L1146 890L1238 890L1238 884" stroke="#4898e8" stroke-width="1" fill="none" /><path d="M1344 882L1344 888L1381 888L1412 930" stroke="#4898e8" stroke-width="1" fill="none" /></g><path d="M1159 542a30 9.500 0 0 0 60 0M1165 542a24 6 0 0 0 48 0" fill="none" stroke="#ffff00" stroke-width="1"/><path d="M1167 542L1165.2 549" stroke="#ffff00" stroke-width="0.9" fill="none" /><path d="M1175 542L1173.9 549" stroke="#ffff00" stroke-width="0.9" fill="none" /><path d="M1183 542L1182.5 549" stroke="#ffff00" stroke-width="0.9" fill="none" /><path d="M1191 542L1191.2 549" stroke="#ffff00" stroke-width="0.9" fill="none" /><path d="M1199 542L1199.8 549" stroke="#ffff00" stroke-width="0.9" fill="none" /><path d="M1207 542L1208.4 549" stroke="#ffff00" stroke-width="0.9" fill="none" /><path d="M1214 542L1216 549" stroke="#ffff00" stroke-width="0.9" fill="none" /><g transform="translate(1196.5,549.500) scale(.335,.365)"><path d="M-3 0L-5.5 3L-10 8L-13.5 13L-15.5 18L-17 23L-17.5 28L-17.5 34L-27 60L-31 72L-40 113" stroke="#ffff00" stroke-width="2.6" fill="none" /><path d="M-2.5 0L-4.5 3L-8.2 8L-11.1 13L-12.7 18L-13.9 23L-14.3 28L-14.3 34L-22.1 60L-25.4 72L-32.8 113" stroke="#ffff00" stroke-width="2.6" fill="none" /><path d="M-1.9 0L-3.4 3L-6.2 8L-8.4 13L-9.6 18L-10.5 23L-10.8 28L-10.8 34L-16.7 60L-19.2 72L-24.8 113" stroke="#ffff00" stroke-width="2.6" fill="none" /><path d="M-1.3 0L-2.3 3L-4.2 8L-5.7 13L-6.5 18L-7.1 23L-7.3 28L-7.3 34L-11.3 60L-13 72L-16.8 113" stroke="#ffff00" stroke-width="2.6" fill="none" /><path d="M-0.6 0L-1.1 3L-2 8L-2.7 13L-3.1 18L-3.4 23L-3.5 28L-3.5 34L-5.4 60L-6.2 72L-8 113" stroke="#ffff00" stroke-width="2.6" fill="none" /><path d="M0 0L0 3L0 8L0 13L0 18L0 23L0 28L0 34L0 60L0 72L0 113" stroke="#ffff00" stroke-width="2.6" fill="none" /><path d="M0.6 0L1.1 3L2 8L2.7 13L3.1 18L3.4 23L3.5 28L3.5 34L5.4 60L6.2 72L8 113" stroke="#ffff00" stroke-width="2.6" fill="none" /><path d="M1.3 0L2.3 3L4.2 8L5.7 13L6.5 18L7.1 23L7.3 28L7.3 34L11.3 60L13 72L16.8 113" stroke="#ffff00" stroke-width="2.6" fill="none" /><path d="M1.9 0L3.4 3L6.2 8L8.4 13L9.6 18L10.5 23L10.8 28L10.8 34L16.7 60L19.2 72L24.8 113" stroke="#ffff00" stroke-width="2.6" fill="none" /><path d="M2.5 0L4.5 3L8.2 8L11.1 13L12.7 18L13.9 23L14.3 28L14.3 34L22.1 60L25.4 72L32.8 113" stroke="#ffff00" stroke-width="2.6" fill="none" /><path d="M3 0L5.5 3L10 8L13.5 13L15.5 18L17 23L17.5 28L17.5 34L27 60L31 72L40 113" stroke="#ffff00" stroke-width="2.6" fill="none" /><path d="M-17.5 34L-22 113" stroke="#ffff00" stroke-width="2.6" fill="none" /><path d="M-14 34L-12 113" stroke="#ffff00" stroke-width="2.6" fill="none" /><path d="M-10.5 34L-36 113" stroke="#ffff00" stroke-width="2.6" fill="none" /><path d="M17.5 34L22 113" stroke="#ffff00" stroke-width="2.6" fill="none" /><path d="M14 34L12 113" stroke="#ffff00" stroke-width="2.6" fill="none" /><path d="M10.5 34L36 113" stroke="#ffff00" stroke-width="2.6" fill="none" /><path d="M-5.2 34L-4 113" stroke="#ffff00" stroke-width="2.6" fill="none" /><path d="M5.2 34L4 113" stroke="#ffff00" stroke-width="2.6" fill="none" /><path d="M-7.9 34L-28 113" stroke="#ffff00" stroke-width="2.6" fill="none" /><path d="M7.9 34L28 113" stroke="#ffff00" stroke-width="2.6" fill="none" /><path d="M-5.5 3L5.5 3" stroke="#ffff00" stroke-width="2.6" fill="none" /><path d="M-10 8L10 8" stroke="#ffff00" stroke-width="2.6" fill="none" /><path d="M-13.5 13L13.5 13" stroke="#ffff00" stroke-width="2.6" fill="none" /><path d="M-15.5 18L15.5 18" stroke="#ffff00" stroke-width="2.6" fill="none" /><path d="M-17 23L17 23" stroke="#ffff00" stroke-width="2.6" fill="none" /><path d="M-17.5 28L17.5 28" stroke="#ffff00" stroke-width="2.6" fill="none" /><path d="M-17.5 34L17.5 34" stroke="#ffff00" stroke-width="2.6" fill="none" /><path d="M-27 60L27 60" stroke="#ffff00" stroke-width="2.6" fill="none" /><path d="M-31 72L31 72" stroke="#ffff00" stroke-width="2.6" fill="none" /><path d="M-40 113L40 113" stroke="#ffff00" stroke-width="2.6" fill="none" /><path d="M-3 0l-3.500 9l1 25l3 22h5l3 -22l1 -25l-3.500 -9z" fill="#ffff00"/><path d="M-9 9l-6 12v12h30v-12l-6 -12z" fill="#ffff00" fill-opacity=".45"/></g><path d="M1194.5 549.500l-4 14l-4 27h20l-4 -27l-4 -14z" fill="#ffff00" fill-opacity=".45"/><g transform="translate(1216.5,549.500) scale(.335,.365)"><path d="M-3 0L-5.5 3L-10 8L-13.5 13L-15.5 18L-17 23L-17.5 28L-17.5 34L-27 60L-31 72L-40 113" stroke="#ffff00" stroke-width="2.6" fill="none" /><path d="M-2.5 0L-4.5 3L-8.2 8L-11.1 13L-12.7 18L-13.9 23L-14.3 28L-14.3 34L-22.1 60L-25.4 72L-32.8 113" stroke="#ffff00" stroke-width="2.6" fill="none" /><path d="M-1.9 0L-3.4 3L-6.2 8L-8.4 13L-9.6 18L-10.5 23L-10.8 28L-10.8 34L-16.7 60L-19.2 72L-24.8 113" stroke="#ffff00" stroke-width="2.6" fill="none" /><path d="M-1.3 0L-2.3 3L-4.2 8L-5.7 13L-6.5 18L-7.1 23L-7.3 28L-7.3 34L-11.3 60L-13 72L-16.8 113" stroke="#ffff00" stroke-width="2.6" fill="none" /><path d="M-0.6 0L-1.1 3L-2 8L-2.7 13L-3.1 18L-3.4 23L-3.5 28L-3.5 34L-5.4 60L-6.2 72L-8 113" stroke="#ffff00" stroke-width="2.6" fill="none" /><path d="M0 0L0 3L0 8L0 13L0 18L0 23L0 28L0 34L0 60L0 72L0 113" stroke="#ffff00" stroke-width="2.6" fill="none" /><path d="M0.6 0L1.1 3L2 8L2.7 13L3.1 18L3.4 23L3.5 28L3.5 34L5.4 60L6.2 72L8 113" stroke="#ffff00" stroke-width="2.6" fill="none" /><path d="M1.3 0L2.3 3L4.2 8L5.7 13L6.5 18L7.1 23L7.3 28L7.3 34L11.3 60L13 72L16.8 113" stroke="#ffff00" stroke-width="2.6" fill="none" /><path d="M1.9 0L3.4 3L6.2 8L8.4 13L9.6 18L10.5 23L10.8 28L10.8 34L16.7 60L19.2 72L24.8 113" stroke="#ffff00" stroke-width="2.6" fill="none" /><path d="M2.5 0L4.5 3L8.2 8L11.1 13L12.7 18L13.9 23L14.3 28L14.3 34L22.1 60L25.4 72L32.8 113" stroke="#ffff00" stroke-width="2.6" fill="none" /><path d="M3 0L5.5 3L10 8L13.5 13L15.5 18L17 23L17.5 28L17.5 34L27 60L31 72L40 113" stroke="#ffff00" stroke-width="2.6" fill="none" /><path d="M-17.5 34L-22 113" stroke="#ffff00" stroke-width="2.6" fill="none" /><path d="M-14 34L-12 113" stroke="#ffff00" stroke-width="2.6" fill="none" /><path d="M-10.5 34L-36 113" stroke="#ffff00" stroke-width="2.6" fill="none" /><path d="M17.5 34L22 113" stroke="#ffff00" stroke-width="2.6" fill="none" /><path d="M14 34L12 113" stroke="#ffff00" stroke-width="2.6" fill="none" /><path d="M10.5 34L36 113" stroke="#ffff00" stroke-width="2.6" fill="none" /><path d="M-5.2 34L-4 113" stroke="#ffff00" stroke-width="2.6" fill="none" /><path d="M5.2 34L4 113" stroke="#ffff00" stroke-width="2.6" fill="none" /><path d="M-7.9 34L-28 113" stroke="#ffff00" stroke-width="2.6" fill="none" /><path d="M7.9 34L28 113" stroke="#ffff00" stroke-width="2.6" fill="none" /><path d="M-5.5 3L5.5 3" stroke="#ffff00" stroke-width="2.6" fill="none" /><path d="M-10 8L10 8" stroke="#ffff00" stroke-width="2.6" fill="none" /><path d="M-13.5 13L13.5 13" stroke="#ffff00" stroke-width="2.6" fill="none" /><path d="M-15.5 18L15.5 18" stroke="#ffff00" stroke-width="2.6" fill="none" /><path d="M-17 23L17 23" stroke="#ffff00" stroke-width="2.6" fill="none" /><path d="M-17.5 28L17.5 28" stroke="#ffff00" stroke-width="2.6" fill="none" /><path d="M-17.5 34L17.5 34" stroke="#ffff00" stroke-width="2.6" fill="none" /><path d="M-27 60L27 60" stroke="#ffff00" stroke-width="2.6" fill="none" /><path d="M-31 72L31 72" stroke="#ffff00" stroke-width="2.6" fill="none" /><path d="M-40 113L40 113" stroke="#ffff00" stroke-width="2.6" fill="none" /><path d="M-3 0l-3.500 9l1 25l3 22h5l3 -22l1 -25l-3.500 -9z" fill="#ffff00"/><path d="M-9 9l-6 12v12h30v-12l-6 -12z" fill="#ffff00" fill-opacity=".45"/></g><path d="M1214.5 549.500l-4 14l-4 27h20l-4 -27l-4 -14z" fill="#ffff00" fill-opacity=".45"/><path d="M1299 542a30 9.500 0 0 0 60 0M1305 542a24 6 0 0 0 48 0" fill="none" stroke="#ffff00" stroke-width="1"/><path d="M1307 542L1305.2 549" stroke="#ffff00" stroke-width="0.9" fill="none" /><path d="M1315 542L1313.9 549" stroke="#ffff00" stroke-width="0.9" fill="none" /><path d="M1323 542L1322.5 549" stroke="#ffff00" stroke-width="0.9" fill="none" /><path d="M1331 542L1331.2 549" stroke="#ffff00" stroke-width="0.9" fill="none" /><path d="M1339 542L1339.8 549" stroke="#ffff00" stroke-width="0.9" fill="none" /><path d="M1347 542L1348.4 549" stroke="#ffff00" stroke-width="0.9" fill="none" /><path d="M1354 542L1356 549" stroke="#ffff00" stroke-width="0.9" fill="none" /><g transform="translate(1305,549.500) scale(.335,.365)"><path d="M-3 0L-5.5 3L-10 8L-13.5 13L-15.5 18L-17 23L-17.5 28L-17.5 34L-27 60L-31 72L-40 113" stroke="#ffff00" stroke-width="2.6" fill="none" /><path d="M-2.5 0L-4.5 3L-8.2 8L-11.1 13L-12.7 18L-13.9 23L-14.3 28L-14.3 34L-22.1 60L-25.4 72L-32.8 113" stroke="#ffff00" stroke-width="2.6" fill="none" /><path d="M-1.9 0L-3.4 3L-6.2 8L-8.4 13L-9.6 18L-10.5 23L-10.8 28L-10.8 34L-16.7 60L-19.2 72L-24.8 113" stroke="#ffff00" stroke-width="2.6" fill="none" /><path d="M-1.3 0L-2.3 3L-4.2 8L-5.7 13L-6.5 18L-7.1 23L-7.3 28L-7.3 34L-11.3 60L-13 72L-16.8 113" stroke="#ffff00" stroke-width="2.6" fill="none" /><path d="M-0.6 0L-1.1 3L-2 8L-2.7 13L-3.1 18L-3.4 23L-3.5 28L-3.5 34L-5.4 60L-6.2 72L-8 113" stroke="#ffff00" stroke-width="2.6" fill="none" /><path d="M0 0L0 3L0 8L0 13L0 18L0 23L0 28L0 34L0 60L0 72L0 113" stroke="#ffff00" stroke-width="2.6" fill="none" /><path d="M0.6 0L1.1 3L2 8L2.7 13L3.1 18L3.4 23L3.5 28L3.5 34L5.4 60L6.2 72L8 113" stroke="#ffff00" stroke-width="2.6" fill="none" /><path d="M1.3 0L2.3 3L4.2 8L5.7 13L6.5 18L7.1 23L7.3 28L7.3 34L11.3 60L13 72L16.8 113" stroke="#ffff00" stroke-width="2.6" fill="none" /><path d="M1.9 0L3.4 3L6.2 8L8.4 13L9.6 18L10.5 23L10.8 28L10.8 34L16.7 60L19.2 72L24.8 113" stroke="#ffff00" stroke-width="2.6" fill="none" /><path d="M2.5 0L4.5 3L8.2 8L11.1 13L12.7 18L13.9 23L14.3 28L14.3 34L22.1 60L25.4 72L32.8 113" stroke="#ffff00" stroke-width="2.6" fill="none" /><path d="M3 0L5.5 3L10 8L13.5 13L15.5 18L17 23L17.5 28L17.5 34L27 60L31 72L40 113" stroke="#ffff00" stroke-width="2.6" fill="none" /><path d="M-17.5 34L-22 113" stroke="#ffff00" stroke-width="2.6" fill="none" /><path d="M-14 34L-12 113" stroke="#ffff00" stroke-width="2.6" fill="none" /><path d="M-10.5 34L-36 113" stroke="#ffff00" stroke-width="2.6" fill="none" /><path d="M17.5 34L22 113" stroke="#ffff00" stroke-width="2.6" fill="none" /><path d="M14 34L12 113" stroke="#ffff00" stroke-width="2.6" fill="none" /><path d="M10.5 34L36 113" stroke="#ffff00" stroke-width="2.6" fill="none" /><path d="M-5.2 34L-4 113" stroke="#ffff00" stroke-width="2.6" fill="none" /><path d="M5.2 34L4 113" stroke="#ffff00" stroke-width="2.6" fill="none" /><path d="M-7.9 34L-28 113" stroke="#ffff00" stroke-width="2.6" fill="none" /><path d="M7.9 34L28 113" stroke="#ffff00" stroke-width="2.6" fill="none" /><path d="M-5.5 3L5.5 3" stroke="#ffff00" stroke-width="2.6" fill="none" /><path d="M-10 8L10 8" stroke="#ffff00" stroke-width="2.6" fill="none" /><path d="M-13.5 13L13.5 13" stroke="#ffff00" stroke-width="2.6" fill="none" /><path d="M-15.5 18L15.5 18" stroke="#ffff00" stroke-width="2.6" fill="none" /><path d="M-17 23L17 23" stroke="#ffff00" stroke-width="2.6" fill="none" /><path d="M-17.5 28L17.5 28" stroke="#ffff00" stroke-width="2.6" fill="none" /><path d="M-17.5 34L17.5 34" stroke="#ffff00" stroke-width="2.6" fill="none" /><path d="M-27 60L27 60" stroke="#ffff00" stroke-width="2.6" fill="none" /><path d="M-31 72L31 72" stroke="#ffff00" stroke-width="2.6" fill="none" /><path d="M-40 113L40 113" stroke="#ffff00" stroke-width="2.6" fill="none" /><path d="M-3 0l-3.500 9l1 25l3 22h5l3 -22l1 -25l-3.500 -9z" fill="#ffff00"/><path d="M-9 9l-6 12v12h30v-12l-6 -12z" fill="#ffff00" fill-opacity=".45"/></g><path d="M1303 549.500l-4 14l-4 27h20l-4 -27l-4 -14z" fill="#ffff00" fill-opacity=".45"/><g transform="translate(1324.5,549.500) scale(.335,.365)"><path d="M-3 0L-5.5 3L-10 8L-13.5 13L-15.5 18L-17 23L-17.5 28L-17.5 34L-27 60L-31 72L-40 113" stroke="#ffff00" stroke-width="2.6" fill="none" /><path d="M-2.5 0L-4.5 3L-8.2 8L-11.1 13L-12.7 18L-13.9 23L-14.3 28L-14.3 34L-22.1 60L-25.4 72L-32.8 113" stroke="#ffff00" stroke-width="2.6" fill="none" /><path d="M-1.9 0L-3.4 3L-6.2 8L-8.4 13L-9.6 18L-10.5 23L-10.8 28L-10.8 34L-16.7 60L-19.2 72L-24.8 113" stroke="#ffff00" stroke-width="2.6" fill="none" /><path d="M-1.3 0L-2.3 3L-4.2 8L-5.7 13L-6.5 18L-7.1 23L-7.3 28L-7.3 34L-11.3 60L-13 72L-16.8 113" stroke="#ffff00" stroke-width="2.6" fill="none" /><path d="M-0.6 0L-1.1 3L-2 8L-2.7 13L-3.1 18L-3.4 23L-3.5 28L-3.5 34L-5.4 60L-6.2 72L-8 113" stroke="#ffff00" stroke-width="2.6" fill="none" /><path d="M0 0L0 3L0 8L0 13L0 18L0 23L0 28L0 34L0 60L0 72L0 113" stroke="#ffff00" stroke-width="2.6" fill="none" /><path d="M0.6 0L1.1 3L2 8L2.7 13L3.1 18L3.4 23L3.5 28L3.5 34L5.4 60L6.2 72L8 113" stroke="#ffff00" stroke-width="2.6" fill="none" /><path d="M1.3 0L2.3 3L4.2 8L5.7 13L6.5 18L7.1 23L7.3 28L7.3 34L11.3 60L13 72L16.8 113" stroke="#ffff00" stroke-width="2.6" fill="none" /><path d="M1.9 0L3.4 3L6.2 8L8.4 13L9.6 18L10.5 23L10.8 28L10.8 34L16.7 60L19.2 72L24.8 113" stroke="#ffff00" stroke-width="2.6" fill="none" /><path d="M2.5 0L4.5 3L8.2 8L11.1 13L12.7 18L13.9 23L14.3 28L14.3 34L22.1 60L25.4 72L32.8 113" stroke="#ffff00" stroke-width="2.6" fill="none" /><path d="M3 0L5.5 3L10 8L13.5 13L15.5 18L17 23L17.5 28L17.5 34L27 60L31 72L40 113" stroke="#ffff00" stroke-width="2.6" fill="none" /><path d="M-17.5 34L-22 113" stroke="#ffff00" stroke-width="2.6" fill="none" /><path d="M-14 34L-12 113" stroke="#ffff00" stroke-width="2.6" fill="none" /><path d="M-10.5 34L-36 113" stroke="#ffff00" stroke-width="2.6" fill="none" /><path d="M17.5 34L22 113" stroke="#ffff00" stroke-width="2.6" fill="none" /><path d="M14 34L12 113" stroke="#ffff00" stroke-width="2.6" fill="none" /><path d="M10.5 34L36 113" stroke="#ffff00" stroke-width="2.6" fill="none" /><path d="M-5.2 34L-4 113" stroke="#ffff00" stroke-width="2.6" fill="none" /><path d="M5.2 34L4 113" stroke="#ffff00" stroke-width="2.6" fill="none" /><path d="M-7.9 34L-28 113" stroke="#ffff00" stroke-width="2.6" fill="none" /><path d="M7.9 34L28 113" stroke="#ffff00" stroke-width="2.6" fill="none" /><path d="M-5.5 3L5.5 3" stroke="#ffff00" stroke-width="2.6" fill="none" /><path d="M-10 8L10 8" stroke="#ffff00" stroke-width="2.6" fill="none" /><path d="M-13.5 13L13.5 13" stroke="#ffff00" stroke-width="2.6" fill="none" /><path d="M-15.5 18L15.5 18" stroke="#ffff00" stroke-width="2.6" fill="none" /><path d="M-17 23L17 23" stroke="#ffff00" stroke-width="2.6" fill="none" /><path d="M-17.5 28L17.5 28" stroke="#ffff00" stroke-width="2.6" fill="none" /><path d="M-17.5 34L17.5 34" stroke="#ffff00" stroke-width="2.6" fill="none" /><path d="M-27 60L27 60" stroke="#ffff00" stroke-width="2.6" fill="none" /><path d="M-31 72L31 72" stroke="#ffff00" stroke-width="2.6" fill="none" /><path d="M-40 113L40 113" stroke="#ffff00" stroke-width="2.6" fill="none" /><path d="M-3 0l-3.500 9l1 25l3 22h5l3 -22l1 -25l-3.500 -9z" fill="#ffff00"/><path d="M-9 9l-6 12v12h30v-12l-6 -12z" fill="#ffff00" fill-opacity=".45"/></g><path d="M1322.5 549.500l-4 14l-4 27h20l-4 -27l-4 -14z" fill="#ffff00" fill-opacity=".45"/><path d="M1176.5 542L1176.5 907" stroke="#48a0f0" stroke-width="1.2" fill="none" /><path d="M1196.5 542L1196.5 868" stroke="#48a0f0" stroke-width="1.2" fill="none" /><path d="M1201.5 542L1201.5 907" stroke="#48a0f0" stroke-width="1.2" fill="none" /><path d="M1216.5 542L1216.5 868" stroke="#48a0f0" stroke-width="1.2" fill="none" /><path d="M1304.5 542L1304.5 868" stroke="#48a0f0" stroke-width="1.2" fill="none" /><path d="M1315.5 542L1315.5 907" stroke="#48a0f0" stroke-width="1.2" fill="none" /><path d="M1325.5 542L1325.5 868" stroke="#48a0f0" stroke-width="1.2" fill="none" /><path d="M1341.5 542L1341.5 907" stroke="#48a0f0" stroke-width="1.2" fill="none" /><path d="M1077 734.5L1465 734.5" stroke="#48a0f0" stroke-width="1.2" fill="none" /><rect x="1191.5" y="864" width="9" height="11" fill="none" stroke="#ffff00" stroke-width="1.3" /><path d="M1191.5 864l2 -2h7l2 2" fill="none" stroke="#ffff00" stroke-width="1"/><rect x="1211.5" y="864" width="9" height="11" fill="none" stroke="#ffff00" stroke-width="1.3" /><path d="M1211.5 864l2 -2h7l2 2" fill="none" stroke="#ffff00" stroke-width="1"/><rect x="1299.5" y="864" width="9" height="11" fill="none" stroke="#ffff00" stroke-width="1.3" /><path d="M1299.5 864l2 -2h7l2 2" fill="none" stroke="#ffff00" stroke-width="1"/><rect x="1320.5" y="864" width="9" height="11" fill="none" stroke="#ffff00" stroke-width="1.3" /><path d="M1320.5 864l2 -2h7l2 2" fill="none" stroke="#ffff00" stroke-width="1"/><rect x="1171.5" y="902" width="9" height="11" fill="none" stroke="#ffff00" stroke-width="1.3" /><path d="M1171.5 902l2 -2h7l2 2" fill="none" stroke="#ffff00" stroke-width="1"/><rect x="1196.5" y="902" width="9" height="11" fill="none" stroke="#ffff00" stroke-width="1.3" /><path d="M1196.5 902l2 -2h7l2 2" fill="none" stroke="#ffff00" stroke-width="1"/><rect x="1310.5" y="902" width="9" height="11" fill="none" stroke="#ffff00" stroke-width="1.3" /><path d="M1310.5 902l2 -2h7l2 2" fill="none" stroke="#ffff00" stroke-width="1"/><rect x="1336.5" y="902" width="9" height="11" fill="none" stroke="#ffff00" stroke-width="1.3" /><path d="M1336.5 902l2 -2h7l2 2" fill="none" stroke="#ffff00" stroke-width="1"/><rect x="1076.5" y="541.5" width="389" height="389" fill="none" stroke="#c8c820" stroke-width="1.2" /><path d="M890.5 905L890.5 877" stroke="#2040ff" stroke-width="1.3" fill="none" /><path d="M890 905.5L917 905.5" stroke="#e02020" stroke-width="1.3" fill="none" /><path d="M889 900L893 909" stroke="#20a020" stroke-width="1.3" fill="none" /><text x="891" y="881" font-size="9" fill="#2040ff" font-family="Liberation Sans,sans-serif">z</text><text x="916" y="904" font-size="9" fill="#e02020" font-family="Liberation Sans,sans-serif">x</text></g></svg><div class="vlabel" style="left:3px;top:7px;letter-spacing:-0.07px">[+] [Camera011 ] [User Defined ] [Default Shading ]</div></div>
<div class="vlabel" style="left:868px;top:548px;color:#5a5a5a;text-shadow:0 0 1px #ddd;clip-path:inset(0 0 0 209px);letter-spacing:-0.07px">[+] [Camera011 ] [User Defined ] [Default Shading ]</div>
<div class="abs" style="left:1685px;top:145px;width:234px;height:1px;border-top:1px dotted #999"></div><div class="abs" style="left:1686px;top:147px;width:233px;height:1px;border-top:1px dotted #999"></div>
<div class="abs" style="left:1715px;top:152px;width:31px;height:26px;background:#3a3a3a;border-radius:4px 4px 0 0"></div>
<div class="abs" style="left:1747px;top:152px;width:31px;height:26px;background:#3a3a3a;border-radius:4px 4px 0 0"></div>
<div class="abs" style="left:1779px;top:152px;width:31px;height:26px;background:#3a3a3a;border-radius:4px 4px 0 0"></div>
<div class="abs" style="left:1811px;top:152px;width:31px;height:26px;background:#3a3a3a;border-radius:4px 4px 0 0"></div>
<div class="abs" style="left:1843px;top:152px;width:31px;height:26px;background:#3a3a3a;border-radius:4px 4px 0 0"></div>
<div class="abs" style="left:1683px;top:178px;width:240px;height:754px;background:#464646;border:1px solid #383838;border-radius:0 0 0 5px"></div>
<div class="abs" style="left:1683px;top:152px;width:30px;height:28px;background:#464646;border:1px solid #505050;border-bottom:none;border-radius:4px 4px 0 0"></div>
<div class="dd" style="left:1688px;top:211px;width:227px;height:20px;padding:5px 0 0 4px;font-size:10.8px;color:#e0e0e0">Standard Primitives</div>
<div class="abs" style="left:1688px;top:237px;width:219px;height:167px;background:#525252;border-radius:2px"></div>
<div class="abs" style="left:1688px;top:408px;width:219px;height:55px;background:#525252;border-radius:2px"></div>
<div class="abs" style="left:1910px;top:237px;width:6px;height:695px;background:#3e3e3e"></div>
<div class="t" style="left:1707px;top:241px;font-size:12px;font-weight:bold;color:#fff">Object Type</div>
<div class="t" style="left:1707px;top:412px;font-size:12px;font-weight:bold;color:#fff">Name and Color</div>
<div class="abs" style="left:1749px;top:261px;width:11px;height:11px;background:#4a4a4a;border:1px solid #424242"></div>
<div class="t" style="left:1763px;top:262px;font-size:11px;color:#8a8a8a">AutoGrid</div>
<div class="btn" style="left:1724px;top:278px;width:68px;height:16px;line-height:16px;font-size:11.3px">Box</div>
<div class="btn" style="left:1803px;top:278px;width:68px;height:16px;line-height:16px;font-size:11.3px">Cone</div>
<div class="btn" style="left:1724px;top:299px;width:68px;height:16px;line-height:16px;font-size:11.3px">Sphere</div>
<div class="btn" style="left:1803px;top:299px;width:68px;height:16px;line-height:16px;font-size:11.3px">GeoSphere</div>
<div class="btn" style="left:1724px;top:320px;width:68px;height:16px;line-height:16px;font-size:11.3px">Cylinder</div>
<div class="btn" style="left:1803px;top:320px;width:68px;height:16px;line-height:16px;font-size:11.3px">Tube</div>
<div class="btn" style="left:1724px;top:341px;width:68px;height:16px;line-height:16px;font-size:11.3px">Torus</div>
<div class="btn" style="left:1803px;top:341px;width:68px;height:16px;line-height:16px;font-size:11.3px">Pyramid</div>
<div class="btn" style="left:1724px;top:362px;width:68px;height:16px;line-height:16px;font-size:11.3px">Teapot</div>
<div class="btn" style="left:1803px;top:362px;width:68px;height:16px;line-height:16px;font-size:11.3px">Plane</div>
<div class="btn" style="left:1724px;top:383px;width:68px;height:16px;line-height:16px;font-size:11.3px">TextPlus</div>
<div class="abs" style="left:1722px;top:434px;width:132px;height:19px;background:#5c5c5c;border:1px solid #4a4a4a"></div>
<div class="abs" style="left:1857px;top:434px;width:17px;height:20px;background:#cc1ea0;border:1px solid #222"></div><svg width="1919" height="480"><path d="M1691 165h15M1698.500 157.500v15" stroke="#f4f4f4" stroke-width="2.200"/><g transform="translate(1731,165)"><rect x="-7" y="-7" width="14" height="14" fill="none" stroke="#42bfc2" stroke-width="1.200" stroke-dasharray="4 2"/><path d="M-4 6c0 -6 3 -9 9 -9" fill="none" stroke="#b0a898" stroke-width="2"/></g><g transform="translate(1763,165)"><rect x="-6" y="-7.500" width="12" height="5" fill="#b0a898"/><path d="M0 -2.500v4M-6 7v-5.500h12v5.500" fill="none" stroke="#42bfc2" stroke-width="1.200" stroke-dasharray="3 1.500"/><rect x="-7.500" y="5" width="3" height="3" fill="#42bfc2"/><rect x="4.500" y="5" width="3" height="3" fill="#42bfc2"/></g><g transform="translate(1795,165)"><circle cx="-2" r="6.500" fill="none" stroke="#42bfc2" stroke-width="1"/><circle cx="1.500" r="6.800" fill="#b0a898"/></g><g transform="translate(1827,165)"><rect x="-8" y="-7" width="16" height="10" fill="#b0a898"/><path d="M-3.500 6.500h7M0 3v3" stroke="#b0a898" stroke-width="1.500"/></g><g transform="translate(1858,166) rotate(-45)"><path d="M-1.600 -3v11a1.600 1.600 0 0 0 3.200 0v-11z" fill="#b0a898"/><path d="M-3.500 -8a4.500 4.500 0 1 0 7 0v4h-7z" fill="#b0a898"/></g><rect x="1689" y="184" width="20" height="20" rx="3" fill="#5b8ac6"/><circle cx="1699" cy="194" r="7.300" fill="#d4d4d4" stroke="#333" stroke-width="1"/><g transform="translate(1721,194)"><circle cx="-2" cy="-2.500" r="5" fill="#d4d4d4"/><rect x="-2" y="-1" width="8.500" height="8.500" fill="#d4d4d4" stroke="#444" stroke-width="1.200"/><path d="M-2 3.500a5 5 0 0 0 5 -5" fill="none" stroke="#444" stroke-width="1"/></g><g transform="translate(1743,193)"><path d="M0 -7.500a5.300 5.300 0 0 1 3.200 9.500l-.5 2h-5.400l-.5 -2a5.300 5.300 0 0 1 3.200 -9.500z" fill="#d4d4d4"/><path d="M-2.500 5.500h5M-2 7.800h4" stroke="#d4d4d4" stroke-width="1.300"/></g><g transform="translate(1765,194)"><rect x="-7.500" y="-5" width="10.500" height="10" rx="1" fill="#d4d4d4"/><path d="M3.500 0l4 -4.500v9z" fill="#d4d4d4"/></g><g transform="translate(1787,194)"><path d="M-6.500 -7v14h14zM-3.500 -.5v4.500h4.500z" fill="#d4d4d4" fill-rule="evenodd"/></g><g transform="translate(1809,194)"><path d="M-7 -4c2.500 -2 4.500 -2 7 0s4.500 2 7 0M-7 0c2.500 -2 4.500 -2 7 0s4.500 2 7 0M-7 4c2.500 -2 4.500 -2 7 0s4.500 2 7 0" fill="none" stroke="#d4d4d4" stroke-width="1.500"/></g><circle cx="1826" cy="189" r="1.61" fill="none" stroke="#d4d4d4" stroke-width="1.30"/><path d="M1827.82 189.00L1828.99 189.00" stroke="#d4d4d4" stroke-width="1.30"/><path d="M1827.29 190.29L1828.11 191.11" stroke="#d4d4d4" stroke-width="1.30"/><path d="M1826.00 190.82L1826.00 191.99" stroke="#d4d4d4" stroke-width="1.30"/><path d="M1824.71 190.29L1823.89 191.11" stroke="#d4d4d4" stroke-width="1.30"/><path d="M1824.18 189.00L1823.01 189.00" stroke="#d4d4d4" stroke-width="1.30"/><path d="M1824.71 187.71L1823.89 186.89" stroke="#d4d4d4" stroke-width="1.30"/><path d="M1826.00 187.18L1826.00 186.01" stroke="#d4d4d4" stroke-width="1.30"/><path d="M1827.29 187.71L1828.11 186.89" stroke="#d4d4d4" stroke-width="1.30"/><circle cx="1833" cy="198" r="2.23" fill="none" stroke="#d4d4d4" stroke-width="1.80"/><path d="M1835.52 198.00L1837.14 198.00" stroke="#d4d4d4" stroke-width="1.80"/><path d="M1834.78 199.78L1835.93 200.93" stroke="#d4d4d4" stroke-width="1.80"/><path d="M1833.00 200.52L1833.00 202.14" stroke="#d4d4d4" stroke-width="1.80"/><path d="M1831.22 199.78L1830.07 200.93" stroke="#d4d4d4" stroke-width="1.80"/><path d="M1830.48 198.00L1828.86 198.00" stroke="#d4d4d4" stroke-width="1.80"/><path d="M1831.22 196.22L1830.07 195.07" stroke="#d4d4d4" stroke-width="1.80"/><path d="M1833.00 195.48L1833.00 193.86" stroke="#d4d4d4" stroke-width="1.80"/><path d="M1834.78 196.22L1835.93 195.07" stroke="#d4d4d4" stroke-width="1.80"/><path d="M1900 219h8l-4 5z" fill="#e8e8e8"/><path d="M1693.500 243h6l-3 4z" fill="#c0c0c0"/><path d="M1693.500 414.500h6l-3 4z" fill="#c0c0c0"/><path d="M1894 243h5M1894 245h5M1894 247h5" stroke="#8a8a8a" stroke-width="1" stroke-dasharray="1 1"/><path d="M1894 414h5M1894 416h5M1894 418h5" stroke="#8a8a8a" stroke-width="1" stroke-dasharray="1 1"/><path d="M1858 436h15v16h-15z" fill="none" stroke="#e040b8" stroke-width="1" stroke-dasharray="1 2"/></svg>
<div class="abs" style="left:10px;top:856px;width:19px;height:19px;background:#525252;border-radius:3px"></div>
<div class="abs" style="left:4px;top:886px;width:36px;height:45px;background:#5078cc;border-radius:3px"></div>
<div class="abs" style="left:8px;top:894px;width:14px;height:13px;background:#6e7078;border:1px solid #4a4c55;border-radius:2px"></div>
<div class="abs" style="left:23px;top:894px;width:14px;height:13px;background:#6e7078;border:1px solid #4a4c55;border-radius:2px"></div>
<div class="abs" style="left:8px;top:908px;width:14px;height:13px;background:#6e7078;border:1px solid #4a4c55;border-radius:2px"></div>
<div class="abs" style="left:23px;top:908px;width:14px;height:13px;background:#6e7078;border:1px solid #4a4c55;border-radius:2px"></div>
<div class="btn" style="left:10px;top:937px;width:14px;height:16px;line-height:16px;font-size:12px;background:#5e5e5e">&lt;</div>
<div class="btn" style="left:26px;top:937px;width:123px;height:16px;line-height:16px;font-size:11px;background:#646464;color:#d8d8d8">0 / 100</div>
<div class="btn" style="left:151px;top:937px;width:14px;height:16px;line-height:16px;font-size:12px;background:#5e5e5e">&gt;</div>
<div class="abs" style="left:9px;top:957px;width:1910px;height:2px;background:#1c1c1c"></div>
<div class="abs" style="left:59px;top:959px;width:1811px;height:24px;background:#2c2c2c"></div>
<div class="abs" style="left:63px;top:959px;width:7px;height:24px;background:#a88418;border-left:1px solid #d0a828;border-right:1px solid #d0a828"></div>
<div class="abs" style="left:4px;top:989px;width:98px;height:22px;background:#e4c8d4;border:1px solid #f4f4f4;box-shadow:inset 0 0 0 1px #d8c0c8"></div>
<div class="abs" style="left:4px;top:1013px;width:98px;height:22px;background:#fff;border:1px solid #bdbdbd"></div>
<div class="t" style="left:10px;top:1017px;font-family:'Liberation Mono',monospace;font-size:11px;color:#909090;width:88px;overflow:hidden">MAXScript Mi:</div>
<div class="abs" style="left:105px;top:987px;width:2px;height:50px;background:#262626"></div>
<div class="t" style="transform:scaleX(0.9);transform-origin:0 0;left:111px;top:996px;font-size:11.7px;color:#ececec">None Selected</div>
<div class="t" style="transform:scaleX(0.92);transform-origin:0 0;left:111px;top:1021px;font-size:11.7px;color:#ececec">Click or click-and-drag to select objects</div>
<div class="t" style="left:1102px;top:996px;font-size:11.5px;color:#ececec">X:</div>
<div class="abs" style="left:1115px;top:993px;width:57px;height:17px;background:#5a5a5a"></div>
<div class="t" style="left:1186px;top:996px;font-size:11.5px;color:#ececec">Y:</div>
<div class="abs" style="left:1198px;top:993px;width:58px;height:17px;background:#5a5a5a"></div>
<div class="t" style="left:1270px;top:996px;font-size:11.5px;color:#ececec">Z:</div>
<div class="abs" style="left:1283px;top:993px;width:57px;height:17px;background:#5a5a5a"></div>
<div class="t" style="transform:scaleX(0.94);transform-origin:0 0;left:1355px;top:996px;font-size:11.5px;color:#ececec">Grid = 0.0m</div>
<div class="abs" style="left:1330px;top:1016px;width:21px;height:20px;background:#5b8ac6;border-radius:3px"></div>
<div class="t" style="transform:scaleX(0.9);transform-origin:0 0;left:1356px;top:1021px;font-size:11.7px;color:#ececec">Add Time Tag</div>
<div class="abs" style="left:1492px;top:1015px;width:68px;height:16px;background:#646464"></div>
<div class="t" style="left:1495px;top:1018px;font-size:11px;color:#e0e0e0">0</div>
<div class="abs" style="left:1597px;top:991px;width:42px;height:42px;background:#5c5c5c;border-radius:4px"></div>
<div class="btn" style="left:1644px;top:991px;width:46px;height:20px;line-height:21px;font-size:10.8px;background:#5e5e5e;border-radius:3px">Auto Key</div>
<div class="btn" style="left:1644px;top:1013px;width:46px;height:20px;line-height:21px;font-size:10.8px;background:#5e5e5e;border-radius:3px">Set Key</div>
<div class="dd" style="left:1695px;top:991px;width:114px;height:19px;padding:3px 0 0 4px;font-size:10.7px;color:#e4e4e4">Selected</div>
<div class="btn" style="left:1721px;top:1014px;width:88px;height:20px;line-height:21px;font-size:11.5px;background:#5e5e5e;border-radius:3px">Key Filters...</div>
<div class="abs" style="left:0;top:1040px;width:1919px;height:5px;background:linear-gradient(90deg,#e8e8b0 0,#e8e8b0 48px,#fff 48px,#fff 335px,#dcdcb4 335px,#dcdcb4 960px,#d0ecec 960px)"></div><svg width="1919" height="1045"><path d="M66.5 959v10M66.5 980v3M84.5 959v10M102.5 959v10M120.5 959v10M138.5 959v10M156.5 959v10M156.5 980v3M175.5 959v10M193.5 959v10M211.5 959v10M229.5 959v10M247.5 959v10M247.5 980v3M265.5 959v10M283.5 959v10M301.5 959v10M319.5 959v10M337.5 959v10M337.5 980v3M355.5 959v10M373.5 959v10M391.5 959v10M409.5 959v10M427.5 959v10M427.5 980v3M445.5 959v10M463.5 959v10M481.5 959v10M499.5 959v10M517.5 959v10M517.5 980v3M535.5 959v10M553.5 959v10M571.5 959v10M589.5 959v10M607.5 959v10M607.5 980v3M626.5 959v10M644.5 959v10M662.5 959v10M680.5 959v10M698.5 959v10M698.5 980v3M716.5 959v10M734.5 959v10M752.5 959v10M770.5 959v10M788.5 959v10M788.5 980v3M806.5 959v10M824.5 959v10M842.5 959v10M860.5 959v10M878.5 959v10M878.5 980v3M896.5 959v10M914.5 959v10M932.5 959v10M950.5 959v10M968.5 959v10M968.5 980v3M986.5 959v10M1004.5 959v10M1022.5 959v10M1040.5 959v10M1058.5 959v10M1058.5 980v3M1077.5 959v10M1095.5 959v10M1113.5 959v10M1131.5 959v10M1149.5 959v10M1149.5 980v3M1167.5 959v10M1185.5 959v10M1203.5 959v10M1221.5 959v10M1239.5 959v10M1239.5 980v3M1257.5 959v10M1275.5 959v10M1293.5 959v10M1311.5 959v10M1329.5 959v10M1329.5 980v3M1347.5 959v10M1365.5 959v10M1383.5 959v10M1401.5 959v10M1419.5 959v10M1419.5 980v3M1437.5 959v10M1455.5 959v10M1473.5 959v10M1491.5 959v10M1509.5 959v10M1509.5 980v3M1528.5 959v10M1546.5 959v10M1564.5 959v10M1582.5 959v10M1600.5 959v10M1600.5 980v3M1618.5 959v10M1636.5 959v10M1654.5 959v10M1672.5 959v10M1690.5 959v10M1690.5 980v3M1708.5 959v10M1726.5 959v10M1744.5 959v10M1762.5 959v10M1780.5 959v10M1780.5 980v3M1798.5 959v10M1816.5 959v10M1834.5 959v10M1852.5 959v10M1870.5 959v10M1870.5 980v3" stroke="#9a9a9a" stroke-width="1"/><text x="65.8" y="981" text-anchor="middle" font-size="10.5" fill="#d8d8d8" font-family="Liberation Sans,sans-serif">0</text><text x="156.5" y="981" text-anchor="middle" font-size="10.5" fill="#d8d8d8" font-family="Liberation Sans,sans-serif">5</text><text x="246.7" y="981" text-anchor="middle" font-size="10.5" fill="#d8d8d8" font-family="Liberation Sans,sans-serif">10</text><text x="336.9" y="981" text-anchor="middle" font-size="10.5" fill="#d8d8d8" font-family="Liberation Sans,sans-serif">15</text><text x="427.1" y="981" text-anchor="middle" font-size="10.5" fill="#d8d8d8" font-family="Liberation Sans,sans-serif">20</text><text x="517.3" y="981" text-anchor="middle" font-size="10.5" fill="#d8d8d8" font-family="Liberation Sans,sans-serif">25</text><text x="607.5" y="981" text-anchor="middle" font-size="10.5" fill="#d8d8d8" font-family="Liberation Sans,sans-serif">30</text><text x="697.7" y="981" text-anchor="middle" font-size="10.5" fill="#d8d8d8" font-family="Liberation Sans,sans-serif">35</text><text x="787.9" y="981" text-anchor="middle" font-size="10.5" fill="#d8d8d8" font-family="Liberation Sans,sans-serif">40</text><text x="878.1" y="981" text-anchor="middle" font-size="10.5" fill="#d8d8d8" font-family="Liberation Sans,sans-serif">45</text><text x="968.3" y="981" text-anchor="middle" font-size="10.5" fill="#d8d8d8" font-family="Liberation Sans,sans-serif">50</text><text x="1058.5" y="981" text-anchor="middle" font-size="10.5" fill="#d8d8d8" font-family="Liberation Sans,sans-serif">55</text><text x="1148.7" y="981" text-anchor="middle" font-size="10.5" fill="#d8d8d8" font-family="Liberation Sans,sans-serif">60</text><text x="1238.9" y="981" text-anchor="middle" font-size="10.5" fill="#d8d8d8" font-family="Liberation Sans,sans-serif">65</text><text x="1329.1" y="981" text-anchor="middle" font-size="10.5" fill="#d8d8d8" font-family="Liberation Sans,sans-serif">70</text><text x="1419.3" y="981" text-anchor="middle" font-size="10.5" fill="#d8d8d8" font-family="Liberation Sans,sans-serif">75</text><text x="1509.5" y="981" text-anchor="middle" font-size="10.5" fill="#d8d8d8" font-family="Liberation Sans,sans-serif">80</text><text x="1599.7" y="981" text-anchor="middle" font-size="10.5" fill="#d8d8d8" font-family="Liberation Sans,sans-serif">85</text><text x="1689.9" y="981" text-anchor="middle" font-size="10.5" fill="#d8d8d8" font-family="Liberation Sans,sans-serif">90</text><text x="1780.1" y="981" text-anchor="middle" font-size="10.5" fill="#d8d8d8" font-family="Liberation Sans,sans-serif">95</text><text x="1863.3" y="981" text-anchor="middle" font-size="10.5" fill="#d8d8d8" font-family="Liberation Sans,sans-serif">100</text><path d="M2.5 939V982M4.5 940V982" stroke="#8a8a8a" stroke-width="1" stroke-dasharray="1 1"/><path d="M23 966v10" stroke="#d4d4d4" stroke-width="2" stroke-dasharray="1 1"/><path d="M27 973c2 -8 4 -8 5.500 -1s3 5 4.500 0" fill="none" stroke="#42bfc2" stroke-width="1.300"/><path d="M16 861l7.500 4.500l-7.500 4.500z" fill="#f0f0f0"/><g opacity=".45"><path d="M1026 995h-3v4M1037 995h3v4M1026 1008h-3v-4M1037 1008h3v-4" fill="none" stroke="#bbb" stroke-width="1.200"/><rect x="1027" y="999" width="9" height="6" fill="none" stroke="#999"/><rect x="1054" y="1000" width="10" height="8" rx="1" fill="none" stroke="#999" stroke-width="1.200"/><path d="M1056 1000v-3a3 3 0 0 1 6 0v3" fill="none" stroke="#999" stroke-width="1.200"/></g><rect x="1079" y="994" width="14" height="14" fill="#f4f4f4"/><circle cx="1086" cy="1001" r="3.300" fill="none" stroke="#333" stroke-width="1.600"/><path d="M1086 994v4M1086 1004v4M1079 1001h4M1089 1001h4" stroke="#333" stroke-width="1.400"/><path d="M1469.500 995v12" stroke="#d4d4d4" stroke-width="2"/><path d="M1477 996.5v9l-6 -4.5z" fill="#d4d4d4"/><path d="M1483 996.5v9l-6 -4.5z" fill="#d4d4d4"/><path d="M1489.5 993v16" stroke="#1e1e1e" stroke-width="1.4"/><path d="M1502 996.0v10l-7 -5.0z" fill="#d4d4d4"/><path d="M1504.500 995.500v11M1508 995.500v11" stroke="#d4d4d4" stroke-width="2"/><path d="M1518.5 993.5v15l12.5 -7.5z" fill="#d4d4d4"/><path d="M1535 1010v-4l-4 4z" fill="#d4d4d4"/><path d="M1542 995.500v11M1545.500 995.500v11" stroke="#d4d4d4" stroke-width="2"/><path d="M1548 996.0v10l7 -5.0z" fill="#d4d4d4"/><path d="M1561.5 993v16" stroke="#1e1e1e" stroke-width="1.4"/><path d="M1567 996.5v9l6 -4.5z" fill="#d4d4d4"/><path d="M1573 996.5v9l6 -4.5z" fill="#d4d4d4"/><path d="M1580.500 995v12" stroke="#d4d4d4" stroke-width="2"/><path d="M1475.5 1019.0v8l-5.5 -4.0z" fill="#d4d4d4"/><path d="M1477 1019.0v8l5.5 -4.0z" fill="#d4d4d4"/><path d="M1489.5 1015v16" stroke="#1e1e1e" stroke-width="1.4"/><path d="M1562.5 1015v16" stroke="#1e1e1e" stroke-width="1.4"/><circle cx="1573" cy="1022" r="5" fill="#d4d4d4"/><path d="M1573 1018.500v3.500h3" fill="none" stroke="#444" stroke-width="1.200"/><circle cx="1578" cy="1026.5" r="1.86" fill="none" stroke="#f0a91e" stroke-width="1.50"/><path d="M1580.10 1026.50L1581.45 1026.50" stroke="#f0a91e" stroke-width="1.50"/><path d="M1579.48 1027.98L1580.44 1028.94" stroke="#f0a91e" stroke-width="1.50"/><path d="M1578.00 1028.60L1578.00 1029.95" stroke="#f0a91e" stroke-width="1.50"/><path d="M1576.52 1027.98L1575.56 1028.94" stroke="#f0a91e" stroke-width="1.50"/><path d="M1575.90 1026.50L1574.55 1026.50" stroke="#f0a91e" stroke-width="1.50"/><path d="M1576.52 1025.02L1575.56 1024.06" stroke="#f0a91e" stroke-width="1.50"/><path d="M1578.00 1024.40L1578.00 1023.05" stroke="#f0a91e" stroke-width="1.50"/><path d="M1579.48 1025.02L1580.44 1024.06" stroke="#f0a91e" stroke-width="1.50"/><path d="M1551.500 1020.500h5l-2.500 -3.500zM1551.500 1024.500h5l-2.500 3.500z" fill="#d4d4d4"/><path d="M1328.5 1018v16" stroke="#1e1e1e" stroke-width="1.4"/><g transform="translate(1340.500,1026)" fill="none" stroke="#e8e8e8" stroke-width="1.100"><path d="M0 -6.500l5.500 3v6.500l-5.500 3l-5.500 -3v-6.500z"/><path d="M-5.500 -3.500l5.500 3l5.500 -3M0 -.5v6.500"/></g><path d="M1605 1010h24M1617 998v24" stroke="#e6e6e6" stroke-width="5"/><g transform="translate(1624,1020) rotate(-35)"><circle r="3" fill="none" stroke="#42bfc2" stroke-width="1.700"/><path d="M3 0h9M9 0v3M12 0v3" stroke="#42bfc2" stroke-width="1.700" fill="none"/></g><path d="M1795 999.500h7l-3.500 4.500z" fill="#e0e0e0"/><g transform="translate(1705.500,1024)"><rect x="-2.500" y="-7" width="5" height="5" fill="none" stroke="#d4d4d4" stroke-width="1"/><path d="M-3 -2c-3 2 -4 6 -3.500 10M3 -2c3 2 4 6 3.500 10" fill="none" stroke="#42bfc2" stroke-width="1.600"/><circle cx="-6" cy="-5" r="1" fill="#d4d4d4"/><circle cx="6" cy="-5" r="1" fill="#d4d4d4"/></g><path d="M1717 1032v-4l-4 4z" fill="#d4d4d4"/><g transform="translate(1831,1001)"><rect x="-8" y="-3" width="5" height="5" fill="#42bfc2"/><path d="M2.500 -7v14M2.500 -8.500l3 4h-6zM2.500 8.500l3 -4h-6zM-3 -.5h4" stroke="#d4d4d4" stroke-width="1.400" fill="#d4d4d4"/></g><path d="M1844 1009v-4l-4 4z" fill="#d4d4d4"/><g transform="translate(1852,1001)"><path d="M-6 -2l6 -5l6 5v6h-12z" fill="none" stroke="#d4d4d4" stroke-width="1.300" stroke-dasharray="2 1"/><path d="M0 -7v6M-7 -1l-1.500 3M7 -1l1.500 3" stroke="#d4d4d4" stroke-width="1.300"/><rect x="-2" y="1.500" width="8" height="5.500" fill="#f0a91e"/><path d="M6 3l2.500 -1.500v5l-2.500 -1.500z" fill="#f0a91e"/></g><g transform="translate(1875,1001)"><path d="M-3 -7c-4 2 -5 7 -2 11M3 -7c4 2 5 7 2 11" fill="none" stroke="#d4d4d4" stroke-width="1.800"/><path d="M-5.500 -8.500l4 1l-2.500 3zM5.500 -8.500l-4 1l2.500 3z" fill="#d4d4d4"/><rect x="-2.500" y="1.500" width="8" height="5.500" fill="#f0a91e"/><path d="M5.500 3l2.500 -1.500v5l-2.500 -1.500z" fill="#f0a91e"/></g><g transform="translate(1899,1000)"><path d="M2 -7l4 2v8l-4 2l-4 -2v-8z" fill="#42bfc2"/><path d="M2 -7l4 2l-4 2l-4 -2z" fill="#9fe4e6"/><path d="M-7 1l3 2.500l-3 2.500l-3 -2.500zM-2 5l3 2.500l-3 2.500l-3 -2.500z" fill="#d4d4d4"/></g><path d="M1913 1009v-4l-4 4z" fill="#d4d4d4"/><g transform="translate(1830,1023)"><path d="M-5 -6l10 6l-10 6l3 -6" fill="none" stroke="#d4d4d4" stroke-width="1.400"/></g><g transform="translate(1852,1023)"><circle cx="0" cy="-6" r="1.700" fill="#d4d4d4"/><path d="M0 -4l-1 5l-3 6M-1 1l3.500 2.500l.5 4.500M-.5 -3l-3.500 2.500M0 -3l3 3l2.500 .5" fill="none" stroke="#d4d4d4" stroke-width="1.500"/></g><path d="M1866 1032v-4l-4 4z" fill="#d4d4d4"/><g transform="translate(1874,1022)"><circle cx="0" cy="-1.500" r="5.500" fill="#d4d4d4"/><path d="M-7.500 1.500c3 3 11 1 15 -5" fill="none" stroke="#d4d4d4" stroke-width="1.200"/><rect x="-2" y="2" width="8" height="5.500" fill="#f0a91e"/><path d="M6 3.500l2.500 -1.500v5l-2.500 -1.500z" fill="#f0a91e"/><path d="M-8 3l3 -1v4z" fill="#d4d4d4"/></g><path d="M1889 1032v-4l-4 4z" fill="#d4d4d4"/><g transform="translate(1898,1023)"><rect x="-7" y="-7" width="14" height="14" fill="none" stroke="#d4d4d4" stroke-width="1.500"/><rect x="-7" y="0" width="7" height="7" fill="#d4d4d4"/><path d="M-1 1l6 -6M1 -5.500h4.500v4.500" fill="none" stroke="#d4d4d4" stroke-width="1.500"/></g></svg><div class="t" style="left:1599px;top:948px;font-size:19.5px;color:rgba(190,190,190,.62);letter-spacing:.2px">Activate Windows</div>
<div class="t" style="left:1600px;top:973px;font-size:13.8px;color:rgba(190,190,190,.62);letter-spacing:.25px">Go to Settings to activate Windows.</div>
<div class="t" style="left:843px;top:981px;direction:ltr;font-size:41px;font-weight:bold;color:rgba(160,160,160,.5);transform:scaleX(.905);transform-origin:0 0">mostaql.com</div>
<div class="t" dir="rtl" lang="ar" style="left:778px;top:916px;width:300px;text-align:right;font-family:'DejaVu Sans',sans-serif;font-size:72px;font-weight:bold;color:#a0a0a0;-webkit-text-stroke:3px #a0a0a0;opacity:.5;transform:scaleX(.87);transform-origin:100% 0">مستقل</div>
</body></html>
